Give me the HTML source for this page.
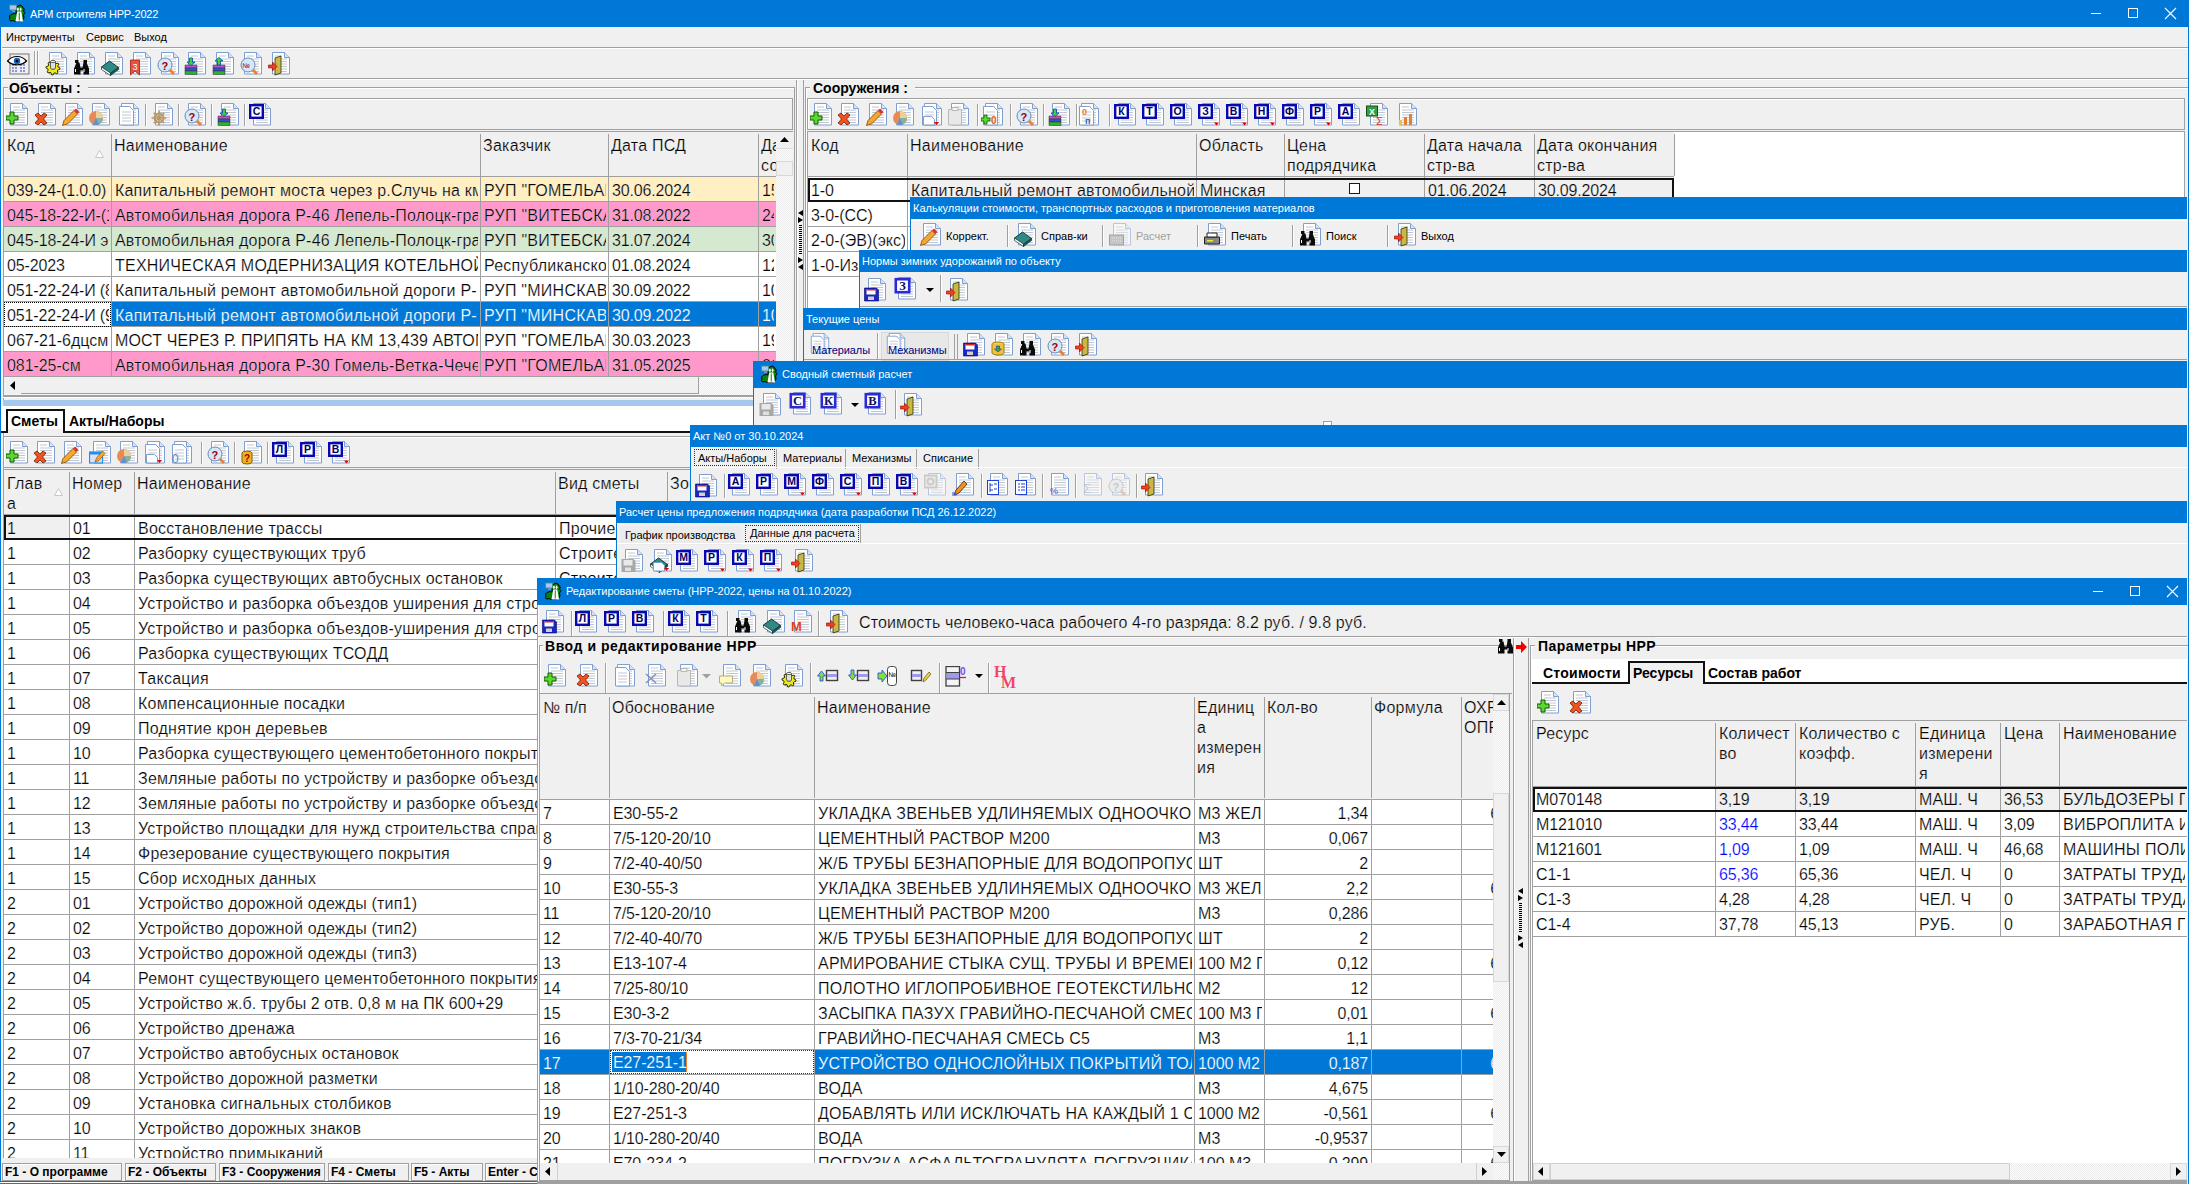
<!DOCTYPE html><html><head><meta charset="utf-8"><title>АРМ строителя НРР-2022</title><style>*{margin:0;padding:0}html,body{width:2189px;height:1184px;overflow:hidden;background:#f0f0f0}body{position:relative;font-family:"Liberation Sans",sans-serif}body div,body svg{position:absolute}.t{white-space:nowrap;font-family:"Liberation Sans",sans-serif}</style></head><body><div style="left:0px;top:0px;width:2189px;height:1184px;background:#f0f0f0"></div>
<div style="left:0px;top:0px;width:2189px;height:27px;background:#0078d7"></div>
<svg style="left:9px;top:4px" width="17" height="18" viewBox="0 0 17 18"><path d="M0.5 12L2 10.5L5 9.5L7 10L7.5 4L9 2L11 1L13 2L14 4L15.5 5L14.5 7L16 8.5L14.5 11L15 14L13.5 16L12 17.5H6L4 16.5L1.5 17L0.3 15.5L1 14z" fill="#078407" stroke="#000" stroke-width="1"/><rect x="0.5" y="1" width="7" height="5" fill="#a8c8f0" stroke="#4a8a8a" stroke-width=".9"/><path d="M3 6.5h3v1h-3z" fill="#c0a0d0"/><path d="M6.5 17.5L8.2 7.5H12.3L14 17.5z" fill="#fff"/><path d="M10.25 8.5V16.5" stroke="#078407" stroke-width="1"/><ellipse cx="8.9" cy="5.2" rx=".9" ry="1.7" fill="#fff"/><ellipse cx="11.6" cy="5.2" rx=".9" ry="1.7" fill="#fff"/></svg>
<div class="t" style="left:30px;top:6px;font-size:11px;color:#fff;line-height:16px;letter-spacing:-0.2px">АРМ строителя НРР-2022</div>
<svg style="left:2090px;top:7px" width="12" height="12" viewBox="0 0 12 12"><path d="M1 6.5h10" stroke="#fff" stroke-width="1"/></svg>
<svg style="left:2127px;top:7px" width="12" height="12" viewBox="0 0 12 12"><rect x="1.5" y="1.5" width="9" height="9" fill="none" stroke="#fff" stroke-width="1"/></svg>
<svg style="left:2164px;top:7px" width="13" height="13" viewBox="0 0 13 13"><path d="M1 1l11 11M12 1l-11 11" stroke="#fff" stroke-width="1.1"/></svg>
<div class="t" style="left:6px;top:29px;font-size:11px;color:#000;line-height:16px;">Инструменты</div>
<div class="t" style="left:86px;top:29px;font-size:11px;color:#000;line-height:16px;">Сервис</div>
<div class="t" style="left:134px;top:29px;font-size:11px;color:#000;line-height:16px;">Выход</div>
<div style="left:1px;top:47px;width:2187px;height:1px;background:#a0a0a0"></div>
<div style="left:1px;top:48px;width:2187px;height:1px;background:#fff"></div>
<div style="left:1px;top:78px;width:2187px;height:1px;background:#a0a0a0"></div>
<div style="left:1px;top:79px;width:2187px;height:1px;background:#fff"></div>
<div style="left:1px;top:47px;width:1px;height:32px;background:#fff"></div>
<svg style="left:7px;top:53px" width="23" height="22" viewBox="0 0 23 22"><rect x="3" y="1" width="19" height="20" fill="#eee" stroke="#777"/><path d="M5 12h6M13 12h6M5 15h6M13 15h6M5 18h6M13 18h6" stroke="#2040c0" stroke-dasharray="2 1"/><path d="M0.5 8c5-6 14-6 19 0c-5 5-14 5-19 0z" fill="#fff" stroke="#000" stroke-width="1.2"/><circle cx="10" cy="8" r="3.2" fill="#1560c0"/><circle cx="10" cy="8" r="1.3" fill="#000"/></svg>
<div style="left:34px;top:51px;width:1px;height:24px;background:#a0a0a0"></div>
<div style="left:35px;top:51px;width:1px;height:24px;background:#fff"></div>
<div style="left:37px;top:51px;width:1px;height:24px;background:#a0a0a0"></div>
<div style="left:38px;top:51px;width:1px;height:24px;background:#fff"></div>
<svg style="left:45px;top:52px;" width="24" height="24" viewBox="0 0 24 24"><path d="M4.5 0.5h12l5 5v16.5h-17z" fill="#fff" stroke="#7f9fd0"/><path d="M16.5 0.5v5h5" fill="#d8e4f6" stroke="#7f9fd0"/><path d="M7 4h7M7 7h12M7 9.5h12M7 12h12M7 14.5h12M7 17h12M7 19.5h12" stroke="#c0c6d0" stroke-width="1"/><path d="M8.00 9.00L9.37 9.13L9.99 11.20L10.89 11.68L12.95 11.05L13.82 12.11L12.80 14.01L13.10 14.99L15.00 16.00L14.87 17.37L12.80 17.99L12.32 18.89L12.95 20.95L11.89 21.82L9.99 20.80L9.01 21.10L8.00 23.00L6.63 22.87L6.01 20.80L5.11 20.32L3.05 20.95L2.18 19.89L3.20 17.99L2.90 17.01L1.00 16.00L1.13 14.63L3.20 14.01L3.68 13.11L3.05 11.05L4.11 10.18L6.01 11.20L6.99 10.90z" fill="#f0e818" stroke="#303000" stroke-width="1"/><circle cx="8" cy="16" r="2.2" fill="#b0b060"/><path d="M5.5 9.5h5v6.5a2.5 1.2 0 0 1-5 0z" fill="#e0e0e0" stroke="#404040" stroke-width=".8"/><ellipse cx="8" cy="9.5" rx="2.5" ry="1.1" fill="#fff" stroke="#404040" stroke-width=".8"/></svg>
<svg style="left:73px;top:52px;" width="24" height="24" viewBox="0 0 24 24"><path d="M4.5 0.5h12l5 5v16.5h-17z" fill="#fff" stroke="#7f9fd0"/><path d="M16.5 0.5v5h5" fill="#d8e4f6" stroke="#7f9fd0"/><path d="M7 4h7M7 7h12M7 9.5h12M7 12h12M7 14.5h12M7 17h12M7 19.5h12" stroke="#c0c6d0" stroke-width="1"/><path d="M1 22.5v-6l2.5-6h3l1 5h2l1-5h3l2.5 6v6h-5.5v-4h-3v4z" fill="#0a0a0a"/><rect x="2" y="8" width="3.5" height="3" fill="#0a0a0a"/><rect x="10.5" y="8" width="3.5" height="3" fill="#0a0a0a"/><path d="M2.5 17v3M11 17v3" stroke="#fff" stroke-width="1"/></svg>
<svg style="left:101px;top:52px;" width="24" height="24" viewBox="0 0 24 24"><path d="M4.5 0.5h12l5 5v16.5h-17z" fill="#fff" stroke="#7f9fd0"/><path d="M16.5 0.5v5h5" fill="#d8e4f6" stroke="#7f9fd0"/><path d="M7 4h7M7 7h12M7 9.5h12M7 12h12M7 14.5h12M7 17h12M7 19.5h12" stroke="#c0c6d0" stroke-width="1"/><path d="M0.5 15l8-6 9 6.5-8 6z" fill="#2f8a86" stroke="#0c3030" stroke-width=".9"/><path d="M0.5 15v2.5l9 6v-2.5z" fill="#fff" stroke="#0c3030" stroke-width=".7"/><path d="M9.5 21v2.5l8-6v-2z" fill="#1f5a58" stroke="#0c3030" stroke-width=".7"/></svg>
<svg style="left:129px;top:52px;" width="24" height="24" viewBox="0 0 24 24"><path d="M4.5 0.5h12l5 5v16.5h-17z" fill="#fff" stroke="#7f9fd0"/><path d="M16.5 0.5v5h5" fill="#d8e4f6" stroke="#7f9fd0"/><path d="M7 4h7M7 7h12M7 9.5h12M7 12h12M7 14.5h12M7 17h12M7 19.5h12" stroke="#c0c6d0" stroke-width="1"/><path d="M1.5 8h9v15l-4.5-4-4.5 4z" fill="#e85040" stroke="#a02010" stroke-width=".8"/><text x="3.5" y="18" font-size="9" fill="#fff" font-family="Liberation Sans">3</text></svg>
<svg style="left:157px;top:52px;" width="24" height="24" viewBox="0 0 24 24"><path d="M4.5 0.5h12l5 5v16.5h-17z" fill="#fff" stroke="#7f9fd0"/><path d="M16.5 0.5v5h5" fill="#d8e4f6" stroke="#7f9fd0"/><path d="M7 4h7M7 7h12M7 9.5h12M7 12h12M7 14.5h12M7 17h12M7 19.5h12" stroke="#c0c6d0" stroke-width="1"/><circle cx="8" cy="13" r="7" fill="#d4e8fa" stroke="#6a8cb8"/><text x="4.5" y="18" font-size="11" font-weight="bold" fill="#a00000" font-family="Liberation Sans">?</text><path d="M13 18l4 4" stroke="#f08030" stroke-width="3"/></svg>
<svg style="left:184px;top:52px;" width="24" height="24" viewBox="0 0 24 24"><path d="M4.5 0.5h12l5 5v16.5h-17z" fill="#fff" stroke="#7f9fd0"/><path d="M16.5 0.5v5h5" fill="#d8e4f6" stroke="#7f9fd0"/><path d="M7 4h7M7 7h12M7 9.5h12M7 12h12M7 14.5h12M7 17h12M7 19.5h12" stroke="#c0c6d0" stroke-width="1"/><path d="M1 13h12v3h-12z" fill="#c050c0" stroke="#333" stroke-width=".5"/><path d="M1 16h12v3h-12z" fill="#3050d0" stroke="#333" stroke-width=".5"/><path d="M1 19h12v3.5h-12z" fill="#30b030" stroke="#333" stroke-width=".5"/><path d="M5.5 6h3v4h2.5l-4 3.5-4-3.5h2.5z" fill="#40d040" stroke="#0040c0" stroke-width=".8"/></svg>
<svg style="left:212px;top:52px;" width="24" height="24" viewBox="0 0 24 24"><path d="M4.5 0.5h12l5 5v16.5h-17z" fill="#fff" stroke="#7f9fd0"/><path d="M16.5 0.5v5h5" fill="#d8e4f6" stroke="#7f9fd0"/><path d="M7 4h7M7 7h12M7 9.5h12M7 12h12M7 14.5h12M7 17h12M7 19.5h12" stroke="#c0c6d0" stroke-width="1"/><path d="M1 13h12v3h-12z" fill="#c050c0" stroke="#333" stroke-width=".5"/><path d="M1 16h12v3h-12z" fill="#3050d0" stroke="#333" stroke-width=".5"/><path d="M1 19h12v3.5h-12z" fill="#30b030" stroke="#333" stroke-width=".5"/><path d="M5.5 13h3v-4h2.5l-4-3.5-4 3.5h2.5z" fill="#40d040" stroke="#0040c0" stroke-width=".8"/></svg>
<svg style="left:240px;top:52px;" width="24" height="24" viewBox="0 0 24 24"><path d="M4.5 0.5h12l5 5v16.5h-17z" fill="#fff" stroke="#7f9fd0"/><path d="M16.5 0.5v5h5" fill="#d8e4f6" stroke="#7f9fd0"/><path d="M7 4h7M7 7h12M7 9.5h12M7 12h12M7 14.5h12M7 17h12M7 19.5h12" stroke="#c0c6d0" stroke-width="1"/><circle cx="8" cy="13" r="7" fill="#d4e8fa" stroke="#6a8cb8"/><text x="2.5" y="16" font-size="7" fill="#a00000" font-family="Liberation Sans">№</text><path d="M13 18l4 4" stroke="#f08030" stroke-width="3"/></svg>
<svg style="left:268px;top:52px;" width="24" height="24" viewBox="0 0 24 24"><path d="M4.5 0.5h12l5 5v16.5h-17z" fill="#fff" stroke="#7f9fd0"/><path d="M16.5 0.5v5h5" fill="#d8e4f6" stroke="#7f9fd0"/><path d="M7 4h7M7 7h12M7 9.5h12M7 12h12M7 14.5h12M7 17h12M7 19.5h12" stroke="#c0c6d0" stroke-width="1"/><path d="M7 6l6-2v17l-6 2z" fill="#c8b848" stroke="#303000" stroke-width=".8"/><path d="M0.5 13h4v-3l4.5 4.5-4.5 4.5v-3h-4z" fill="#f04020" stroke="#900" stroke-width=".6"/></svg>
<div style="left:3px;top:87px;width:792px;height:1100px;border:1px solid #a0a0a0;border-bottom:none;box-sizing:border-box;box-shadow:inset 1px 1px 0 #fff"></div>
<div style="left:8px;top:80px;width:80px;height:16px;background:#f0f0f0"></div>
<div class="t" style="left:9px;top:79px;font-size:14px;color:#000;line-height:18px;font-weight:bold;">Объекты :</div>
<div style="left:3px;top:98px;width:790px;height:32px;border:1px solid #a0a0a0;box-sizing:border-box;box-shadow:inset 1px 1px 0 #fff;background:#f0f0f0"></div>
<svg style="left:6px;top:103px;" width="24" height="24" viewBox="0 0 24 24"><path d="M4.5 0.5h12l5 5v16.5h-17z" fill="#fff" stroke="#7f9fd0"/><path d="M16.5 0.5v5h5" fill="#d8e4f6" stroke="#7f9fd0"/><path d="M7 4h7M7 7h12M7 9.5h12M7 12h12M7 14.5h12M7 17h12M7 19.5h12" stroke="#c0c6d0" stroke-width="1"/><path d="M4 9h4v4h4v4h-4v4h-4v-4h-4v-4h4z" fill="#58d830" stroke="#185800" stroke-width="1"/></svg>
<svg style="left:34px;top:103px;" width="24" height="24" viewBox="0 0 24 24"><path d="M4.5 0.5h12l5 5v16.5h-17z" fill="#fff" stroke="#7f9fd0"/><path d="M16.5 0.5v5h5" fill="#d8e4f6" stroke="#7f9fd0"/><path d="M7 4h7M7 7h12M7 9.5h12M7 12h12M7 14.5h12M7 17h12M7 19.5h12" stroke="#c0c6d0" stroke-width="1"/><path d="M1 12l3-2 3 3 3-3 3 2-3.5 4 3.5 4-3 2-3-3-3 3-3-2 3.5-4z" fill="#f0541c" stroke="#701800" stroke-width=".8"/></svg>
<svg style="left:61px;top:103px;" width="24" height="24" viewBox="0 0 24 24"><path d="M4.5 0.5h12l5 5v16.5h-17z" fill="#fff" stroke="#7f9fd0"/><path d="M16.5 0.5v5h5" fill="#d8e4f6" stroke="#7f9fd0"/><path d="M7 4h7M7 7h12M7 9.5h12M7 12h12M7 14.5h12M7 17h12M7 19.5h12" stroke="#c0c6d0" stroke-width="1"/><path d="M1.5 22.5l1.5-5 10-10 3.5 3.5-10 10z" fill="#f4a830" stroke="#804000" stroke-width=".8"/><path d="M13 7.5l2-2 3.5 3.5-2 2z" fill="#e03030"/></svg>
<svg style="left:88px;top:103px;" width="24" height="24" viewBox="0 0 24 24"><path d="M4.5 0.5h12l5 5v16.5h-17z" fill="#fff" stroke="#7f9fd0"/><path d="M16.5 0.5v5h5" fill="#d8e4f6" stroke="#7f9fd0"/><path d="M7 4h7M7 7h12M7 9.5h12M7 12h12M7 14.5h12M7 17h12M7 19.5h12" stroke="#c0c6d0" stroke-width="1"/><circle cx="8" cy="15" r="7" fill="#e88a58"/><path d="M8 15v-7a7 7 0 0 1 7 7z" fill="#ecd098"/><path d="M8 15h7a7 7 0 0 1-4 6.4z" fill="#84b4a0"/><path d="M8 15l3 6.4a7 7 0 0 1-6 0z" fill="#5894d4"/></svg>
<svg style="left:117px;top:103px;" width="24" height="24" viewBox="0 0 24 24"><path d="M4.5 0.5h12l5 5v16.5h-17z" fill="#fff" stroke="#7f9fd0"/><path d="M16.5 0.5v5h5" fill="#d8e4f6" stroke="#7f9fd0"/><path d="M7 4h7M7 7h12M7 9.5h12M7 12h12M7 14.5h12M7 17h12M7 19.5h12" stroke="#c0c6d0" stroke-width="1"/><path d="M2.5 3.5h10l4 4v14.5h-14z" fill="#fff" stroke="#7f9fd0"/><path d="M5 9h9M5 12h9M5 15h9M5 18h9" stroke="#c0c6d0"/></svg>
<div style="left:145px;top:104px;width:1px;height:22px;background:#a0a0a0"></div>
<div style="left:146px;top:104px;width:1px;height:22px;background:#ffffff"></div>
<svg style="left:151px;top:103px;" width="24" height="24" viewBox="0 0 24 24"><path d="M4.5 0.5h12l5 5v16.5h-17z" fill="#fff" stroke="#7f9fd0"/><path d="M16.5 0.5v5h5" fill="#d8e4f6" stroke="#7f9fd0"/><path d="M7 4h7M7 7h12M7 9.5h12M7 12h12M7 14.5h12M7 17h12M7 19.5h12" stroke="#c0c6d0" stroke-width="1"/><circle cx="8" cy="15" r="4.5" fill="none" stroke="#b89868" stroke-width="2"/><circle cx="8" cy="15" r="1.6" fill="#b89868"/><path d="M8 7.5v15M0.5 15h15M2.7 9.7l10.6 10.6M13.3 9.7l-10.6 10.6" stroke="#b89868" stroke-width="1.6"/></svg>
<div style="left:178px;top:104px;width:1px;height:22px;background:#a0a0a0"></div>
<div style="left:179px;top:104px;width:1px;height:22px;background:#ffffff"></div>
<svg style="left:184px;top:103px;" width="24" height="24" viewBox="0 0 24 24"><path d="M4.5 0.5h12l5 5v16.5h-17z" fill="#fff" stroke="#7f9fd0"/><path d="M16.5 0.5v5h5" fill="#d8e4f6" stroke="#7f9fd0"/><path d="M7 4h7M7 7h12M7 9.5h12M7 12h12M7 14.5h12M7 17h12M7 19.5h12" stroke="#c0c6d0" stroke-width="1"/><circle cx="8" cy="13" r="7" fill="#d4e8fa" stroke="#6a8cb8"/><text x="4.5" y="18" font-size="11" font-weight="bold" fill="#a00000" font-family="Liberation Sans">?</text><path d="M13 18l4 4" stroke="#f08030" stroke-width="3"/></svg>
<div style="left:211px;top:104px;width:1px;height:22px;background:#a0a0a0"></div>
<div style="left:212px;top:104px;width:1px;height:22px;background:#ffffff"></div>
<svg style="left:217px;top:103px;" width="24" height="24" viewBox="0 0 24 24"><path d="M4.5 0.5h12l5 5v16.5h-17z" fill="#fff" stroke="#7f9fd0"/><path d="M16.5 0.5v5h5" fill="#d8e4f6" stroke="#7f9fd0"/><path d="M7 4h7M7 7h12M7 9.5h12M7 12h12M7 14.5h12M7 17h12M7 19.5h12" stroke="#c0c6d0" stroke-width="1"/><path d="M1 13h12v3h-12z" fill="#c050c0" stroke="#333" stroke-width=".5"/><path d="M1 16h12v3h-12z" fill="#3050d0" stroke="#333" stroke-width=".5"/><path d="M1 19h12v3.5h-12z" fill="#30b030" stroke="#333" stroke-width=".5"/><path d="M5.5 6h3v4h2.5l-4 3.5-4-3.5h2.5z" fill="#40d040" stroke="#0040c0" stroke-width=".8"/></svg>
<div style="left:244px;top:104px;width:1px;height:22px;background:#a0a0a0"></div>
<div style="left:245px;top:104px;width:1px;height:22px;background:#ffffff"></div>
<svg style="left:249px;top:103px;" width="24" height="24" viewBox="0 0 24 24"><path d="M4.5 0.5h12l5 5v16.5h-17z" fill="#fff" stroke="#7f9fd0"/><path d="M16.5 0.5v5h5" fill="#d8e4f6" stroke="#7f9fd0"/><path d="M7 4h7M7 7h12M7 9.5h12M7 12h12M7 14.5h12M7 17h12M7 19.5h12" stroke="#c0c6d0" stroke-width="1"/><rect x="1.2" y="2.2" width="12.6" height="12.6" fill="#fff" stroke="#0808b0" stroke-width="2.4"/><text x="7.5" y="12.3" font-size="10.5" font-weight="bold" fill="#000060" text-anchor="middle" font-family="Liberation Sans">C</text></svg>
<div style="left:3px;top:131px;width:790px;height:265px;background:#fff;border:1px solid #a0a0a0;box-sizing:border-box"></div>
<div style="left:4px;top:132px;width:772px;height:45px;background:#f0f0f0"></div>
<div style="left:4px;top:176px;width:772px;height:1px;background:#a0a0a0"></div>
<div style="left:111px;top:134px;width:1px;height:42px;background:#a0a0a0"></div>
<div style="left:480px;top:134px;width:1px;height:42px;background:#a0a0a0"></div>
<div style="left:608px;top:134px;width:1px;height:42px;background:#a0a0a0"></div>
<div style="left:758px;top:134px;width:1px;height:42px;background:#a0a0a0"></div>
<div class="t" style="left:7px;top:136px;font-size:16px;color:#000;width:751px;overflow:hidden;line-height:20px;-webkit-text-stroke:0.2px #fff;letter-spacing:0.25px;">Код</div>
<div class="t" style="left:114px;top:136px;font-size:16px;color:#000;width:644px;overflow:hidden;line-height:20px;-webkit-text-stroke:0.2px #fff;letter-spacing:0.25px;">Наименование</div>
<div class="t" style="left:483px;top:136px;font-size:16px;color:#000;width:275px;overflow:hidden;line-height:20px;-webkit-text-stroke:0.2px #fff;letter-spacing:0.25px;">Заказчик</div>
<div class="t" style="left:611px;top:136px;font-size:16px;color:#000;width:147px;overflow:hidden;line-height:20px;-webkit-text-stroke:0.2px #fff;letter-spacing:0.219px;">Дата ПСД</div>
<div class="t" style="left:761px;top:136px;font-size:16px;color:#000;width:15px;overflow:hidden;line-height:20px;-webkit-text-stroke:0.2px #fff;letter-spacing:0.25px;">Дата<br>создания</div>
<svg style="left:95px;top:150px" width="9" height="8" viewBox="0 0 9 8"><path d="M4.5 0.5L8.5 7.5H0.5z" fill="#fff" stroke="#c8c8c8"/></svg>
<div style="left:4px;top:177px;width:107px;height:25px;background:#ffefc3"></div>
<div class="t" style="left:7px;top:181px;font-size:16px;color:#000;width:102px;overflow:hidden;line-height:20px;-webkit-text-stroke:0.2px #fff;letter-spacing:-0.15px;">039-24-(1.0.0)</div>
<div style="left:112px;top:177px;width:368px;height:25px;background:#ffefc3"></div>
<div class="t" style="left:115px;top:181px;font-size:16px;color:#000;width:363px;overflow:hidden;line-height:20px;-webkit-text-stroke:0.2px #fff;letter-spacing:0.187px;">Капитальный ремонт моста через р.Случь на км 12</div>
<div style="left:481px;top:177px;width:127px;height:25px;background:#ffefc3"></div>
<div class="t" style="left:484px;top:181px;font-size:16px;color:#000;width:122px;overflow:hidden;line-height:20px;-webkit-text-stroke:0.2px #fff;letter-spacing:0.237px;">РУП &quot;ГОМЕЛЬАВТОДОР&quot;</div>
<div style="left:609px;top:177px;width:149px;height:25px;background:#ffefc3"></div>
<div class="t" style="left:612px;top:181px;font-size:16px;color:#000;width:144px;overflow:hidden;line-height:20px;-webkit-text-stroke:0.2px #fff;letter-spacing:-0.15px;">30.06.2024</div>
<div style="left:759px;top:177px;width:17px;height:25px;background:#ffefc3"></div>
<div class="t" style="left:762px;top:181px;font-size:16px;color:#000;width:12px;overflow:hidden;line-height:20px;-webkit-text-stroke:0.2px #fff;letter-spacing:-0.15px;">15.05.2024</div>
<div style="left:4px;top:201px;width:772px;height:1px;background:#a0a0a0"></div>
<div style="left:4px;top:202px;width:107px;height:25px;background:#ff99cc"></div>
<div class="t" style="left:7px;top:206px;font-size:16px;color:#000;width:102px;overflow:hidden;line-height:20px;-webkit-text-stroke:0.2px #fff;letter-spacing:-0.123px;">045-18-22-И-(1)</div>
<div style="left:112px;top:202px;width:368px;height:25px;background:#ff99cc"></div>
<div class="t" style="left:115px;top:206px;font-size:16px;color:#000;width:363px;overflow:hidden;line-height:20px;-webkit-text-stroke:0.2px #fff;letter-spacing:0.191px;">Автомобильная дорога Р-46 Лепель-Полоцк-граница</div>
<div style="left:481px;top:202px;width:127px;height:25px;background:#ff99cc"></div>
<div class="t" style="left:484px;top:206px;font-size:16px;color:#000;width:122px;overflow:hidden;line-height:20px;-webkit-text-stroke:0.2px #fff;letter-spacing:0.237px;">РУП &quot;ВИТЕБСКАВТОДОР&quot;</div>
<div style="left:609px;top:202px;width:149px;height:25px;background:#ff99cc"></div>
<div class="t" style="left:612px;top:206px;font-size:16px;color:#000;width:144px;overflow:hidden;line-height:20px;-webkit-text-stroke:0.2px #fff;letter-spacing:-0.15px;">31.08.2022</div>
<div style="left:759px;top:202px;width:17px;height:25px;background:#ff99cc"></div>
<div class="t" style="left:762px;top:206px;font-size:16px;color:#000;width:12px;overflow:hidden;line-height:20px;-webkit-text-stroke:0.2px #fff;letter-spacing:-0.15px;">24.05.2022</div>
<div style="left:4px;top:226px;width:772px;height:1px;background:#a0a0a0"></div>
<div style="left:4px;top:227px;width:107px;height:25px;background:#d5e8d0"></div>
<div class="t" style="left:7px;top:231px;font-size:16px;color:#000;width:102px;overflow:hidden;line-height:20px;-webkit-text-stroke:0.2px #fff;letter-spacing:-0.077px;">045-18-24-И э</div>
<div style="left:112px;top:227px;width:368px;height:25px;background:#d5e8d0"></div>
<div class="t" style="left:115px;top:231px;font-size:16px;color:#000;width:363px;overflow:hidden;line-height:20px;-webkit-text-stroke:0.2px #fff;letter-spacing:0.191px;">Автомобильная дорога Р-46 Лепель-Полоцк-граница</div>
<div style="left:481px;top:227px;width:127px;height:25px;background:#d5e8d0"></div>
<div class="t" style="left:484px;top:231px;font-size:16px;color:#000;width:122px;overflow:hidden;line-height:20px;-webkit-text-stroke:0.2px #fff;letter-spacing:0.237px;">РУП &quot;ВИТЕБСКАВТОДОР&quot;</div>
<div style="left:609px;top:227px;width:149px;height:25px;background:#d5e8d0"></div>
<div class="t" style="left:612px;top:231px;font-size:16px;color:#000;width:144px;overflow:hidden;line-height:20px;-webkit-text-stroke:0.2px #fff;letter-spacing:-0.15px;">31.07.2024</div>
<div style="left:759px;top:227px;width:17px;height:25px;background:#d5e8d0"></div>
<div class="t" style="left:762px;top:231px;font-size:16px;color:#000;width:12px;overflow:hidden;line-height:20px;-webkit-text-stroke:0.2px #fff;letter-spacing:-0.15px;">30.05.2024</div>
<div style="left:4px;top:251px;width:772px;height:1px;background:#a0a0a0"></div>
<div style="left:4px;top:252px;width:107px;height:25px;background:#fff"></div>
<div class="t" style="left:7px;top:256px;font-size:16px;color:#000;width:102px;overflow:hidden;line-height:20px;-webkit-text-stroke:0.2px #fff;letter-spacing:-0.15px;">05-2023</div>
<div style="left:112px;top:252px;width:368px;height:25px;background:#fff"></div>
<div class="t" style="left:115px;top:256px;font-size:16px;color:#000;width:363px;overflow:hidden;line-height:20px;-webkit-text-stroke:0.2px #fff;letter-spacing:0.235px;">ТЕХНИЧЕСКАЯ МОДЕРНИЗАЦИЯ КОТЕЛЬНОЙ</div>
<div style="left:481px;top:252px;width:127px;height:25px;background:#fff"></div>
<div class="t" style="left:484px;top:256px;font-size:16px;color:#000;width:122px;overflow:hidden;line-height:20px;-webkit-text-stroke:0.2px #fff;letter-spacing:0.25px;">Республиканское</div>
<div style="left:609px;top:252px;width:149px;height:25px;background:#fff"></div>
<div class="t" style="left:612px;top:256px;font-size:16px;color:#000;width:144px;overflow:hidden;line-height:20px;-webkit-text-stroke:0.2px #fff;letter-spacing:-0.15px;">01.08.2024</div>
<div style="left:759px;top:252px;width:17px;height:25px;background:#fff"></div>
<div class="t" style="left:762px;top:256px;font-size:16px;color:#000;width:12px;overflow:hidden;line-height:20px;-webkit-text-stroke:0.2px #fff;letter-spacing:-0.15px;">12.06.2024</div>
<div style="left:4px;top:276px;width:772px;height:1px;background:#a0a0a0"></div>
<div style="left:4px;top:277px;width:107px;height:25px;background:#fff"></div>
<div class="t" style="left:7px;top:281px;font-size:16px;color:#000;width:102px;overflow:hidden;line-height:20px;-webkit-text-stroke:0.2px #fff;letter-spacing:-0.113px;">051-22-24-И (8)</div>
<div style="left:112px;top:277px;width:368px;height:25px;background:#fff"></div>
<div class="t" style="left:115px;top:281px;font-size:16px;color:#000;width:363px;overflow:hidden;line-height:20px;-webkit-text-stroke:0.2px #fff;letter-spacing:0.217px;">Капитальный ремонт автомобильной дороги Р-</div>
<div style="left:481px;top:277px;width:127px;height:25px;background:#fff"></div>
<div class="t" style="left:484px;top:281px;font-size:16px;color:#000;width:122px;overflow:hidden;line-height:20px;-webkit-text-stroke:0.2px #fff;letter-spacing:0.236px;">РУП &quot;МИНСКАВТОДОР&quot;</div>
<div style="left:609px;top:277px;width:149px;height:25px;background:#fff"></div>
<div class="t" style="left:612px;top:281px;font-size:16px;color:#000;width:144px;overflow:hidden;line-height:20px;-webkit-text-stroke:0.2px #fff;letter-spacing:-0.15px;">30.09.2022</div>
<div style="left:759px;top:277px;width:17px;height:25px;background:#fff"></div>
<div class="t" style="left:762px;top:281px;font-size:16px;color:#000;width:12px;overflow:hidden;line-height:20px;-webkit-text-stroke:0.2px #fff;letter-spacing:-0.15px;">10.06.2022</div>
<div style="left:4px;top:301px;width:772px;height:1px;background:#a0a0a0"></div>
<div style="left:4px;top:302px;width:107px;height:25px;background:#fff"></div>
<div class="t" style="left:7px;top:306px;font-size:16px;color:#000;width:102px;overflow:hidden;line-height:20px;-webkit-text-stroke:0.2px #fff;letter-spacing:-0.113px;">051-22-24-И (9)</div>
<div style="left:112px;top:302px;width:368px;height:25px;background:#0078d7"></div>
<div class="t" style="left:115px;top:306px;font-size:16px;color:#fff;width:363px;overflow:hidden;line-height:20px;-webkit-text-stroke:0.2px #0078d7;letter-spacing:0.217px;">Капитальный ремонт автомобильной дороги Р-</div>
<div style="left:481px;top:302px;width:127px;height:25px;background:#0078d7"></div>
<div class="t" style="left:484px;top:306px;font-size:16px;color:#fff;width:122px;overflow:hidden;line-height:20px;-webkit-text-stroke:0.2px #0078d7;letter-spacing:0.236px;">РУП &quot;МИНСКАВТОДОР&quot;</div>
<div style="left:609px;top:302px;width:149px;height:25px;background:#0078d7"></div>
<div class="t" style="left:612px;top:306px;font-size:16px;color:#fff;width:144px;overflow:hidden;line-height:20px;-webkit-text-stroke:0.2px #0078d7;letter-spacing:-0.15px;">30.09.2022</div>
<div style="left:759px;top:302px;width:17px;height:25px;background:#0078d7"></div>
<div class="t" style="left:762px;top:306px;font-size:16px;color:#fff;width:12px;overflow:hidden;line-height:20px;-webkit-text-stroke:0.2px #0078d7;letter-spacing:-0.15px;">10.06.2022</div>
<div style="left:4px;top:326px;width:772px;height:1px;background:#a0a0a0"></div>
<div style="left:4px;top:327px;width:107px;height:25px;background:#fff"></div>
<div class="t" style="left:7px;top:331px;font-size:16px;color:#000;width:102px;overflow:hidden;line-height:20px;-webkit-text-stroke:0.2px #fff;letter-spacing:-0.017px;">067-21-6дцсм</div>
<div style="left:112px;top:327px;width:368px;height:25px;background:#fff"></div>
<div class="t" style="left:115px;top:331px;font-size:16px;color:#000;width:363px;overflow:hidden;line-height:20px;-webkit-text-stroke:0.2px #fff;letter-spacing:0.142px;">МОСТ ЧЕРЕЗ Р. ПРИПЯТЬ НА КМ 13,439 АВТОМОБ</div>
<div style="left:481px;top:327px;width:127px;height:25px;background:#fff"></div>
<div class="t" style="left:484px;top:331px;font-size:16px;color:#000;width:122px;overflow:hidden;line-height:20px;-webkit-text-stroke:0.2px #fff;letter-spacing:0.237px;">РУП &quot;ГОМЕЛЬАВТОДОР&quot;</div>
<div style="left:609px;top:327px;width:149px;height:25px;background:#fff"></div>
<div class="t" style="left:612px;top:331px;font-size:16px;color:#000;width:144px;overflow:hidden;line-height:20px;-webkit-text-stroke:0.2px #fff;letter-spacing:-0.15px;">30.03.2023</div>
<div style="left:759px;top:327px;width:17px;height:25px;background:#fff"></div>
<div class="t" style="left:762px;top:331px;font-size:16px;color:#000;width:12px;overflow:hidden;line-height:20px;-webkit-text-stroke:0.2px #fff;letter-spacing:-0.15px;">19.01.2023</div>
<div style="left:4px;top:351px;width:772px;height:1px;background:#a0a0a0"></div>
<div style="left:4px;top:352px;width:107px;height:25px;background:#ff99cc"></div>
<div class="t" style="left:7px;top:356px;font-size:16px;color:#000;width:102px;overflow:hidden;line-height:20px;-webkit-text-stroke:0.2px #fff;letter-spacing:-0.061px;">081-25-см</div>
<div style="left:112px;top:352px;width:368px;height:25px;background:#ff99cc"></div>
<div class="t" style="left:115px;top:356px;font-size:16px;color:#000;width:363px;overflow:hidden;line-height:20px;-webkit-text-stroke:0.2px #fff;letter-spacing:0.19px;">Автомобильная дорога Р-30 Гомель-Ветка-Чечерск</div>
<div style="left:481px;top:352px;width:127px;height:25px;background:#ff99cc"></div>
<div class="t" style="left:484px;top:356px;font-size:16px;color:#000;width:122px;overflow:hidden;line-height:20px;-webkit-text-stroke:0.2px #fff;letter-spacing:0.237px;">РУП &quot;ГОМЕЛЬАВТОДОР&quot;</div>
<div style="left:609px;top:352px;width:149px;height:25px;background:#ff99cc"></div>
<div class="t" style="left:612px;top:356px;font-size:16px;color:#000;width:144px;overflow:hidden;line-height:20px;-webkit-text-stroke:0.2px #fff;letter-spacing:-0.15px;">31.05.2025</div>
<div style="left:759px;top:352px;width:17px;height:25px;background:#ff99cc"></div>
<div class="t" style="left:762px;top:356px;font-size:16px;color:#000;width:12px;overflow:hidden;line-height:20px;-webkit-text-stroke:0.2px #fff;letter-spacing:-0.15px;">01.02.2025</div>
<div style="left:4px;top:376px;width:772px;height:1px;background:#a0a0a0"></div>
<div style="left:111px;top:177px;width:1px;height:200px;background:#a0a0a0"></div>
<div style="left:480px;top:177px;width:1px;height:200px;background:#a0a0a0"></div>
<div style="left:608px;top:177px;width:1px;height:200px;background:#a0a0a0"></div>
<div style="left:758px;top:177px;width:1px;height:200px;background:#a0a0a0"></div>
<div style="left:4px;top:302px;width:107px;height:25px;border:1px dotted #000;box-sizing:border-box"></div>
<div style="left:776px;top:132px;width:17px;height:245px;background:repeating-conic-gradient(#fdfdfd 0 25%,#ebebeb 0 50%) 0 0/2px 2px"></div>
<div style="left:776px;top:132px;width:17px;height:16px;background:#f0f0f0;border-bottom:1px solid #ddd"></div>
<svg style="left:780px;top:137px" width="9" height="5" viewBox="0 0 9 5"><path d="M0 5h9l-4.5-5z" fill="#000"/></svg>
<div style="left:776px;top:161px;width:17px;height:15px;background:#f0f0f0;border:1px solid #d8d8d8;box-sizing:border-box"></div>
<div style="left:4px;top:377px;width:789px;height:18px;background:repeating-conic-gradient(#fdfdfd 0 25%,#ebebeb 0 50%) 0 0/2px 2px"></div>
<div style="left:4px;top:377px;width:17px;height:17px;background:#f0f0f0;border-right:1px solid #d0d0d0"></div>
<div style="left:21px;top:377px;width:678px;height:17px;background:#f0f0f0;border-right:1px solid #a0a0a0;border-bottom:1px solid #a0a0a0;box-sizing:border-box"></div>
<svg style="left:10px;top:381px" width="5" height="9" viewBox="0 0 5 9"><path d="M5 0v9l-5-4.5z" fill="#000"/></svg>
<div style="left:3px;top:396px;width:790px;height:1px;background:#a0a0a0"></div>
<div style="left:3px;top:397px;width:790px;height:1px;background:#fff"></div>
<div style="left:3px;top:400px;width:790px;height:6px;background:#a6c8ee"></div>
<div style="left:1px;top:406px;width:790px;height:26px;background:#fff"></div>
<div style="left:1px;top:431px;width:790px;height:2px;background:#111"></div>
<div style="left:6px;top:409px;width:59px;height:24px;background:#fff;border:2px solid #111;border-bottom:none;box-sizing:border-box"></div>
<div style="left:8px;top:429px;width:55px;height:4px;background:#f0f0f0"></div>
<div class="t" style="left:11px;top:412px;font-size:14px;color:#000;line-height:18px;font-weight:bold;">Сметы</div>
<div class="t" style="left:69px;top:412px;font-size:14px;color:#000;line-height:18px;font-weight:bold;">Акты/Наборы</div>
<div style="left:3px;top:436px;width:790px;height:32px;border:1px solid #a0a0a0;box-sizing:border-box;box-shadow:inset 1px 1px 0 #fff;background:#f0f0f0"></div>
<svg style="left:6px;top:441px;" width="24" height="24" viewBox="0 0 24 24"><path d="M4.5 0.5h12l5 5v16.5h-17z" fill="#fff" stroke="#7f9fd0"/><path d="M16.5 0.5v5h5" fill="#d8e4f6" stroke="#7f9fd0"/><path d="M7 4h7M7 7h12M7 9.5h12M7 12h12M7 14.5h12M7 17h12M7 19.5h12" stroke="#c0c6d0" stroke-width="1"/><path d="M4 9h4v4h4v4h-4v4h-4v-4h-4v-4h4z" fill="#58d830" stroke="#185800" stroke-width="1"/></svg>
<svg style="left:33px;top:441px;" width="24" height="24" viewBox="0 0 24 24"><path d="M4.5 0.5h12l5 5v16.5h-17z" fill="#fff" stroke="#7f9fd0"/><path d="M16.5 0.5v5h5" fill="#d8e4f6" stroke="#7f9fd0"/><path d="M7 4h7M7 7h12M7 9.5h12M7 12h12M7 14.5h12M7 17h12M7 19.5h12" stroke="#c0c6d0" stroke-width="1"/><path d="M1 12l3-2 3 3 3-3 3 2-3.5 4 3.5 4-3 2-3-3-3 3-3-2 3.5-4z" fill="#f0541c" stroke="#701800" stroke-width=".8"/></svg>
<svg style="left:60px;top:441px;" width="24" height="24" viewBox="0 0 24 24"><path d="M4.5 0.5h12l5 5v16.5h-17z" fill="#fff" stroke="#7f9fd0"/><path d="M16.5 0.5v5h5" fill="#d8e4f6" stroke="#7f9fd0"/><path d="M7 4h7M7 7h12M7 9.5h12M7 12h12M7 14.5h12M7 17h12M7 19.5h12" stroke="#c0c6d0" stroke-width="1"/><path d="M1.5 22.5l1.5-5 10-10 3.5 3.5-10 10z" fill="#f4a830" stroke="#804000" stroke-width=".8"/><path d="M13 7.5l2-2 3.5 3.5-2 2z" fill="#e03030"/></svg>
<svg style="left:89px;top:441px;" width="24" height="24" viewBox="0 0 24 24"><path d="M4.5 0.5h12l5 5v16.5h-17z" fill="#fff" stroke="#7f9fd0"/><path d="M16.5 0.5v5h5" fill="#d8e4f6" stroke="#7f9fd0"/><path d="M7 4h7M7 7h12M7 9.5h12M7 12h12M7 14.5h12M7 17h12M7 19.5h12" stroke="#c0c6d0" stroke-width="1"/><rect x="0.5" y="11" width="13" height="11" fill="#e0e0f0" stroke="#2090f0" stroke-width="1.2"/><rect x="0.5" y="11" width="13" height="2.5" fill="#2090f0"/><path d="M6 21l1.5-4 6-7 2.5 2.5-6 7z" fill="#f4a830" stroke="#804000" stroke-width=".6"/></svg>
<svg style="left:116px;top:441px;" width="24" height="24" viewBox="0 0 24 24"><path d="M4.5 0.5h12l5 5v16.5h-17z" fill="#fff" stroke="#7f9fd0"/><path d="M16.5 0.5v5h5" fill="#d8e4f6" stroke="#7f9fd0"/><path d="M7 4h7M7 7h12M7 9.5h12M7 12h12M7 14.5h12M7 17h12M7 19.5h12" stroke="#c0c6d0" stroke-width="1"/><circle cx="8" cy="15" r="7" fill="#e88a58"/><path d="M8 15v-7a7 7 0 0 1 7 7z" fill="#ecd098"/><path d="M8 15h7a7 7 0 0 1-4 6.4z" fill="#84b4a0"/><path d="M8 15l3 6.4a7 7 0 0 1-6 0z" fill="#5894d4"/></svg>
<svg style="left:143px;top:441px;" width="24" height="24" viewBox="0 0 24 24"><path d="M4.5 0.5h12l5 5v16.5h-17z" fill="#fff" stroke="#7f9fd0"/><path d="M16.5 0.5v5h5" fill="#d8e4f6" stroke="#7f9fd0"/><path d="M7 4h7M7 7h12M7 9.5h12M7 12h12M7 14.5h12M7 17h12M7 19.5h12" stroke="#c0c6d0" stroke-width="1"/><path d="M2.5 3.5h10l4 4v14.5h-14z" fill="#fff" stroke="#7f9fd0"/><path d="M5 9h9M5 12h9M5 15h9M5 18h9" stroke="#c0c6d0"/><path d="M3.5 13.5h8l3 3v5.5h-11z" fill="#fff" stroke="#7f9fd0"/><path d="M14 19h5l-2.5 3z" fill="#e00000"/></svg>
<svg style="left:170px;top:441px;" width="24" height="24" viewBox="0 0 24 24"><path d="M4.5 0.5h12l5 5v16.5h-17z" fill="#fff" stroke="#7f9fd0"/><path d="M16.5 0.5v5h5" fill="#d8e4f6" stroke="#7f9fd0"/><path d="M7 4h7M7 7h12M7 9.5h12M7 12h12M7 14.5h12M7 17h12M7 19.5h12" stroke="#c0c6d0" stroke-width="1"/><path d="M2.5 3.5h10l4 4v14.5h-14z" fill="#fff" stroke="#7f9fd0"/><path d="M5 9h9M5 12h9M5 15h9M5 18h9" stroke="#c0c6d0"/><text x="2" y="22" font-size="12" fill="#6080c0" font-family="Liberation Sans">0</text></svg>
<div style="left:201px;top:442px;width:1px;height:22px;background:#a0a0a0"></div>
<div style="left:202px;top:442px;width:1px;height:22px;background:#ffffff"></div>
<svg style="left:207px;top:441px;" width="24" height="24" viewBox="0 0 24 24"><path d="M4.5 0.5h12l5 5v16.5h-17z" fill="#fff" stroke="#7f9fd0"/><path d="M16.5 0.5v5h5" fill="#d8e4f6" stroke="#7f9fd0"/><path d="M7 4h7M7 7h12M7 9.5h12M7 12h12M7 14.5h12M7 17h12M7 19.5h12" stroke="#c0c6d0" stroke-width="1"/><circle cx="8" cy="13" r="7" fill="#d4e8fa" stroke="#6a8cb8"/><text x="4.5" y="18" font-size="11" font-weight="bold" fill="#a00000" font-family="Liberation Sans">?</text><path d="M13 18l4 4" stroke="#f08030" stroke-width="3"/></svg>
<div style="left:234px;top:442px;width:1px;height:22px;background:#a0a0a0"></div>
<div style="left:235px;top:442px;width:1px;height:22px;background:#ffffff"></div>
<svg style="left:240px;top:441px;" width="24" height="24" viewBox="0 0 24 24"><path d="M4.5 0.5h12l5 5v16.5h-17z" fill="#fff" stroke="#7f9fd0"/><path d="M16.5 0.5v5h5" fill="#d8e4f6" stroke="#7f9fd0"/><path d="M7 4h7M7 7h12M7 9.5h12M7 12h12M7 14.5h12M7 17h12M7 19.5h12" stroke="#c0c6d0" stroke-width="1"/><path d="M2 12a5 2 0 0 1 10 0v9a5 2 0 0 1-10 0z" fill="#f0b020" stroke="#806000"/><text x="4" y="21" font-size="10" fill="#a00000" font-weight="bold" font-family="Liberation Sans">?</text></svg>
<div style="left:267px;top:442px;width:1px;height:22px;background:#a0a0a0"></div>
<div style="left:268px;top:442px;width:1px;height:22px;background:#ffffff"></div>
<svg style="left:272px;top:441px;" width="24" height="24" viewBox="0 0 24 24"><path d="M4.5 0.5h12l5 5v16.5h-17z" fill="#fff" stroke="#7f9fd0"/><path d="M16.5 0.5v5h5" fill="#d8e4f6" stroke="#7f9fd0"/><path d="M7 4h7M7 7h12M7 9.5h12M7 12h12M7 14.5h12M7 17h12M7 19.5h12" stroke="#c0c6d0" stroke-width="1"/><rect x="1.2" y="2.2" width="12.6" height="12.6" fill="#fff" stroke="#0808b0" stroke-width="2.4"/><text x="7.5" y="12.3" font-size="10.5" font-weight="bold" fill="#000060" text-anchor="middle" font-family="Liberation Sans">Л</text></svg>
<svg style="left:300px;top:441px;" width="24" height="24" viewBox="0 0 24 24"><path d="M4.5 0.5h12l5 5v16.5h-17z" fill="#fff" stroke="#7f9fd0"/><path d="M16.5 0.5v5h5" fill="#d8e4f6" stroke="#7f9fd0"/><path d="M7 4h7M7 7h12M7 9.5h12M7 12h12M7 14.5h12M7 17h12M7 19.5h12" stroke="#c0c6d0" stroke-width="1"/><rect x="1.2" y="2.2" width="12.6" height="12.6" fill="#fff" stroke="#0808b0" stroke-width="2.4"/><text x="7.5" y="12.3" font-size="10.5" font-weight="bold" fill="#000060" text-anchor="middle" font-family="Liberation Sans">Р</text></svg>
<svg style="left:328px;top:441px;" width="24" height="24" viewBox="0 0 24 24"><path d="M4.5 0.5h12l5 5v16.5h-17z" fill="#fff" stroke="#7f9fd0"/><path d="M16.5 0.5v5h5" fill="#d8e4f6" stroke="#7f9fd0"/><path d="M7 4h7M7 7h12M7 9.5h12M7 12h12M7 14.5h12M7 17h12M7 19.5h12" stroke="#c0c6d0" stroke-width="1"/><rect x="1.2" y="2.2" width="12.6" height="12.6" fill="#fff" stroke="#0808b0" stroke-width="2.4"/><text x="7.5" y="12.3" font-size="10.5" font-weight="bold" fill="#000060" text-anchor="middle" font-family="Liberation Sans">В</text><path d="M16 19.5h5l-2.5 3z" fill="#e00000"/></svg>
<div style="left:3px;top:469px;width:790px;height:700px;background:#fff;border:1px solid #a0a0a0;box-sizing:border-box"></div>
<div style="left:4px;top:470px;width:789px;height:45px;background:#f0f0f0"></div>
<div style="left:4px;top:514px;width:789px;height:1px;background:#a0a0a0"></div>
<div style="left:69px;top:472px;width:1px;height:42px;background:#a0a0a0"></div>
<div style="left:134px;top:472px;width:1px;height:42px;background:#a0a0a0"></div>
<div style="left:555px;top:472px;width:1px;height:42px;background:#a0a0a0"></div>
<div style="left:667px;top:472px;width:1px;height:42px;background:#a0a0a0"></div>
<div class="t" style="left:7px;top:474px;font-size:16px;color:#000;line-height:20px;-webkit-text-stroke:0.2px #fff;letter-spacing:0.25px;">Глав<br>а</div>
<div class="t" style="left:72px;top:474px;font-size:16px;color:#000;line-height:20px;-webkit-text-stroke:0.2px #fff;letter-spacing:0.25px;">Номер</div>
<div class="t" style="left:137px;top:474px;font-size:16px;color:#000;line-height:20px;-webkit-text-stroke:0.2px #fff;letter-spacing:0.25px;">Наименование</div>
<div class="t" style="left:558px;top:474px;font-size:16px;color:#000;line-height:20px;-webkit-text-stroke:0.2px #fff;letter-spacing:0.222px;">Вид сметы</div>
<div class="t" style="left:670px;top:474px;font-size:16px;color:#000;line-height:20px;-webkit-text-stroke:0.2px #fff;letter-spacing:0.25px;">Зона</div>
<svg style="left:54px;top:488px" width="9" height="8" viewBox="0 0 9 8"><path d="M4.5 0.5L8.5 7.5H0.5z" fill="#fff" stroke="#c8c8c8"/></svg>
<div style="left:4px;top:515px;width:65px;height:25px;background:#f0f0f0"></div>
<div class="t" style="left:7px;top:519px;font-size:16px;color:#000;width:60px;overflow:hidden;line-height:20px;-webkit-text-stroke:0.2px #fff;letter-spacing:-0.15px;">1</div>
<div style="left:70px;top:515px;width:64px;height:25px;background:#fff"></div>
<div class="t" style="left:73px;top:519px;font-size:16px;color:#000;width:59px;overflow:hidden;line-height:20px;-webkit-text-stroke:0.2px #fff;letter-spacing:-0.15px;">01</div>
<div style="left:135px;top:515px;width:420px;height:25px;background:#fff"></div>
<div class="t" style="left:138px;top:519px;font-size:16px;color:#000;width:415px;overflow:hidden;line-height:20px;-webkit-text-stroke:0.2px #fff;letter-spacing:0.238px;">Восстановление трассы</div>
<div style="left:556px;top:515px;width:111px;height:25px;background:#fff"></div>
<div class="t" style="left:559px;top:519px;font-size:16px;color:#000;width:106px;overflow:hidden;line-height:20px;-webkit-text-stroke:0.2px #fff;letter-spacing:0.25px;">Прочие</div>
<div style="left:668px;top:515px;width:125px;height:25px;background:#fff"></div>
<div style="left:4px;top:539px;width:789px;height:1px;background:#a0a0a0"></div>
<div style="left:4px;top:540px;width:65px;height:25px;background:#fff"></div>
<div class="t" style="left:7px;top:544px;font-size:16px;color:#000;width:60px;overflow:hidden;line-height:20px;-webkit-text-stroke:0.2px #fff;letter-spacing:-0.15px;">1</div>
<div style="left:70px;top:540px;width:64px;height:25px;background:#fff"></div>
<div class="t" style="left:73px;top:544px;font-size:16px;color:#000;width:59px;overflow:hidden;line-height:20px;-webkit-text-stroke:0.2px #fff;letter-spacing:-0.15px;">02</div>
<div style="left:135px;top:540px;width:420px;height:25px;background:#fff"></div>
<div class="t" style="left:138px;top:544px;font-size:16px;color:#000;width:415px;overflow:hidden;line-height:20px;-webkit-text-stroke:0.2px #fff;letter-spacing:0.231px;">Разборку существующих труб</div>
<div style="left:556px;top:540px;width:111px;height:25px;background:#fff"></div>
<div class="t" style="left:559px;top:544px;font-size:16px;color:#000;width:106px;overflow:hidden;line-height:20px;-webkit-text-stroke:0.2px #fff;letter-spacing:0.25px;">Строительные</div>
<div style="left:668px;top:540px;width:125px;height:25px;background:#fff"></div>
<div style="left:4px;top:564px;width:789px;height:1px;background:#a0a0a0"></div>
<div style="left:4px;top:565px;width:65px;height:25px;background:#fff"></div>
<div class="t" style="left:7px;top:569px;font-size:16px;color:#000;width:60px;overflow:hidden;line-height:20px;-webkit-text-stroke:0.2px #fff;letter-spacing:-0.15px;">1</div>
<div style="left:70px;top:565px;width:64px;height:25px;background:#fff"></div>
<div class="t" style="left:73px;top:569px;font-size:16px;color:#000;width:59px;overflow:hidden;line-height:20px;-webkit-text-stroke:0.2px #fff;letter-spacing:-0.15px;">03</div>
<div style="left:135px;top:565px;width:420px;height:25px;background:#fff"></div>
<div class="t" style="left:138px;top:569px;font-size:16px;color:#000;width:415px;overflow:hidden;line-height:20px;-webkit-text-stroke:0.2px #fff;letter-spacing:0.232px;">Разборка существующих автобусных остановок</div>
<div style="left:556px;top:565px;width:111px;height:25px;background:#fff"></div>
<div class="t" style="left:559px;top:569px;font-size:16px;color:#000;width:106px;overflow:hidden;line-height:20px;-webkit-text-stroke:0.2px #fff;letter-spacing:0.25px;">Строительные</div>
<div style="left:668px;top:565px;width:125px;height:25px;background:#fff"></div>
<div style="left:4px;top:589px;width:789px;height:1px;background:#a0a0a0"></div>
<div style="left:4px;top:590px;width:65px;height:25px;background:#fff"></div>
<div class="t" style="left:7px;top:594px;font-size:16px;color:#000;width:60px;overflow:hidden;line-height:20px;-webkit-text-stroke:0.2px #fff;letter-spacing:-0.15px;">1</div>
<div style="left:70px;top:590px;width:64px;height:25px;background:#fff"></div>
<div class="t" style="left:73px;top:594px;font-size:16px;color:#000;width:59px;overflow:hidden;line-height:20px;-webkit-text-stroke:0.2px #fff;letter-spacing:-0.15px;">04</div>
<div style="left:135px;top:590px;width:420px;height:25px;background:#fff"></div>
<div class="t" style="left:138px;top:594px;font-size:16px;color:#000;width:415px;overflow:hidden;line-height:20px;-webkit-text-stroke:0.2px #fff;letter-spacing:0.224px;">Устройство и разборка объездов уширения для строительства</div>
<div style="left:556px;top:590px;width:111px;height:25px;background:#fff"></div>
<div style="left:668px;top:590px;width:125px;height:25px;background:#fff"></div>
<div style="left:4px;top:614px;width:789px;height:1px;background:#a0a0a0"></div>
<div style="left:4px;top:615px;width:65px;height:25px;background:#fff"></div>
<div class="t" style="left:7px;top:619px;font-size:16px;color:#000;width:60px;overflow:hidden;line-height:20px;-webkit-text-stroke:0.2px #fff;letter-spacing:-0.15px;">1</div>
<div style="left:70px;top:615px;width:64px;height:25px;background:#fff"></div>
<div class="t" style="left:73px;top:619px;font-size:16px;color:#000;width:59px;overflow:hidden;line-height:20px;-webkit-text-stroke:0.2px #fff;letter-spacing:-0.15px;">05</div>
<div style="left:135px;top:615px;width:420px;height:25px;background:#fff"></div>
<div class="t" style="left:138px;top:619px;font-size:16px;color:#000;width:415px;overflow:hidden;line-height:20px;-webkit-text-stroke:0.2px #fff;letter-spacing:0.221px;">Устройство и разборка объездов-уширения для строительства</div>
<div style="left:556px;top:615px;width:111px;height:25px;background:#fff"></div>
<div style="left:668px;top:615px;width:125px;height:25px;background:#fff"></div>
<div style="left:4px;top:639px;width:789px;height:1px;background:#a0a0a0"></div>
<div style="left:4px;top:640px;width:65px;height:25px;background:#fff"></div>
<div class="t" style="left:7px;top:644px;font-size:16px;color:#000;width:60px;overflow:hidden;line-height:20px;-webkit-text-stroke:0.2px #fff;letter-spacing:-0.15px;">1</div>
<div style="left:70px;top:640px;width:64px;height:25px;background:#fff"></div>
<div class="t" style="left:73px;top:644px;font-size:16px;color:#000;width:59px;overflow:hidden;line-height:20px;-webkit-text-stroke:0.2px #fff;letter-spacing:-0.15px;">06</div>
<div style="left:135px;top:640px;width:420px;height:25px;background:#fff"></div>
<div class="t" style="left:138px;top:644px;font-size:16px;color:#000;width:415px;overflow:hidden;line-height:20px;-webkit-text-stroke:0.2px #fff;letter-spacing:0.231px;">Разборка существующих ТСОДД</div>
<div style="left:556px;top:640px;width:111px;height:25px;background:#fff"></div>
<div style="left:668px;top:640px;width:125px;height:25px;background:#fff"></div>
<div style="left:4px;top:664px;width:789px;height:1px;background:#a0a0a0"></div>
<div style="left:4px;top:665px;width:65px;height:25px;background:#fff"></div>
<div class="t" style="left:7px;top:669px;font-size:16px;color:#000;width:60px;overflow:hidden;line-height:20px;-webkit-text-stroke:0.2px #fff;letter-spacing:-0.15px;">1</div>
<div style="left:70px;top:665px;width:64px;height:25px;background:#fff"></div>
<div class="t" style="left:73px;top:669px;font-size:16px;color:#000;width:59px;overflow:hidden;line-height:20px;-webkit-text-stroke:0.2px #fff;letter-spacing:-0.15px;">07</div>
<div style="left:135px;top:665px;width:420px;height:25px;background:#fff"></div>
<div class="t" style="left:138px;top:669px;font-size:16px;color:#000;width:415px;overflow:hidden;line-height:20px;-webkit-text-stroke:0.2px #fff;letter-spacing:0.25px;">Таксация</div>
<div style="left:556px;top:665px;width:111px;height:25px;background:#fff"></div>
<div style="left:668px;top:665px;width:125px;height:25px;background:#fff"></div>
<div style="left:4px;top:689px;width:789px;height:1px;background:#a0a0a0"></div>
<div style="left:4px;top:690px;width:65px;height:25px;background:#fff"></div>
<div class="t" style="left:7px;top:694px;font-size:16px;color:#000;width:60px;overflow:hidden;line-height:20px;-webkit-text-stroke:0.2px #fff;letter-spacing:-0.15px;">1</div>
<div style="left:70px;top:690px;width:64px;height:25px;background:#fff"></div>
<div class="t" style="left:73px;top:694px;font-size:16px;color:#000;width:59px;overflow:hidden;line-height:20px;-webkit-text-stroke:0.2px #fff;letter-spacing:-0.15px;">08</div>
<div style="left:135px;top:690px;width:420px;height:25px;background:#fff"></div>
<div class="t" style="left:138px;top:694px;font-size:16px;color:#000;width:415px;overflow:hidden;line-height:20px;-webkit-text-stroke:0.2px #fff;letter-spacing:0.239px;">Компенсационные посадки</div>
<div style="left:556px;top:690px;width:111px;height:25px;background:#fff"></div>
<div style="left:668px;top:690px;width:125px;height:25px;background:#fff"></div>
<div style="left:4px;top:714px;width:789px;height:1px;background:#a0a0a0"></div>
<div style="left:4px;top:715px;width:65px;height:25px;background:#fff"></div>
<div class="t" style="left:7px;top:719px;font-size:16px;color:#000;width:60px;overflow:hidden;line-height:20px;-webkit-text-stroke:0.2px #fff;letter-spacing:-0.15px;">1</div>
<div style="left:70px;top:715px;width:64px;height:25px;background:#fff"></div>
<div class="t" style="left:73px;top:719px;font-size:16px;color:#000;width:59px;overflow:hidden;line-height:20px;-webkit-text-stroke:0.2px #fff;letter-spacing:-0.15px;">09</div>
<div style="left:135px;top:715px;width:420px;height:25px;background:#fff"></div>
<div class="t" style="left:138px;top:719px;font-size:16px;color:#000;width:415px;overflow:hidden;line-height:20px;-webkit-text-stroke:0.2px #fff;letter-spacing:0.227px;">Поднятие крон деревьев</div>
<div style="left:556px;top:715px;width:111px;height:25px;background:#fff"></div>
<div style="left:668px;top:715px;width:125px;height:25px;background:#fff"></div>
<div style="left:4px;top:739px;width:789px;height:1px;background:#a0a0a0"></div>
<div style="left:4px;top:740px;width:65px;height:25px;background:#fff"></div>
<div class="t" style="left:7px;top:744px;font-size:16px;color:#000;width:60px;overflow:hidden;line-height:20px;-webkit-text-stroke:0.2px #fff;letter-spacing:-0.15px;">1</div>
<div style="left:70px;top:740px;width:64px;height:25px;background:#fff"></div>
<div class="t" style="left:73px;top:744px;font-size:16px;color:#000;width:59px;overflow:hidden;line-height:20px;-webkit-text-stroke:0.2px #fff;letter-spacing:-0.15px;">10</div>
<div style="left:135px;top:740px;width:420px;height:25px;background:#fff"></div>
<div class="t" style="left:138px;top:744px;font-size:16px;color:#000;width:415px;overflow:hidden;line-height:20px;-webkit-text-stroke:0.2px #fff;letter-spacing:0.234px;">Разборка существующего цементобетонного покрытия</div>
<div style="left:556px;top:740px;width:111px;height:25px;background:#fff"></div>
<div style="left:668px;top:740px;width:125px;height:25px;background:#fff"></div>
<div style="left:4px;top:764px;width:789px;height:1px;background:#a0a0a0"></div>
<div style="left:4px;top:765px;width:65px;height:25px;background:#fff"></div>
<div class="t" style="left:7px;top:769px;font-size:16px;color:#000;width:60px;overflow:hidden;line-height:20px;-webkit-text-stroke:0.2px #fff;letter-spacing:-0.15px;">1</div>
<div style="left:70px;top:765px;width:64px;height:25px;background:#fff"></div>
<div class="t" style="left:73px;top:769px;font-size:16px;color:#000;width:59px;overflow:hidden;line-height:20px;-webkit-text-stroke:0.2px #fff;letter-spacing:-0.15px;">11</div>
<div style="left:135px;top:765px;width:420px;height:25px;background:#fff"></div>
<div class="t" style="left:138px;top:769px;font-size:16px;color:#000;width:415px;overflow:hidden;line-height:20px;-webkit-text-stroke:0.2px #fff;letter-spacing:0.219px;">Земляные работы по устройству и разборке объездов</div>
<div style="left:556px;top:765px;width:111px;height:25px;background:#fff"></div>
<div style="left:668px;top:765px;width:125px;height:25px;background:#fff"></div>
<div style="left:4px;top:789px;width:789px;height:1px;background:#a0a0a0"></div>
<div style="left:4px;top:790px;width:65px;height:25px;background:#fff"></div>
<div class="t" style="left:7px;top:794px;font-size:16px;color:#000;width:60px;overflow:hidden;line-height:20px;-webkit-text-stroke:0.2px #fff;letter-spacing:-0.15px;">1</div>
<div style="left:70px;top:790px;width:64px;height:25px;background:#fff"></div>
<div class="t" style="left:73px;top:794px;font-size:16px;color:#000;width:59px;overflow:hidden;line-height:20px;-webkit-text-stroke:0.2px #fff;letter-spacing:-0.15px;">12</div>
<div style="left:135px;top:790px;width:420px;height:25px;background:#fff"></div>
<div class="t" style="left:138px;top:794px;font-size:16px;color:#000;width:415px;overflow:hidden;line-height:20px;-webkit-text-stroke:0.2px #fff;letter-spacing:0.219px;">Земляные работы по устройству и разборке объездов</div>
<div style="left:556px;top:790px;width:111px;height:25px;background:#fff"></div>
<div style="left:668px;top:790px;width:125px;height:25px;background:#fff"></div>
<div style="left:4px;top:814px;width:789px;height:1px;background:#a0a0a0"></div>
<div style="left:4px;top:815px;width:65px;height:25px;background:#fff"></div>
<div class="t" style="left:7px;top:819px;font-size:16px;color:#000;width:60px;overflow:hidden;line-height:20px;-webkit-text-stroke:0.2px #fff;letter-spacing:-0.15px;">1</div>
<div style="left:70px;top:815px;width:64px;height:25px;background:#fff"></div>
<div class="t" style="left:73px;top:819px;font-size:16px;color:#000;width:59px;overflow:hidden;line-height:20px;-webkit-text-stroke:0.2px #fff;letter-spacing:-0.15px;">13</div>
<div style="left:135px;top:815px;width:420px;height:25px;background:#fff"></div>
<div class="t" style="left:138px;top:819px;font-size:16px;color:#000;width:415px;overflow:hidden;line-height:20px;-webkit-text-stroke:0.2px #fff;letter-spacing:0.224px;">Устройство площадки для нужд строительства справа</div>
<div style="left:556px;top:815px;width:111px;height:25px;background:#fff"></div>
<div style="left:668px;top:815px;width:125px;height:25px;background:#fff"></div>
<div style="left:4px;top:839px;width:789px;height:1px;background:#a0a0a0"></div>
<div style="left:4px;top:840px;width:65px;height:25px;background:#fff"></div>
<div class="t" style="left:7px;top:844px;font-size:16px;color:#000;width:60px;overflow:hidden;line-height:20px;-webkit-text-stroke:0.2px #fff;letter-spacing:-0.15px;">1</div>
<div style="left:70px;top:840px;width:64px;height:25px;background:#fff"></div>
<div class="t" style="left:73px;top:844px;font-size:16px;color:#000;width:59px;overflow:hidden;line-height:20px;-webkit-text-stroke:0.2px #fff;letter-spacing:-0.15px;">14</div>
<div style="left:135px;top:840px;width:420px;height:25px;background:#fff"></div>
<div class="t" style="left:138px;top:844px;font-size:16px;color:#000;width:415px;overflow:hidden;line-height:20px;-webkit-text-stroke:0.2px #fff;letter-spacing:0.236px;">Фрезерование существующего покрытия</div>
<div style="left:556px;top:840px;width:111px;height:25px;background:#fff"></div>
<div style="left:668px;top:840px;width:125px;height:25px;background:#fff"></div>
<div style="left:4px;top:864px;width:789px;height:1px;background:#a0a0a0"></div>
<div style="left:4px;top:865px;width:65px;height:25px;background:#fff"></div>
<div class="t" style="left:7px;top:869px;font-size:16px;color:#000;width:60px;overflow:hidden;line-height:20px;-webkit-text-stroke:0.2px #fff;letter-spacing:-0.15px;">1</div>
<div style="left:70px;top:865px;width:64px;height:25px;background:#fff"></div>
<div class="t" style="left:73px;top:869px;font-size:16px;color:#000;width:59px;overflow:hidden;line-height:20px;-webkit-text-stroke:0.2px #fff;letter-spacing:-0.15px;">15</div>
<div style="left:135px;top:865px;width:420px;height:25px;background:#fff"></div>
<div class="t" style="left:138px;top:869px;font-size:16px;color:#000;width:415px;overflow:hidden;line-height:20px;-webkit-text-stroke:0.2px #fff;letter-spacing:0.225px;">Сбор исходных данных</div>
<div style="left:556px;top:865px;width:111px;height:25px;background:#fff"></div>
<div style="left:668px;top:865px;width:125px;height:25px;background:#fff"></div>
<div style="left:4px;top:889px;width:789px;height:1px;background:#a0a0a0"></div>
<div style="left:4px;top:890px;width:65px;height:25px;background:#fff"></div>
<div class="t" style="left:7px;top:894px;font-size:16px;color:#000;width:60px;overflow:hidden;line-height:20px;-webkit-text-stroke:0.2px #fff;letter-spacing:-0.15px;">2</div>
<div style="left:70px;top:890px;width:64px;height:25px;background:#fff"></div>
<div class="t" style="left:73px;top:894px;font-size:16px;color:#000;width:59px;overflow:hidden;line-height:20px;-webkit-text-stroke:0.2px #fff;letter-spacing:-0.15px;">01</div>
<div style="left:135px;top:890px;width:420px;height:25px;background:#fff"></div>
<div class="t" style="left:138px;top:894px;font-size:16px;color:#000;width:415px;overflow:hidden;line-height:20px;-webkit-text-stroke:0.2px #fff;letter-spacing:0.191px;">Устройство дорожной одежды (тип1)</div>
<div style="left:556px;top:890px;width:111px;height:25px;background:#fff"></div>
<div style="left:668px;top:890px;width:125px;height:25px;background:#fff"></div>
<div style="left:4px;top:914px;width:789px;height:1px;background:#a0a0a0"></div>
<div style="left:4px;top:915px;width:65px;height:25px;background:#fff"></div>
<div class="t" style="left:7px;top:919px;font-size:16px;color:#000;width:60px;overflow:hidden;line-height:20px;-webkit-text-stroke:0.2px #fff;letter-spacing:-0.15px;">2</div>
<div style="left:70px;top:915px;width:64px;height:25px;background:#fff"></div>
<div class="t" style="left:73px;top:919px;font-size:16px;color:#000;width:59px;overflow:hidden;line-height:20px;-webkit-text-stroke:0.2px #fff;letter-spacing:-0.15px;">02</div>
<div style="left:135px;top:915px;width:420px;height:25px;background:#fff"></div>
<div class="t" style="left:138px;top:919px;font-size:16px;color:#000;width:415px;overflow:hidden;line-height:20px;-webkit-text-stroke:0.2px #fff;letter-spacing:0.191px;">Устройство дорожной одежды (тип2)</div>
<div style="left:556px;top:915px;width:111px;height:25px;background:#fff"></div>
<div style="left:668px;top:915px;width:125px;height:25px;background:#fff"></div>
<div style="left:4px;top:939px;width:789px;height:1px;background:#a0a0a0"></div>
<div style="left:4px;top:940px;width:65px;height:25px;background:#fff"></div>
<div class="t" style="left:7px;top:944px;font-size:16px;color:#000;width:60px;overflow:hidden;line-height:20px;-webkit-text-stroke:0.2px #fff;letter-spacing:-0.15px;">2</div>
<div style="left:70px;top:940px;width:64px;height:25px;background:#fff"></div>
<div class="t" style="left:73px;top:944px;font-size:16px;color:#000;width:59px;overflow:hidden;line-height:20px;-webkit-text-stroke:0.2px #fff;letter-spacing:-0.15px;">03</div>
<div style="left:135px;top:940px;width:420px;height:25px;background:#fff"></div>
<div class="t" style="left:138px;top:944px;font-size:16px;color:#000;width:415px;overflow:hidden;line-height:20px;-webkit-text-stroke:0.2px #fff;letter-spacing:0.191px;">Устройство дорожной одежды (тип3)</div>
<div style="left:556px;top:940px;width:111px;height:25px;background:#fff"></div>
<div style="left:668px;top:940px;width:125px;height:25px;background:#fff"></div>
<div style="left:4px;top:964px;width:789px;height:1px;background:#a0a0a0"></div>
<div style="left:4px;top:965px;width:65px;height:25px;background:#fff"></div>
<div class="t" style="left:7px;top:969px;font-size:16px;color:#000;width:60px;overflow:hidden;line-height:20px;-webkit-text-stroke:0.2px #fff;letter-spacing:-0.15px;">2</div>
<div style="left:70px;top:965px;width:64px;height:25px;background:#fff"></div>
<div class="t" style="left:73px;top:969px;font-size:16px;color:#000;width:59px;overflow:hidden;line-height:20px;-webkit-text-stroke:0.2px #fff;letter-spacing:-0.15px;">04</div>
<div style="left:135px;top:965px;width:420px;height:25px;background:#fff"></div>
<div class="t" style="left:138px;top:969px;font-size:16px;color:#000;width:415px;overflow:hidden;line-height:20px;-webkit-text-stroke:0.2px #fff;letter-spacing:0.234px;">Ремонт существующего цементобетонного покрытия</div>
<div style="left:556px;top:965px;width:111px;height:25px;background:#fff"></div>
<div style="left:668px;top:965px;width:125px;height:25px;background:#fff"></div>
<div style="left:4px;top:989px;width:789px;height:1px;background:#a0a0a0"></div>
<div style="left:4px;top:990px;width:65px;height:25px;background:#fff"></div>
<div class="t" style="left:7px;top:994px;font-size:16px;color:#000;width:60px;overflow:hidden;line-height:20px;-webkit-text-stroke:0.2px #fff;letter-spacing:-0.15px;">2</div>
<div style="left:70px;top:990px;width:64px;height:25px;background:#fff"></div>
<div class="t" style="left:73px;top:994px;font-size:16px;color:#000;width:59px;overflow:hidden;line-height:20px;-webkit-text-stroke:0.2px #fff;letter-spacing:-0.15px;">05</div>
<div style="left:135px;top:990px;width:420px;height:25px;background:#fff"></div>
<div class="t" style="left:138px;top:994px;font-size:16px;color:#000;width:415px;overflow:hidden;line-height:20px;-webkit-text-stroke:0.2px #fff;letter-spacing:0.095px;">Устройство ж.б. трубы 2 отв. 0,8 м на ПК 600+29</div>
<div style="left:556px;top:990px;width:111px;height:25px;background:#fff"></div>
<div style="left:668px;top:990px;width:125px;height:25px;background:#fff"></div>
<div style="left:4px;top:1014px;width:789px;height:1px;background:#a0a0a0"></div>
<div style="left:4px;top:1015px;width:65px;height:25px;background:#fff"></div>
<div class="t" style="left:7px;top:1019px;font-size:16px;color:#000;width:60px;overflow:hidden;line-height:20px;-webkit-text-stroke:0.2px #fff;letter-spacing:-0.15px;">2</div>
<div style="left:70px;top:1015px;width:64px;height:25px;background:#fff"></div>
<div class="t" style="left:73px;top:1019px;font-size:16px;color:#000;width:59px;overflow:hidden;line-height:20px;-webkit-text-stroke:0.2px #fff;letter-spacing:-0.15px;">06</div>
<div style="left:135px;top:1015px;width:420px;height:25px;background:#fff"></div>
<div class="t" style="left:138px;top:1019px;font-size:16px;color:#000;width:415px;overflow:hidden;line-height:20px;-webkit-text-stroke:0.2px #fff;letter-spacing:0.236px;">Устройство дренажа</div>
<div style="left:556px;top:1015px;width:111px;height:25px;background:#fff"></div>
<div style="left:668px;top:1015px;width:125px;height:25px;background:#fff"></div>
<div style="left:4px;top:1039px;width:789px;height:1px;background:#a0a0a0"></div>
<div style="left:4px;top:1040px;width:65px;height:25px;background:#fff"></div>
<div class="t" style="left:7px;top:1044px;font-size:16px;color:#000;width:60px;overflow:hidden;line-height:20px;-webkit-text-stroke:0.2px #fff;letter-spacing:-0.15px;">2</div>
<div style="left:70px;top:1040px;width:64px;height:25px;background:#fff"></div>
<div class="t" style="left:73px;top:1044px;font-size:16px;color:#000;width:59px;overflow:hidden;line-height:20px;-webkit-text-stroke:0.2px #fff;letter-spacing:-0.15px;">07</div>
<div style="left:135px;top:1040px;width:420px;height:25px;background:#fff"></div>
<div class="t" style="left:138px;top:1044px;font-size:16px;color:#000;width:415px;overflow:hidden;line-height:20px;-webkit-text-stroke:0.2px #fff;letter-spacing:0.234px;">Устройство автобусных остановок</div>
<div style="left:556px;top:1040px;width:111px;height:25px;background:#fff"></div>
<div style="left:668px;top:1040px;width:125px;height:25px;background:#fff"></div>
<div style="left:4px;top:1064px;width:789px;height:1px;background:#a0a0a0"></div>
<div style="left:4px;top:1065px;width:65px;height:25px;background:#fff"></div>
<div class="t" style="left:7px;top:1069px;font-size:16px;color:#000;width:60px;overflow:hidden;line-height:20px;-webkit-text-stroke:0.2px #fff;letter-spacing:-0.15px;">2</div>
<div style="left:70px;top:1065px;width:64px;height:25px;background:#fff"></div>
<div class="t" style="left:73px;top:1069px;font-size:16px;color:#000;width:59px;overflow:hidden;line-height:20px;-webkit-text-stroke:0.2px #fff;letter-spacing:-0.15px;">08</div>
<div style="left:135px;top:1065px;width:420px;height:25px;background:#fff"></div>
<div class="t" style="left:138px;top:1069px;font-size:16px;color:#000;width:415px;overflow:hidden;line-height:20px;-webkit-text-stroke:0.2px #fff;letter-spacing:0.232px;">Устройство дорожной разметки</div>
<div style="left:556px;top:1065px;width:111px;height:25px;background:#fff"></div>
<div style="left:668px;top:1065px;width:125px;height:25px;background:#fff"></div>
<div style="left:4px;top:1089px;width:789px;height:1px;background:#a0a0a0"></div>
<div style="left:4px;top:1090px;width:65px;height:25px;background:#fff"></div>
<div class="t" style="left:7px;top:1094px;font-size:16px;color:#000;width:60px;overflow:hidden;line-height:20px;-webkit-text-stroke:0.2px #fff;letter-spacing:-0.15px;">2</div>
<div style="left:70px;top:1090px;width:64px;height:25px;background:#fff"></div>
<div class="t" style="left:73px;top:1094px;font-size:16px;color:#000;width:59px;overflow:hidden;line-height:20px;-webkit-text-stroke:0.2px #fff;letter-spacing:-0.15px;">09</div>
<div style="left:135px;top:1090px;width:420px;height:25px;background:#fff"></div>
<div class="t" style="left:138px;top:1094px;font-size:16px;color:#000;width:415px;overflow:hidden;line-height:20px;-webkit-text-stroke:0.2px #fff;letter-spacing:0.233px;">Установка сигнальных столбиков</div>
<div style="left:556px;top:1090px;width:111px;height:25px;background:#fff"></div>
<div style="left:668px;top:1090px;width:125px;height:25px;background:#fff"></div>
<div style="left:4px;top:1114px;width:789px;height:1px;background:#a0a0a0"></div>
<div style="left:4px;top:1115px;width:65px;height:25px;background:#fff"></div>
<div class="t" style="left:7px;top:1119px;font-size:16px;color:#000;width:60px;overflow:hidden;line-height:20px;-webkit-text-stroke:0.2px #fff;letter-spacing:-0.15px;">2</div>
<div style="left:70px;top:1115px;width:64px;height:25px;background:#fff"></div>
<div class="t" style="left:73px;top:1119px;font-size:16px;color:#000;width:59px;overflow:hidden;line-height:20px;-webkit-text-stroke:0.2px #fff;letter-spacing:-0.15px;">10</div>
<div style="left:135px;top:1115px;width:420px;height:25px;background:#fff"></div>
<div class="t" style="left:138px;top:1119px;font-size:16px;color:#000;width:415px;overflow:hidden;line-height:20px;-webkit-text-stroke:0.2px #fff;letter-spacing:0.231px;">Устройство дорожных знаков</div>
<div style="left:556px;top:1115px;width:111px;height:25px;background:#fff"></div>
<div style="left:668px;top:1115px;width:125px;height:25px;background:#fff"></div>
<div style="left:4px;top:1139px;width:789px;height:1px;background:#a0a0a0"></div>
<div style="left:4px;top:1140px;width:65px;height:25px;background:#fff"></div>
<div class="t" style="left:7px;top:1144px;font-size:16px;color:#000;width:60px;overflow:hidden;line-height:20px;-webkit-text-stroke:0.2px #fff;letter-spacing:-0.15px;">2</div>
<div style="left:70px;top:1140px;width:64px;height:25px;background:#fff"></div>
<div class="t" style="left:73px;top:1144px;font-size:16px;color:#000;width:59px;overflow:hidden;line-height:20px;-webkit-text-stroke:0.2px #fff;letter-spacing:-0.15px;">11</div>
<div style="left:135px;top:1140px;width:420px;height:25px;background:#fff"></div>
<div class="t" style="left:138px;top:1144px;font-size:16px;color:#000;width:415px;overflow:hidden;line-height:20px;-webkit-text-stroke:0.2px #fff;letter-spacing:0.238px;">Устройство примыканий</div>
<div style="left:556px;top:1140px;width:111px;height:25px;background:#fff"></div>
<div style="left:668px;top:1140px;width:125px;height:25px;background:#fff"></div>
<div style="left:4px;top:1164px;width:789px;height:1px;background:#a0a0a0"></div>
<div style="left:69px;top:515px;width:1px;height:650px;background:#a0a0a0"></div>
<div style="left:134px;top:515px;width:1px;height:650px;background:#a0a0a0"></div>
<div style="left:555px;top:515px;width:1px;height:650px;background:#a0a0a0"></div>
<div style="left:667px;top:515px;width:1px;height:650px;background:#a0a0a0"></div>
<div style="left:4px;top:515px;width:789px;height:25px;border:2px solid #111;box-sizing:border-box"></div>
<div style="left:1px;top:1158px;width:540px;height:26px;background:#f0f0f0"></div>
<div style="left:2px;top:1163px;width:120px;height:18px;border:1px solid #a0a0a0;box-sizing:border-box;box-shadow:inset 1px 1px 0 #fff;overflow:hidden"></div>
<div class="t" style="left:5px;top:1164px;font-size:12px;color:#000;width:116px;overflow:hidden;line-height:16px;font-weight:bold;">F1 - О программе</div>
<div style="left:125px;top:1163px;width:91px;height:18px;border:1px solid #a0a0a0;box-sizing:border-box;box-shadow:inset 1px 1px 0 #fff;overflow:hidden"></div>
<div class="t" style="left:128px;top:1164px;font-size:12px;color:#000;width:87px;overflow:hidden;line-height:16px;font-weight:bold;">F2 - Объекты</div>
<div style="left:219px;top:1163px;width:106px;height:18px;border:1px solid #a0a0a0;box-sizing:border-box;box-shadow:inset 1px 1px 0 #fff;overflow:hidden"></div>
<div class="t" style="left:222px;top:1164px;font-size:12px;color:#000;width:102px;overflow:hidden;line-height:16px;font-weight:bold;">F3 - Сооружения</div>
<div style="left:328px;top:1163px;width:81px;height:18px;border:1px solid #a0a0a0;box-sizing:border-box;box-shadow:inset 1px 1px 0 #fff;overflow:hidden"></div>
<div class="t" style="left:331px;top:1164px;font-size:12px;color:#000;width:77px;overflow:hidden;line-height:16px;font-weight:bold;">F4 - Сметы</div>
<div style="left:411px;top:1163px;width:72px;height:18px;border:1px solid #a0a0a0;box-sizing:border-box;box-shadow:inset 1px 1px 0 #fff;overflow:hidden"></div>
<div class="t" style="left:414px;top:1164px;font-size:12px;color:#000;width:68px;overflow:hidden;line-height:16px;font-weight:bold;">F5 - Акты</div>
<div style="left:485px;top:1163px;width:75px;height:18px;border:1px solid #a0a0a0;box-sizing:border-box;box-shadow:inset 1px 1px 0 #fff;overflow:hidden"></div>
<div class="t" style="left:488px;top:1164px;font-size:12px;color:#000;width:71px;overflow:hidden;line-height:16px;font-weight:bold;">Enter - Смета</div>
<div style="left:796px;top:80px;width:8px;height:1100px;background:#f0f0f0;border-left:1px solid #a0a0a0;border-right:1px solid #a0a0a0;box-sizing:border-box;box-shadow:inset 1px 0 0 #fff"></div>
<div style="left:805px;top:87px;width:1383px;height:1100px;border:1px solid #a0a0a0;border-right:none;border-bottom:none;box-sizing:border-box;box-shadow:inset 1px 1px 0 #fff"></div>
<div style="left:810px;top:80px;width:105px;height:16px;background:#f0f0f0"></div>
<div class="t" style="left:813px;top:79px;font-size:14px;color:#000;line-height:18px;font-weight:bold;">Сооружения :</div>
<div style="left:807px;top:98px;width:1378px;height:32px;border:1px solid #a0a0a0;box-sizing:border-box;box-shadow:inset 1px 1px 0 #fff;background:#f0f0f0"></div>
<svg style="left:810px;top:103px;" width="24" height="24" viewBox="0 0 24 24"><path d="M4.5 0.5h12l5 5v16.5h-17z" fill="#fff" stroke="#7f9fd0"/><path d="M16.5 0.5v5h5" fill="#d8e4f6" stroke="#7f9fd0"/><path d="M7 4h7M7 7h12M7 9.5h12M7 12h12M7 14.5h12M7 17h12M7 19.5h12" stroke="#c0c6d0" stroke-width="1"/><path d="M4 9h4v4h4v4h-4v4h-4v-4h-4v-4h4z" fill="#58d830" stroke="#185800" stroke-width="1"/></svg>
<svg style="left:837px;top:103px;" width="24" height="24" viewBox="0 0 24 24"><path d="M4.5 0.5h12l5 5v16.5h-17z" fill="#fff" stroke="#7f9fd0"/><path d="M16.5 0.5v5h5" fill="#d8e4f6" stroke="#7f9fd0"/><path d="M7 4h7M7 7h12M7 9.5h12M7 12h12M7 14.5h12M7 17h12M7 19.5h12" stroke="#c0c6d0" stroke-width="1"/><path d="M1 12l3-2 3 3 3-3 3 2-3.5 4 3.5 4-3 2-3-3-3 3-3-2 3.5-4z" fill="#f0541c" stroke="#701800" stroke-width=".8"/></svg>
<svg style="left:865px;top:103px;" width="24" height="24" viewBox="0 0 24 24"><path d="M4.5 0.5h12l5 5v16.5h-17z" fill="#fff" stroke="#7f9fd0"/><path d="M16.5 0.5v5h5" fill="#d8e4f6" stroke="#7f9fd0"/><path d="M7 4h7M7 7h12M7 9.5h12M7 12h12M7 14.5h12M7 17h12M7 19.5h12" stroke="#c0c6d0" stroke-width="1"/><path d="M1.5 22.5l1.5-5 10-10 3.5 3.5-10 10z" fill="#f4a830" stroke="#804000" stroke-width=".8"/><path d="M13 7.5l2-2 3.5 3.5-2 2z" fill="#e03030"/></svg>
<svg style="left:892px;top:103px;" width="24" height="24" viewBox="0 0 24 24"><path d="M4.5 0.5h12l5 5v16.5h-17z" fill="#fff" stroke="#7f9fd0"/><path d="M16.5 0.5v5h5" fill="#d8e4f6" stroke="#7f9fd0"/><path d="M7 4h7M7 7h12M7 9.5h12M7 12h12M7 14.5h12M7 17h12M7 19.5h12" stroke="#c0c6d0" stroke-width="1"/><circle cx="8" cy="15" r="7" fill="#e88a58"/><path d="M8 15v-7a7 7 0 0 1 7 7z" fill="#ecd098"/><path d="M8 15h7a7 7 0 0 1-4 6.4z" fill="#84b4a0"/><path d="M8 15l3 6.4a7 7 0 0 1-6 0z" fill="#5894d4"/></svg>
<svg style="left:920px;top:103px;" width="24" height="24" viewBox="0 0 24 24"><path d="M4.5 0.5h12l5 5v16.5h-17z" fill="#fff" stroke="#7f9fd0"/><path d="M16.5 0.5v5h5" fill="#d8e4f6" stroke="#7f9fd0"/><path d="M7 4h7M7 7h12M7 9.5h12M7 12h12M7 14.5h12M7 17h12M7 19.5h12" stroke="#c0c6d0" stroke-width="1"/><path d="M2.5 3.5h10l4 4v14.5h-14z" fill="#fff" stroke="#7f9fd0"/><path d="M5 9h9M5 12h9M5 15h9M5 18h9" stroke="#c0c6d0"/><path d="M3.5 13.5h8l3 3v5.5h-11z" fill="#fff" stroke="#7f9fd0"/><path d="M14 19h5l-2.5 3z" fill="#e00000"/></svg>
<svg style="left:947px;top:103px;" width="24" height="24" viewBox="0 0 24 24"><path d="M4.5 0.5h12l5 5v16.5h-17z" fill="#fff" stroke="#7f9fd0"/><path d="M16.5 0.5v5h5" fill="#d8e4f6" stroke="#7f9fd0"/><path d="M7 4h7M7 7h12M7 9.5h12M7 12h12M7 14.5h12M7 17h12M7 19.5h12" stroke="#c0c6d0" stroke-width="1"/><path d="M1.5 6.5h13v15.5h-13z" fill="#e8e8e8" stroke="#b8b8b8"/><path d="M5 4.5h6v3h-6z" fill="#f4f4f4" stroke="#b8b8b8"/></svg>
<div style="left:977px;top:104px;width:1px;height:22px;background:#a0a0a0"></div>
<div style="left:978px;top:104px;width:1px;height:22px;background:#ffffff"></div>
<svg style="left:981px;top:103px;" width="24" height="24" viewBox="0 0 24 24"><path d="M4.5 0.5h12l5 5v16.5h-17z" fill="#fff" stroke="#7f9fd0"/><path d="M16.5 0.5v5h5" fill="#d8e4f6" stroke="#7f9fd0"/><path d="M7 4h7M7 7h12M7 9.5h12M7 12h12M7 14.5h12M7 17h12M7 19.5h12" stroke="#c0c6d0" stroke-width="1"/><path d="M2.5 3.5h10l4 4v14.5h-14z" fill="#fff" stroke="#7f9fd0"/><path d="M5 9h9M5 12h9M5 15h9M5 18h9" stroke="#c0c6d0"/><path d="M3 12h3v3h3v3h-3v3h-3v-3h-3v-3h3z" fill="#58d830" stroke="#185800" stroke-width=".8"/><text x="10" y="21" font-size="10" font-weight="bold" fill="#e06010" font-family="Liberation Sans">0</text></svg>
<div style="left:1010px;top:104px;width:1px;height:22px;background:#a0a0a0"></div>
<div style="left:1011px;top:104px;width:1px;height:22px;background:#ffffff"></div>
<svg style="left:1016px;top:103px;" width="24" height="24" viewBox="0 0 24 24"><path d="M4.5 0.5h12l5 5v16.5h-17z" fill="#fff" stroke="#7f9fd0"/><path d="M16.5 0.5v5h5" fill="#d8e4f6" stroke="#7f9fd0"/><path d="M7 4h7M7 7h12M7 9.5h12M7 12h12M7 14.5h12M7 17h12M7 19.5h12" stroke="#c0c6d0" stroke-width="1"/><circle cx="8" cy="13" r="7" fill="#d4e8fa" stroke="#6a8cb8"/><text x="4.5" y="18" font-size="11" font-weight="bold" fill="#a00000" font-family="Liberation Sans">?</text><path d="M13 18l4 4" stroke="#f08030" stroke-width="3"/></svg>
<div style="left:1043px;top:104px;width:1px;height:22px;background:#a0a0a0"></div>
<div style="left:1044px;top:104px;width:1px;height:22px;background:#ffffff"></div>
<svg style="left:1048px;top:103px;" width="24" height="24" viewBox="0 0 24 24"><path d="M4.5 0.5h12l5 5v16.5h-17z" fill="#fff" stroke="#7f9fd0"/><path d="M16.5 0.5v5h5" fill="#d8e4f6" stroke="#7f9fd0"/><path d="M7 4h7M7 7h12M7 9.5h12M7 12h12M7 14.5h12M7 17h12M7 19.5h12" stroke="#c0c6d0" stroke-width="1"/><path d="M1 13h12v3h-12z" fill="#c050c0" stroke="#333" stroke-width=".5"/><path d="M1 16h12v3h-12z" fill="#3050d0" stroke="#333" stroke-width=".5"/><path d="M1 19h12v3.5h-12z" fill="#30b030" stroke="#333" stroke-width=".5"/><path d="M5.5 6h3v4h2.5l-4 3.5-4-3.5h2.5z" fill="#40d040" stroke="#0040c0" stroke-width=".8"/></svg>
<div style="left:1076px;top:104px;width:1px;height:22px;background:#a0a0a0"></div>
<div style="left:1077px;top:104px;width:1px;height:22px;background:#ffffff"></div>
<svg style="left:1077px;top:103px;" width="24" height="24" viewBox="0 0 24 24"><path d="M4.5 0.5h12l5 5v16.5h-17z" fill="#fff" stroke="#7f9fd0"/><path d="M16.5 0.5v5h5" fill="#d8e4f6" stroke="#7f9fd0"/><path d="M7 4h7M7 7h12M7 9.5h12M7 12h12M7 14.5h12M7 17h12M7 19.5h12" stroke="#c0c6d0" stroke-width="1"/><path d="M2.5 3.5h10l4 4v14.5h-14z" fill="#fff" stroke="#7f9fd0"/><path d="M5 9h9M5 12h9M5 15h9M5 18h9" stroke="#c0c6d0"/><text x="5" y="12" font-size="9" font-weight="bold" fill="#f08020" font-family="Liberation Sans">0</text><text x="8" y="21" font-size="9" font-weight="bold" fill="#3060c0" font-family="Liberation Sans">п</text></svg>
<div style="left:1109px;top:104px;width:1px;height:22px;background:#a0a0a0"></div>
<div style="left:1110px;top:104px;width:1px;height:22px;background:#ffffff"></div>
<svg style="left:1114px;top:103px;" width="24" height="24" viewBox="0 0 24 24"><path d="M4.5 0.5h12l5 5v16.5h-17z" fill="#fff" stroke="#7f9fd0"/><path d="M16.5 0.5v5h5" fill="#d8e4f6" stroke="#7f9fd0"/><path d="M7 4h7M7 7h12M7 9.5h12M7 12h12M7 14.5h12M7 17h12M7 19.5h12" stroke="#c0c6d0" stroke-width="1"/><rect x="1.2" y="2.2" width="12.6" height="12.6" fill="#fff" stroke="#0808b0" stroke-width="2.4"/><text x="7.5" y="12.3" font-size="10.5" font-weight="bold" fill="#000060" text-anchor="middle" font-family="Liberation Sans">К</text></svg>
<svg style="left:1142px;top:103px;" width="24" height="24" viewBox="0 0 24 24"><path d="M4.5 0.5h12l5 5v16.5h-17z" fill="#fff" stroke="#7f9fd0"/><path d="M16.5 0.5v5h5" fill="#d8e4f6" stroke="#7f9fd0"/><path d="M7 4h7M7 7h12M7 9.5h12M7 12h12M7 14.5h12M7 17h12M7 19.5h12" stroke="#c0c6d0" stroke-width="1"/><rect x="1.2" y="2.2" width="12.6" height="12.6" fill="#fff" stroke="#0808b0" stroke-width="2.4"/><text x="7.5" y="12.3" font-size="10.5" font-weight="bold" fill="#000060" text-anchor="middle" font-family="Liberation Sans">Т</text></svg>
<svg style="left:1170px;top:103px;" width="24" height="24" viewBox="0 0 24 24"><path d="M4.5 0.5h12l5 5v16.5h-17z" fill="#fff" stroke="#7f9fd0"/><path d="M16.5 0.5v5h5" fill="#d8e4f6" stroke="#7f9fd0"/><path d="M7 4h7M7 7h12M7 9.5h12M7 12h12M7 14.5h12M7 17h12M7 19.5h12" stroke="#c0c6d0" stroke-width="1"/><rect x="1.2" y="2.2" width="12.6" height="12.6" fill="#fff" stroke="#0808b0" stroke-width="2.4"/><text x="7.5" y="12.3" font-size="10.5" font-weight="bold" fill="#000060" text-anchor="middle" font-family="Liberation Sans">О</text></svg>
<svg style="left:1198px;top:103px;" width="24" height="24" viewBox="0 0 24 24"><path d="M4.5 0.5h12l5 5v16.5h-17z" fill="#fff" stroke="#7f9fd0"/><path d="M16.5 0.5v5h5" fill="#d8e4f6" stroke="#7f9fd0"/><path d="M7 4h7M7 7h12M7 9.5h12M7 12h12M7 14.5h12M7 17h12M7 19.5h12" stroke="#c0c6d0" stroke-width="1"/><rect x="1.2" y="2.2" width="12.6" height="12.6" fill="#fff" stroke="#0808b0" stroke-width="2.4"/><text x="7.5" y="12.3" font-size="10.5" font-weight="bold" fill="#000060" text-anchor="middle" font-family="Liberation Sans">З</text><path d="M16 19.5h5l-2.5 3z" fill="#e00000"/></svg>
<svg style="left:1226px;top:103px;" width="24" height="24" viewBox="0 0 24 24"><path d="M4.5 0.5h12l5 5v16.5h-17z" fill="#fff" stroke="#7f9fd0"/><path d="M16.5 0.5v5h5" fill="#d8e4f6" stroke="#7f9fd0"/><path d="M7 4h7M7 7h12M7 9.5h12M7 12h12M7 14.5h12M7 17h12M7 19.5h12" stroke="#c0c6d0" stroke-width="1"/><rect x="1.2" y="2.2" width="12.6" height="12.6" fill="#fff" stroke="#0808b0" stroke-width="2.4"/><text x="7.5" y="12.3" font-size="10.5" font-weight="bold" fill="#000060" text-anchor="middle" font-family="Liberation Sans">В</text><path d="M16 19.5h5l-2.5 3z" fill="#e00000"/></svg>
<svg style="left:1254px;top:103px;" width="24" height="24" viewBox="0 0 24 24"><path d="M4.5 0.5h12l5 5v16.5h-17z" fill="#fff" stroke="#7f9fd0"/><path d="M16.5 0.5v5h5" fill="#d8e4f6" stroke="#7f9fd0"/><path d="M7 4h7M7 7h12M7 9.5h12M7 12h12M7 14.5h12M7 17h12M7 19.5h12" stroke="#c0c6d0" stroke-width="1"/><rect x="1.2" y="2.2" width="12.6" height="12.6" fill="#fff" stroke="#0808b0" stroke-width="2.4"/><text x="7.5" y="12.3" font-size="10.5" font-weight="bold" fill="#000060" text-anchor="middle" font-family="Liberation Sans">Н</text><path d="M16 19.5h5l-2.5 3z" fill="#e00000"/></svg>
<svg style="left:1282px;top:103px;" width="24" height="24" viewBox="0 0 24 24"><path d="M4.5 0.5h12l5 5v16.5h-17z" fill="#fff" stroke="#7f9fd0"/><path d="M16.5 0.5v5h5" fill="#d8e4f6" stroke="#7f9fd0"/><path d="M7 4h7M7 7h12M7 9.5h12M7 12h12M7 14.5h12M7 17h12M7 19.5h12" stroke="#c0c6d0" stroke-width="1"/><rect x="1.2" y="2.2" width="12.6" height="12.6" fill="#fff" stroke="#0808b0" stroke-width="2.4"/><text x="7.5" y="12.3" font-size="10.5" font-weight="bold" fill="#000060" text-anchor="middle" font-family="Liberation Sans">Ф</text></svg>
<svg style="left:1310px;top:103px;" width="24" height="24" viewBox="0 0 24 24"><path d="M4.5 0.5h12l5 5v16.5h-17z" fill="#fff" stroke="#7f9fd0"/><path d="M16.5 0.5v5h5" fill="#d8e4f6" stroke="#7f9fd0"/><path d="M7 4h7M7 7h12M7 9.5h12M7 12h12M7 14.5h12M7 17h12M7 19.5h12" stroke="#c0c6d0" stroke-width="1"/><rect x="1.2" y="2.2" width="12.6" height="12.6" fill="#fff" stroke="#0808b0" stroke-width="2.4"/><text x="7.5" y="12.3" font-size="10.5" font-weight="bold" fill="#000060" text-anchor="middle" font-family="Liberation Sans">Р</text><path d="M16 19.5h5l-2.5 3z" fill="#e00000"/></svg>
<svg style="left:1338px;top:103px;" width="24" height="24" viewBox="0 0 24 24"><path d="M4.5 0.5h12l5 5v16.5h-17z" fill="#fff" stroke="#7f9fd0"/><path d="M16.5 0.5v5h5" fill="#d8e4f6" stroke="#7f9fd0"/><path d="M7 4h7M7 7h12M7 9.5h12M7 12h12M7 14.5h12M7 17h12M7 19.5h12" stroke="#c0c6d0" stroke-width="1"/><rect x="1.2" y="2.2" width="12.6" height="12.6" fill="#fff" stroke="#0808b0" stroke-width="2.4"/><text x="7.5" y="12.3" font-size="10.5" font-weight="bold" fill="#000060" text-anchor="middle" font-family="Liberation Sans">А</text></svg>
<svg style="left:1366px;top:103px;" width="24" height="24" viewBox="0 0 24 24"><path d="M4.5 0.5h12l5 5v16.5h-17z" fill="#fff" stroke="#7f9fd0"/><path d="M16.5 0.5v5h5" fill="#d8e4f6" stroke="#7f9fd0"/><path d="M7 4h7M7 7h12M7 9.5h12M7 12h12M7 14.5h12M7 17h12M7 19.5h12" stroke="#c0c6d0" stroke-width="1"/><rect x="0.5" y="3" width="11" height="10" fill="#30a040" stroke="#105010"/><text x="3" y="11.5" font-size="9" fill="#fff" font-family="Liberation Sans" font-weight="bold">X</text><text x="10" y="22" font-size="11" fill="#e03020" font-family="Liberation Sans">Σ</text></svg>
<svg style="left:1395px;top:103px;" width="24" height="24" viewBox="0 0 24 24"><path d="M4.5 0.5h12l5 5v16.5h-17z" fill="#fff" stroke="#7f9fd0"/><path d="M16.5 0.5v5h5" fill="#d8e4f6" stroke="#7f9fd0"/><path d="M7 4h7M7 7h12M7 9.5h12M7 12h12M7 14.5h12M7 17h12M7 19.5h12" stroke="#c0c6d0" stroke-width="1"/><path d="M4 22v-5h3v5zM9 22v-8h3v8zM14 22v-11h3v11z" fill="#e08030"/><path d="M4 22v-5h3v5z" fill="#f0c040"/></svg>
<div style="left:807px;top:131px;width:1378px;height:1000px;background:#fff;border:1px solid #a0a0a0;box-sizing:border-box"></div>
<div style="left:808px;top:132px;width:866px;height:45px;background:#f0f0f0"></div>
<div style="left:808px;top:176px;width:866px;height:1px;background:#a0a0a0"></div>
<div style="left:907px;top:134px;width:1px;height:42px;background:#a0a0a0"></div>
<div style="left:1196px;top:134px;width:1px;height:42px;background:#a0a0a0"></div>
<div style="left:1284px;top:134px;width:1px;height:42px;background:#a0a0a0"></div>
<div style="left:1424px;top:134px;width:1px;height:42px;background:#a0a0a0"></div>
<div style="left:1534px;top:134px;width:1px;height:42px;background:#a0a0a0"></div>
<div style="left:1674px;top:134px;width:1px;height:42px;background:#a0a0a0"></div>
<div class="t" style="left:811px;top:136px;font-size:16px;color:#000;line-height:20px;-webkit-text-stroke:0.2px #fff;letter-spacing:0.25px;">Код</div>
<div class="t" style="left:910px;top:136px;font-size:16px;color:#000;line-height:20px;-webkit-text-stroke:0.2px #fff;letter-spacing:0.25px;">Наименование</div>
<div class="t" style="left:1199px;top:136px;font-size:16px;color:#000;line-height:20px;-webkit-text-stroke:0.2px #fff;letter-spacing:0.25px;">Область</div>
<div class="t" style="left:1287px;top:136px;font-size:16px;color:#000;line-height:20px;-webkit-text-stroke:0.2px #fff;letter-spacing:0.25px;">Цена<br>подрядчика</div>
<div class="t" style="left:1427px;top:136px;font-size:16px;color:#000;line-height:20px;-webkit-text-stroke:0.2px #fff;letter-spacing:0.214px;">Дата начала<br>стр-ва</div>
<div class="t" style="left:1537px;top:136px;font-size:16px;color:#000;line-height:20px;-webkit-text-stroke:0.2px #fff;letter-spacing:0.219px;">Дата окончания<br>стр-ва</div>
<div style="left:808px;top:177px;width:99px;height:25px;background:#fff"></div>
<div class="t" style="left:811px;top:181px;font-size:16px;color:#000;width:94px;overflow:hidden;line-height:20px;-webkit-text-stroke:0.2px #fff;letter-spacing:-0.15px;">1-0</div>
<div style="left:908px;top:177px;width:288px;height:25px;background:#f0f0f0"></div>
<div class="t" style="left:911px;top:181px;font-size:16px;color:#000;width:283px;overflow:hidden;line-height:20px;-webkit-text-stroke:0.2px #fff;letter-spacing:0.231px;">Капитальный ремонт автомобильной дороги</div>
<div style="left:1197px;top:177px;width:87px;height:25px;background:#f0f0f0"></div>
<div class="t" style="left:1200px;top:181px;font-size:16px;color:#000;width:82px;overflow:hidden;line-height:20px;-webkit-text-stroke:0.2px #fff;letter-spacing:0.25px;">Минская</div>
<div style="left:1285px;top:177px;width:139px;height:25px;background:#f0f0f0"></div>
<div style="left:1425px;top:177px;width:109px;height:25px;background:#f0f0f0"></div>
<div class="t" style="left:1428px;top:181px;font-size:16px;color:#000;width:104px;overflow:hidden;line-height:20px;-webkit-text-stroke:0.2px #fff;letter-spacing:-0.15px;">01.06.2024</div>
<div style="left:1535px;top:177px;width:139px;height:25px;background:#f0f0f0"></div>
<div class="t" style="left:1538px;top:181px;font-size:16px;color:#000;width:134px;overflow:hidden;line-height:20px;-webkit-text-stroke:0.2px #fff;letter-spacing:-0.15px;">30.09.2024</div>
<div style="left:808px;top:201px;width:866px;height:1px;background:#a0a0a0"></div>
<div style="left:808px;top:202px;width:99px;height:25px;background:#fff"></div>
<div class="t" style="left:811px;top:206px;font-size:16px;color:#000;width:94px;overflow:hidden;line-height:20px;-webkit-text-stroke:0.2px #fff;letter-spacing:-0.05px;">3-0-(СС)</div>
<div style="left:908px;top:202px;width:288px;height:25px;background:#fff"></div>
<div style="left:1197px;top:202px;width:87px;height:25px;background:#fff"></div>
<div style="left:1285px;top:202px;width:139px;height:25px;background:#fff"></div>
<div style="left:1425px;top:202px;width:109px;height:25px;background:#fff"></div>
<div style="left:1535px;top:202px;width:139px;height:25px;background:#fff"></div>
<div style="left:808px;top:226px;width:866px;height:1px;background:#a0a0a0"></div>
<div style="left:808px;top:227px;width:99px;height:25px;background:#fff"></div>
<div class="t" style="left:811px;top:231px;font-size:16px;color:#000;width:94px;overflow:hidden;line-height:20px;-webkit-text-stroke:0.2px #fff;letter-spacing:0.004px;">2-0-(ЭВ)(экс)</div>
<div style="left:908px;top:227px;width:288px;height:25px;background:#fff"></div>
<div style="left:1197px;top:227px;width:87px;height:25px;background:#fff"></div>
<div style="left:1285px;top:227px;width:139px;height:25px;background:#fff"></div>
<div style="left:1425px;top:227px;width:109px;height:25px;background:#fff"></div>
<div style="left:1535px;top:227px;width:139px;height:25px;background:#fff"></div>
<div style="left:808px;top:251px;width:866px;height:1px;background:#a0a0a0"></div>
<div style="left:808px;top:252px;width:99px;height:25px;background:#fff"></div>
<div class="t" style="left:811px;top:256px;font-size:16px;color:#000;width:94px;overflow:hidden;line-height:20px;-webkit-text-stroke:0.2px #fff;letter-spacing:0.021px;">1-0-Изм</div>
<div style="left:908px;top:252px;width:288px;height:25px;background:#fff"></div>
<div style="left:1197px;top:252px;width:87px;height:25px;background:#fff"></div>
<div style="left:1285px;top:252px;width:139px;height:25px;background:#fff"></div>
<div style="left:1425px;top:252px;width:109px;height:25px;background:#fff"></div>
<div style="left:1535px;top:252px;width:139px;height:25px;background:#fff"></div>
<div style="left:808px;top:276px;width:866px;height:1px;background:#a0a0a0"></div>
<div style="left:907px;top:177px;width:1px;height:100px;background:#a0a0a0"></div>
<div style="left:1196px;top:177px;width:1px;height:100px;background:#a0a0a0"></div>
<div style="left:1284px;top:177px;width:1px;height:100px;background:#a0a0a0"></div>
<div style="left:1424px;top:177px;width:1px;height:100px;background:#a0a0a0"></div>
<div style="left:1534px;top:177px;width:1px;height:100px;background:#a0a0a0"></div>
<div style="left:808px;top:178px;width:866px;height:24px;border:2px solid #111;box-sizing:border-box"></div>
<div style="left:1349px;top:183px;width:11px;height:11px;border:1px solid #0000e0;box-sizing:border-box;background:#fff"></div>
<svg style="left:797px;top:210px" width="7" height="60" viewBox="0 0 7 60"><path d="M6 0l-5 3 5 3zM1 7l5 3-5 3z" fill="#000"/><path d="M3.5 15v30" stroke="#000" stroke-dasharray="1 1" stroke-width="3"/><path d="M1 47l5 3-5 3zM6 54l-5 3 5 3z" fill="#000"/></svg>
<div style="left:910px;top:197px;width:1277px;height:56px;background:#f0f0f0;border-left:1px solid #0078d7;box-sizing:border-box"></div>
<div style="left:910px;top:197px;width:1277px;height:22px;background:#0078d7"></div>
<div class="t" style="left:913px;top:200px;font-size:11px;color:#fff;line-height:16px;">Калькуляции стоимости, транспортных расходов и приготовления материалов</div>
<div style="left:911px;top:220px;width:1276px;height:1px;background:#fff"></div>
<svg style="left:919px;top:223px;" width="24" height="24" viewBox="0 0 24 24"><path d="M4.5 0.5h12l5 5v16.5h-17z" fill="#fff" stroke="#7f9fd0"/><path d="M16.5 0.5v5h5" fill="#d8e4f6" stroke="#7f9fd0"/><path d="M7 4h7M7 7h12M7 9.5h12M7 12h12M7 14.5h12M7 17h12M7 19.5h12" stroke="#c0c6d0" stroke-width="1"/><path d="M1.5 22.5l1.5-5 10-10 3.5 3.5-10 10z" fill="#f4a830" stroke="#804000" stroke-width=".8"/><path d="M13 7.5l2-2 3.5 3.5-2 2z" fill="#e03030"/></svg>
<div class="t" style="left:946px;top:228px;font-size:11px;color:#000;line-height:16px;">Коррект.</div>
<svg style="left:1014px;top:223px;" width="24" height="24" viewBox="0 0 24 24"><path d="M4.5 0.5h12l5 5v16.5h-17z" fill="#fff" stroke="#7f9fd0"/><path d="M16.5 0.5v5h5" fill="#d8e4f6" stroke="#7f9fd0"/><path d="M7 4h7M7 7h12M7 9.5h12M7 12h12M7 14.5h12M7 17h12M7 19.5h12" stroke="#c0c6d0" stroke-width="1"/><path d="M0.5 15l8-6 9 6.5-8 6z" fill="#2f8a86" stroke="#0c3030" stroke-width=".9"/><path d="M0.5 15v2.5l9 6v-2.5z" fill="#fff" stroke="#0c3030" stroke-width=".7"/><path d="M9.5 21v2.5l8-6v-2z" fill="#1f5a58" stroke="#0c3030" stroke-width=".7"/></svg>
<div class="t" style="left:1041px;top:228px;font-size:11px;color:#000;line-height:16px;">Справ-ки</div>
<div style="left:1007px;top:225px;width:1px;height:22px;background:#a0a0a0"></div>
<div style="left:1008px;top:225px;width:1px;height:22px;background:#ffffff"></div>
<svg style="left:1109px;top:223px;opacity:.5;" width="24" height="24" viewBox="0 0 24 24"><path d="M4.5 0.5h12l5 5v16.5h-17z" fill="#fff" stroke="#7f9fd0"/><path d="M16.5 0.5v5h5" fill="#d8e4f6" stroke="#7f9fd0"/><path d="M7 4h7M7 7h12M7 9.5h12M7 12h12M7 14.5h12M7 17h12M7 19.5h12" stroke="#c0c6d0" stroke-width="1"/><rect x="0.5" y="12" width="14" height="10" fill="#999" stroke="#555"/><path d="M3 15h9M3 18h9" stroke="#ddd" stroke-dasharray="1 1"/></svg>
<div class="t" style="left:1136px;top:228px;font-size:11px;color:#a0a0a0;line-height:16px;">Расчет</div>
<div style="left:1102px;top:225px;width:1px;height:22px;background:#a0a0a0"></div>
<div style="left:1103px;top:225px;width:1px;height:22px;background:#ffffff"></div>
<svg style="left:1204px;top:223px;" width="24" height="24" viewBox="0 0 24 24"><path d="M4.5 0.5h12l5 5v16.5h-17z" fill="#fff" stroke="#7f9fd0"/><path d="M16.5 0.5v5h5" fill="#d8e4f6" stroke="#7f9fd0"/><path d="M7 4h7M7 7h12M7 9.5h12M7 12h12M7 14.5h12M7 17h12M7 19.5h12" stroke="#c0c6d0" stroke-width="1"/><path d="M0.5 14h15v7h-15z" fill="#888" stroke="#222"/><path d="M3 10h10v4h-10z" fill="#fff" stroke="#222"/><rect x="3" y="17" width="6" height="1.5" fill="#ee2"/></svg>
<div class="t" style="left:1231px;top:228px;font-size:11px;color:#000;line-height:16px;">Печать</div>
<div style="left:1197px;top:225px;width:1px;height:22px;background:#a0a0a0"></div>
<div style="left:1198px;top:225px;width:1px;height:22px;background:#ffffff"></div>
<svg style="left:1299px;top:223px;" width="24" height="24" viewBox="0 0 24 24"><path d="M4.5 0.5h12l5 5v16.5h-17z" fill="#fff" stroke="#7f9fd0"/><path d="M16.5 0.5v5h5" fill="#d8e4f6" stroke="#7f9fd0"/><path d="M7 4h7M7 7h12M7 9.5h12M7 12h12M7 14.5h12M7 17h12M7 19.5h12" stroke="#c0c6d0" stroke-width="1"/><path d="M1 22.5v-6l2.5-6h3l1 5h2l1-5h3l2.5 6v6h-5.5v-4h-3v4z" fill="#0a0a0a"/><rect x="2" y="8" width="3.5" height="3" fill="#0a0a0a"/><rect x="10.5" y="8" width="3.5" height="3" fill="#0a0a0a"/><path d="M2.5 17v3M11 17v3" stroke="#fff" stroke-width="1"/></svg>
<div class="t" style="left:1326px;top:228px;font-size:11px;color:#000;line-height:16px;">Поиск</div>
<div style="left:1292px;top:225px;width:1px;height:22px;background:#a0a0a0"></div>
<div style="left:1293px;top:225px;width:1px;height:22px;background:#ffffff"></div>
<svg style="left:1394px;top:223px;" width="24" height="24" viewBox="0 0 24 24"><path d="M4.5 0.5h12l5 5v16.5h-17z" fill="#fff" stroke="#7f9fd0"/><path d="M16.5 0.5v5h5" fill="#d8e4f6" stroke="#7f9fd0"/><path d="M7 4h7M7 7h12M7 9.5h12M7 12h12M7 14.5h12M7 17h12M7 19.5h12" stroke="#c0c6d0" stroke-width="1"/><path d="M7 6l6-2v17l-6 2z" fill="#c8b848" stroke="#303000" stroke-width=".8"/><path d="M0.5 13h4v-3l4.5 4.5-4.5 4.5v-3h-4z" fill="#f04020" stroke="#900" stroke-width=".6"/></svg>
<div class="t" style="left:1421px;top:228px;font-size:11px;color:#000;line-height:16px;">Выход</div>
<div style="left:1387px;top:225px;width:1px;height:22px;background:#a0a0a0"></div>
<div style="left:1388px;top:225px;width:1px;height:22px;background:#ffffff"></div>
<div style="left:859px;top:250px;width:1328px;height:58px;background:#f0f0f0;border-left:1px solid #0078d7;box-sizing:border-box"></div>
<div style="left:859px;top:250px;width:1328px;height:22px;background:#0078d7"></div>
<div class="t" style="left:862px;top:253px;font-size:11px;color:#fff;line-height:16px;">Нормы зимних удорожаний по объекту</div>
<svg style="left:864px;top:278px;" width="24" height="24" viewBox="0 0 24 24"><path d="M4.5 0.5h12l5 5v16.5h-17z" fill="#fff" stroke="#7f9fd0"/><path d="M16.5 0.5v5h5" fill="#d8e4f6" stroke="#7f9fd0"/><path d="M7 4h7M7 7h12M7 9.5h12M7 12h12M7 14.5h12M7 17h12M7 19.5h12" stroke="#c0c6d0" stroke-width="1"/><path d="M0.5 10h12l2 2v11h-14z" fill="#1828c0" stroke="#000070" stroke-width=".6"/><rect x="2.5" y="11" width="9" height="5.5" fill="#fff"/><rect x="2.5" y="11" width="9" height="1.5" fill="#e02020"/><rect x="4" y="18.5" width="6" height="3.5" fill="#d0d0d0"/></svg>
<svg style="left:894px;top:277px;" width="24" height="24" viewBox="0 0 24 24"><path d="M4.5 0.5h12l5 5v16.5h-17z" fill="#fff" stroke="#7f9fd0"/><path d="M16.5 0.5v5h5" fill="#d8e4f6" stroke="#7f9fd0"/><path d="M7 4h7M7 7h12M7 9.5h12M7 12h12M7 14.5h12M7 17h12M7 19.5h12" stroke="#c0c6d0" stroke-width="1"/><rect x="1.8" y="2.2" width="13.4" height="13" fill="#fff" stroke="#2a2ad8" stroke-width="2.6"/><text x="8.5" y="13.2" font-size="12.5" font-weight="bold" fill="#101060" text-anchor="middle" font-family="Liberation Serif">З</text></svg>
<svg style="left:926px;top:288px" width="8" height="5" viewBox="0 0 8 5"><path d="M0 0h8l-4 4z" fill="#000"/></svg>
<div style="left:940px;top:275px;width:1px;height:27px;background:#a0a0a0"></div>
<div style="left:941px;top:275px;width:1px;height:27px;background:#ffffff"></div>
<svg style="left:946px;top:278px;" width="24" height="24" viewBox="0 0 24 24"><path d="M4.5 0.5h12l5 5v16.5h-17z" fill="#fff" stroke="#7f9fd0"/><path d="M16.5 0.5v5h5" fill="#d8e4f6" stroke="#7f9fd0"/><path d="M7 4h7M7 7h12M7 9.5h12M7 12h12M7 14.5h12M7 17h12M7 19.5h12" stroke="#c0c6d0" stroke-width="1"/><path d="M7 6l6-2v17l-6 2z" fill="#c8b848" stroke="#303000" stroke-width=".8"/><path d="M0.5 13h4v-3l4.5 4.5-4.5 4.5v-3h-4z" fill="#f04020" stroke="#900" stroke-width=".6"/></svg>
<div style="left:860px;top:306px;width:1327px;height:1px;background:#a0a0a0"></div>
<div style="left:803px;top:308px;width:1384px;height:54px;background:#f0f0f0;border-left:1px solid #0078d7;box-sizing:border-box"></div>
<div style="left:803px;top:308px;width:1384px;height:22px;background:#0078d7"></div>
<div class="t" style="left:806px;top:311px;font-size:11px;color:#fff;line-height:16px;">Текущие цены</div>
<div style="left:808px;top:332px;width:64px;height:27px;background:#f0f0f0"></div>
<svg style="left:809px;top:333px" width="22" height="22" viewBox="0 0 24 24"><path d="M4.5 0.5h12l5 5v16.5h-17z" fill="#fff" stroke="#7f9fd0"/><path d="M16.5 0.5v5h5" fill="#d8e4f6" stroke="#7f9fd0"/><path d="M7 4h7M7 7h12M7 9.5h12M7 12h12M7 14.5h12M7 17h12M7 19.5h12" stroke="#c0c6d0" stroke-width="1"/><path d="M2.5 3.5h10l4 4v14.5h-14z" fill="#fff" stroke="#7f9fd0"/><path d="M5 9h9M5 12h9M5 15h9M5 18h9" stroke="#c0c6d0"/></svg>
<div class="t" style="left:812px;top:342px;font-size:11px;color:#000080;line-height:16px;letter-spacing:-0.1px">Материалы</div>
<div style="left:877px;top:333px;width:1px;height:26px;background:#a0a0a0"></div>
<div style="left:878px;top:333px;width:1px;height:26px;background:#ffffff"></div>
<div style="left:881px;top:332px;width:68px;height:29px;background:#e8e8e8;border:1px solid #d8d8d8;box-sizing:border-box"></div>
<svg style="left:885px;top:333px" width="22" height="22" viewBox="0 0 24 24"><path d="M4.5 0.5h12l5 5v16.5h-17z" fill="#fff" stroke="#7f9fd0"/><path d="M16.5 0.5v5h5" fill="#d8e4f6" stroke="#7f9fd0"/><path d="M7 4h7M7 7h12M7 9.5h12M7 12h12M7 14.5h12M7 17h12M7 19.5h12" stroke="#c0c6d0" stroke-width="1"/><path d="M2.5 3.5h10l4 4v14.5h-14z" fill="#fff" stroke="#7f9fd0"/><path d="M5 9h9M5 12h9M5 15h9M5 18h9" stroke="#c0c6d0"/></svg>
<div class="t" style="left:888px;top:342px;font-size:11px;color:#000080;line-height:16px;letter-spacing:-0.1px">Механизмы</div>
<div style="left:954px;top:334px;width:1px;height:26px;background:#a0a0a0"></div>
<div style="left:957px;top:334px;width:1px;height:26px;background:#a0a0a0"></div>
<svg style="left:963px;top:333px;" width="24" height="24" viewBox="0 0 24 24"><path d="M4.5 0.5h12l5 5v16.5h-17z" fill="#fff" stroke="#7f9fd0"/><path d="M16.5 0.5v5h5" fill="#d8e4f6" stroke="#7f9fd0"/><path d="M7 4h7M7 7h12M7 9.5h12M7 12h12M7 14.5h12M7 17h12M7 19.5h12" stroke="#c0c6d0" stroke-width="1"/><path d="M0.5 10h12l2 2v11h-14z" fill="#1828c0" stroke="#000070" stroke-width=".6"/><rect x="2.5" y="11" width="9" height="5.5" fill="#fff"/><rect x="2.5" y="11" width="9" height="1.5" fill="#e02020"/><rect x="4" y="18.5" width="6" height="3.5" fill="#d0d0d0"/></svg>
<svg style="left:991px;top:333px;" width="24" height="24" viewBox="0 0 24 24"><path d="M4.5 0.5h12l5 5v16.5h-17z" fill="#fff" stroke="#7f9fd0"/><path d="M16.5 0.5v5h5" fill="#d8e4f6" stroke="#7f9fd0"/><path d="M7 4h7M7 7h12M7 9.5h12M7 12h12M7 14.5h12M7 17h12M7 19.5h12" stroke="#c0c6d0" stroke-width="1"/><ellipse cx="7" cy="11" rx="6" ry="2" fill="#f0d050" stroke="#a08000"/><path d="M1 11v9a6 2 0 0 0 12 0v-9" fill="#f0c040" stroke="#a08000"/><path d="M5.5 13h3v3h2l-3.5 3-3.5-3h2z" fill="#40a040" stroke="#0040c0" stroke-width=".6"/></svg>
<svg style="left:1019px;top:333px;" width="24" height="24" viewBox="0 0 24 24"><path d="M4.5 0.5h12l5 5v16.5h-17z" fill="#fff" stroke="#7f9fd0"/><path d="M16.5 0.5v5h5" fill="#d8e4f6" stroke="#7f9fd0"/><path d="M7 4h7M7 7h12M7 9.5h12M7 12h12M7 14.5h12M7 17h12M7 19.5h12" stroke="#c0c6d0" stroke-width="1"/><path d="M1 22.5v-6l2.5-6h3l1 5h2l1-5h3l2.5 6v6h-5.5v-4h-3v4z" fill="#0a0a0a"/><rect x="2" y="8" width="3.5" height="3" fill="#0a0a0a"/><rect x="10.5" y="8" width="3.5" height="3" fill="#0a0a0a"/><path d="M2.5 17v3M11 17v3" stroke="#fff" stroke-width="1"/></svg>
<svg style="left:1047px;top:333px;" width="24" height="24" viewBox="0 0 24 24"><path d="M4.5 0.5h12l5 5v16.5h-17z" fill="#fff" stroke="#7f9fd0"/><path d="M16.5 0.5v5h5" fill="#d8e4f6" stroke="#7f9fd0"/><path d="M7 4h7M7 7h12M7 9.5h12M7 12h12M7 14.5h12M7 17h12M7 19.5h12" stroke="#c0c6d0" stroke-width="1"/><circle cx="8" cy="13" r="7" fill="#d4e8fa" stroke="#6a8cb8"/><text x="4.5" y="18" font-size="11" font-weight="bold" fill="#a00000" font-family="Liberation Sans">?</text><path d="M13 18l4 4" stroke="#f08030" stroke-width="3"/></svg>
<svg style="left:1075px;top:333px;" width="24" height="24" viewBox="0 0 24 24"><path d="M4.5 0.5h12l5 5v16.5h-17z" fill="#fff" stroke="#7f9fd0"/><path d="M16.5 0.5v5h5" fill="#d8e4f6" stroke="#7f9fd0"/><path d="M7 4h7M7 7h12M7 9.5h12M7 12h12M7 14.5h12M7 17h12M7 19.5h12" stroke="#c0c6d0" stroke-width="1"/><path d="M7 6l6-2v17l-6 2z" fill="#c8b848" stroke="#303000" stroke-width=".8"/><path d="M0.5 13h4v-3l4.5 4.5-4.5 4.5v-3h-4z" fill="#f04020" stroke="#900" stroke-width=".6"/></svg>
<div style="left:753px;top:361px;width:1434px;height:64px;background:#f0f0f0;border-left:1px solid #0078d7;box-sizing:border-box"></div>
<div style="left:804px;top:359px;width:1383px;height:1px;background:#a0a0a0"></div>
<div style="left:753px;top:361px;width:1434px;height:27px;background:#0078d7"></div>
<svg style="left:761px;top:365px" width="17" height="18" viewBox="0 0 17 18"><path d="M0.5 12L2 10.5L5 9.5L7 10L7.5 4L9 2L11 1L13 2L14 4L15.5 5L14.5 7L16 8.5L14.5 11L15 14L13.5 16L12 17.5H6L4 16.5L1.5 17L0.3 15.5L1 14z" fill="#078407" stroke="#000" stroke-width="1"/><rect x="0.5" y="1" width="7" height="5" fill="#a8c8f0" stroke="#4a8a8a" stroke-width=".9"/><path d="M3 6.5h3v1h-3z" fill="#c0a0d0"/><path d="M6.5 17.5L8.2 7.5H12.3L14 17.5z" fill="#fff"/><path d="M10.25 8.5V16.5" stroke="#078407" stroke-width="1"/><ellipse cx="8.9" cy="5.2" rx=".9" ry="1.7" fill="#fff"/><ellipse cx="11.6" cy="5.2" rx=".9" ry="1.7" fill="#fff"/></svg>
<div class="t" style="left:782px;top:366px;font-size:11px;color:#fff;line-height:16px;">Сводный сметный расчет</div>
<div style="left:1323px;top:421px;width:9px;height:4px;border:1px solid #a0a0a0;border-bottom:none;box-sizing:border-box;background:#fff"></div>
<svg style="left:759px;top:393px;" width="24" height="24" viewBox="0 0 24 24"><path d="M4.5 0.5h12l5 5v16.5h-17z" fill="#fff" stroke="#7f9fd0"/><path d="M16.5 0.5v5h5" fill="#d8e4f6" stroke="#7f9fd0"/><path d="M7 4h7M7 7h12M7 9.5h12M7 12h12M7 14.5h12M7 17h12M7 19.5h12" stroke="#c0c6d0" stroke-width="1"/><path d="M0.5 10h12l2 2v11h-14z" fill="#a8a8a8"/><rect x="2.5" y="11" width="9" height="5.5" fill="#e8e8e8"/><rect x="4" y="18.5" width="6" height="3.5" fill="#e0e0e0"/></svg>
<svg style="left:789px;top:392px;" width="24" height="24" viewBox="0 0 24 24"><path d="M4.5 0.5h12l5 5v16.5h-17z" fill="#fff" stroke="#7f9fd0"/><path d="M16.5 0.5v5h5" fill="#d8e4f6" stroke="#7f9fd0"/><path d="M7 4h7M7 7h12M7 9.5h12M7 12h12M7 14.5h12M7 17h12M7 19.5h12" stroke="#c0c6d0" stroke-width="1"/><rect x="1.8" y="2.2" width="13.4" height="13" fill="#fff" stroke="#2a2ad8" stroke-width="2.6"/><text x="8.5" y="13.2" font-size="12.5" font-weight="bold" fill="#101060" text-anchor="middle" font-family="Liberation Serif">С</text></svg>
<svg style="left:820px;top:392px;" width="24" height="24" viewBox="0 0 24 24"><path d="M4.5 0.5h12l5 5v16.5h-17z" fill="#fff" stroke="#7f9fd0"/><path d="M16.5 0.5v5h5" fill="#d8e4f6" stroke="#7f9fd0"/><path d="M7 4h7M7 7h12M7 9.5h12M7 12h12M7 14.5h12M7 17h12M7 19.5h12" stroke="#c0c6d0" stroke-width="1"/><rect x="1.8" y="2.2" width="13.4" height="13" fill="#fff" stroke="#2a2ad8" stroke-width="2.6"/><text x="8.5" y="13.2" font-size="12.5" font-weight="bold" fill="#101060" text-anchor="middle" font-family="Liberation Serif">К</text></svg>
<svg style="left:851px;top:403px" width="8" height="5" viewBox="0 0 8 5"><path d="M0 0h8l-4 4z" fill="#000"/></svg>
<svg style="left:864px;top:392px;" width="24" height="24" viewBox="0 0 24 24"><path d="M4.5 0.5h12l5 5v16.5h-17z" fill="#fff" stroke="#7f9fd0"/><path d="M16.5 0.5v5h5" fill="#d8e4f6" stroke="#7f9fd0"/><path d="M7 4h7M7 7h12M7 9.5h12M7 12h12M7 14.5h12M7 17h12M7 19.5h12" stroke="#c0c6d0" stroke-width="1"/><rect x="1.8" y="2.2" width="13.4" height="13" fill="#fff" stroke="#2a2ad8" stroke-width="2.6"/><text x="8.5" y="13.2" font-size="12.5" font-weight="bold" fill="#101060" text-anchor="middle" font-family="Liberation Serif">В</text></svg>
<div style="left:895px;top:390px;width:1px;height:29px;background:#a0a0a0"></div>
<div style="left:896px;top:390px;width:1px;height:29px;background:#ffffff"></div>
<svg style="left:900px;top:393px;" width="24" height="24" viewBox="0 0 24 24"><path d="M4.5 0.5h12l5 5v16.5h-17z" fill="#fff" stroke="#7f9fd0"/><path d="M16.5 0.5v5h5" fill="#d8e4f6" stroke="#7f9fd0"/><path d="M7 4h7M7 7h12M7 9.5h12M7 12h12M7 14.5h12M7 17h12M7 19.5h12" stroke="#c0c6d0" stroke-width="1"/><path d="M7 6l6-2v17l-6 2z" fill="#c8b848" stroke="#303000" stroke-width=".8"/><path d="M0.5 13h4v-3l4.5 4.5-4.5 4.5v-3h-4z" fill="#f04020" stroke="#900" stroke-width=".6"/></svg>
<div style="left:690px;top:425px;width:1497px;height:77px;background:#f0f0f0;border-left:1px solid #0078d7;box-sizing:border-box"></div>
<div style="left:690px;top:425px;width:1497px;height:22px;background:#0078d7"></div>
<div class="t" style="left:693px;top:428px;font-size:11px;color:#fff;line-height:16px;">Акт №0 от 30.10.2024</div>
<div style="left:693px;top:449px;width:84px;height:20px;border-right:1px solid #a0a0a0;box-sizing:border-box"></div>
<div class="t" style="left:698px;top:451px;font-size:11px;color:#000;line-height:14px;">Акты/Наборы</div>
<div style="left:778px;top:449px;width:68px;height:20px;border-right:1px solid #a0a0a0;box-sizing:border-box"></div>
<div class="t" style="left:783px;top:451px;font-size:11px;color:#000;line-height:14px;">Материалы</div>
<div style="left:847px;top:449px;width:70px;height:20px;border-right:1px solid #a0a0a0;box-sizing:border-box"></div>
<div class="t" style="left:852px;top:451px;font-size:11px;color:#000;line-height:14px;">Механизмы</div>
<div style="left:918px;top:449px;width:61px;height:20px;border-right:1px solid #a0a0a0;box-sizing:border-box"></div>
<div class="t" style="left:923px;top:451px;font-size:11px;color:#000;line-height:14px;">Списание</div>
<div style="left:694px;top:449px;width:81px;height:17px;border:1px dotted #333;box-sizing:border-box"></div>
<div style="left:691px;top:467px;width:1496px;height:1px;background:#fff"></div>
<svg style="left:695px;top:474px;" width="24" height="24" viewBox="0 0 24 24"><path d="M4.5 0.5h12l5 5v16.5h-17z" fill="#fff" stroke="#7f9fd0"/><path d="M16.5 0.5v5h5" fill="#d8e4f6" stroke="#7f9fd0"/><path d="M7 4h7M7 7h12M7 9.5h12M7 12h12M7 14.5h12M7 17h12M7 19.5h12" stroke="#c0c6d0" stroke-width="1"/><path d="M0.5 10h12l2 2v11h-14z" fill="#1828c0" stroke="#000070" stroke-width=".6"/><rect x="2.5" y="11" width="9" height="5.5" fill="#fff"/><rect x="2.5" y="11" width="9" height="1.5" fill="#e02020"/><rect x="4" y="18.5" width="6" height="3.5" fill="#d0d0d0"/></svg>
<div style="left:724px;top:474px;width:1px;height:24px;background:#a0a0a0"></div>
<div style="left:725px;top:474px;width:1px;height:24px;background:#ffffff"></div>
<svg style="left:728px;top:473px;" width="24" height="24" viewBox="0 0 24 24"><path d="M4.5 0.5h12l5 5v16.5h-17z" fill="#fff" stroke="#7f9fd0"/><path d="M16.5 0.5v5h5" fill="#d8e4f6" stroke="#7f9fd0"/><path d="M7 4h7M7 7h12M7 9.5h12M7 12h12M7 14.5h12M7 17h12M7 19.5h12" stroke="#c0c6d0" stroke-width="1"/><rect x="1.2" y="2.2" width="12.6" height="12.6" fill="#fff" stroke="#0808b0" stroke-width="2.4"/><text x="7.5" y="12.3" font-size="10.5" font-weight="bold" fill="#000060" text-anchor="middle" font-family="Liberation Sans">А</text></svg>
<svg style="left:756px;top:473px;" width="24" height="24" viewBox="0 0 24 24"><path d="M4.5 0.5h12l5 5v16.5h-17z" fill="#fff" stroke="#7f9fd0"/><path d="M16.5 0.5v5h5" fill="#d8e4f6" stroke="#7f9fd0"/><path d="M7 4h7M7 7h12M7 9.5h12M7 12h12M7 14.5h12M7 17h12M7 19.5h12" stroke="#c0c6d0" stroke-width="1"/><rect x="1.2" y="2.2" width="12.6" height="12.6" fill="#fff" stroke="#0808b0" stroke-width="2.4"/><text x="7.5" y="12.3" font-size="10.5" font-weight="bold" fill="#000060" text-anchor="middle" font-family="Liberation Sans">Р</text></svg>
<svg style="left:784px;top:473px;" width="24" height="24" viewBox="0 0 24 24"><path d="M4.5 0.5h12l5 5v16.5h-17z" fill="#fff" stroke="#7f9fd0"/><path d="M16.5 0.5v5h5" fill="#d8e4f6" stroke="#7f9fd0"/><path d="M7 4h7M7 7h12M7 9.5h12M7 12h12M7 14.5h12M7 17h12M7 19.5h12" stroke="#c0c6d0" stroke-width="1"/><rect x="1.2" y="2.2" width="12.6" height="12.6" fill="#fff" stroke="#0808b0" stroke-width="2.4"/><text x="7.5" y="12.3" font-size="10.5" font-weight="bold" fill="#000060" text-anchor="middle" font-family="Liberation Sans">М</text><path d="M16 19.5h5l-2.5 3z" fill="#e00000"/></svg>
<svg style="left:812px;top:473px;" width="24" height="24" viewBox="0 0 24 24"><path d="M4.5 0.5h12l5 5v16.5h-17z" fill="#fff" stroke="#7f9fd0"/><path d="M16.5 0.5v5h5" fill="#d8e4f6" stroke="#7f9fd0"/><path d="M7 4h7M7 7h12M7 9.5h12M7 12h12M7 14.5h12M7 17h12M7 19.5h12" stroke="#c0c6d0" stroke-width="1"/><rect x="1.2" y="2.2" width="12.6" height="12.6" fill="#fff" stroke="#0808b0" stroke-width="2.4"/><text x="7.5" y="12.3" font-size="10.5" font-weight="bold" fill="#000060" text-anchor="middle" font-family="Liberation Sans">Ф</text></svg>
<svg style="left:840px;top:473px;" width="24" height="24" viewBox="0 0 24 24"><path d="M4.5 0.5h12l5 5v16.5h-17z" fill="#fff" stroke="#7f9fd0"/><path d="M16.5 0.5v5h5" fill="#d8e4f6" stroke="#7f9fd0"/><path d="M7 4h7M7 7h12M7 9.5h12M7 12h12M7 14.5h12M7 17h12M7 19.5h12" stroke="#c0c6d0" stroke-width="1"/><rect x="1.2" y="2.2" width="12.6" height="12.6" fill="#fff" stroke="#0808b0" stroke-width="2.4"/><text x="7.5" y="12.3" font-size="10.5" font-weight="bold" fill="#000060" text-anchor="middle" font-family="Liberation Sans">С</text><path d="M16 19.5h5l-2.5 3z" fill="#e00000"/></svg>
<svg style="left:868px;top:473px;" width="24" height="24" viewBox="0 0 24 24"><path d="M4.5 0.5h12l5 5v16.5h-17z" fill="#fff" stroke="#7f9fd0"/><path d="M16.5 0.5v5h5" fill="#d8e4f6" stroke="#7f9fd0"/><path d="M7 4h7M7 7h12M7 9.5h12M7 12h12M7 14.5h12M7 17h12M7 19.5h12" stroke="#c0c6d0" stroke-width="1"/><rect x="1.2" y="2.2" width="12.6" height="12.6" fill="#fff" stroke="#0808b0" stroke-width="2.4"/><text x="7.5" y="12.3" font-size="10.5" font-weight="bold" fill="#000060" text-anchor="middle" font-family="Liberation Sans">П</text></svg>
<svg style="left:896px;top:473px;" width="24" height="24" viewBox="0 0 24 24"><path d="M4.5 0.5h12l5 5v16.5h-17z" fill="#fff" stroke="#7f9fd0"/><path d="M16.5 0.5v5h5" fill="#d8e4f6" stroke="#7f9fd0"/><path d="M7 4h7M7 7h12M7 9.5h12M7 12h12M7 14.5h12M7 17h12M7 19.5h12" stroke="#c0c6d0" stroke-width="1"/><rect x="1.2" y="2.2" width="12.6" height="12.6" fill="#fff" stroke="#0808b0" stroke-width="2.4"/><text x="7.5" y="12.3" font-size="10.5" font-weight="bold" fill="#000060" text-anchor="middle" font-family="Liberation Sans">В</text><path d="M16 19.5h5l-2.5 3z" fill="#e00000"/></svg>
<svg style="left:924px;top:473px;opacity:.5;" width="24" height="24" viewBox="0 0 24 24"><path d="M4.5 0.5h12l5 5v16.5h-17z" fill="#fff" stroke="#7f9fd0"/><path d="M16.5 0.5v5h5" fill="#d8e4f6" stroke="#7f9fd0"/><path d="M7 4h7M7 7h12M7 9.5h12M7 12h12M7 14.5h12M7 17h12M7 19.5h12" stroke="#c0c6d0" stroke-width="1"/><rect x="0.5" y="2.5" width="12" height="12" fill="#e8e8e8" stroke="#a8a8a8" stroke-width="2"/><circle cx="6.5" cy="8.5" r="3" fill="none" stroke="#a8a8a8" stroke-width="2"/></svg>
<svg style="left:952px;top:473px;" width="24" height="24" viewBox="0 0 24 24"><path d="M4.5 0.5h12l5 5v16.5h-17z" fill="#fff" stroke="#7f9fd0"/><path d="M16.5 0.5v5h5" fill="#d8e4f6" stroke="#7f9fd0"/><path d="M7 4h7M7 7h12M7 9.5h12M7 12h12M7 14.5h12M7 17h12M7 19.5h12" stroke="#c0c6d0" stroke-width="1"/><path d="M2 22l2-5 8-9 3 3-8 9z" fill="#f09020" stroke="#402000" stroke-width=".8"/><path d="M0 20h4M0 22h5" stroke="#3050f0"/></svg>
<div style="left:981px;top:474px;width:1px;height:24px;background:#a0a0a0"></div>
<div style="left:982px;top:474px;width:1px;height:24px;background:#ffffff"></div>
<svg style="left:986px;top:473px;" width="24" height="24" viewBox="0 0 24 24"><path d="M4.5 0.5h12l5 5v16.5h-17z" fill="#fff" stroke="#7f9fd0"/><path d="M16.5 0.5v5h5" fill="#d8e4f6" stroke="#7f9fd0"/><path d="M7 4h7M7 7h12M7 9.5h12M7 12h12M7 14.5h12M7 17h12M7 19.5h12" stroke="#c0c6d0" stroke-width="1"/><rect x="1.5" y="7.5" width="11" height="14" fill="#fff" stroke="#2040d0"/><path d="M4 10v9M4 12h3M4 17h3M8 11h3M8 16h3" stroke="#2040d0"/></svg>
<svg style="left:1014px;top:473px;" width="24" height="24" viewBox="0 0 24 24"><path d="M4.5 0.5h12l5 5v16.5h-17z" fill="#fff" stroke="#7f9fd0"/><path d="M16.5 0.5v5h5" fill="#d8e4f6" stroke="#7f9fd0"/><path d="M7 4h7M7 7h12M7 9.5h12M7 12h12M7 14.5h12M7 17h12M7 19.5h12" stroke="#c0c6d0" stroke-width="1"/><rect x="1.5" y="7.5" width="11" height="14" fill="#fff" stroke="#2040d0"/><path d="M4 11h2M4 14h2M4 17h2M7 11h4M7 14h4M7 17h4" stroke="#2040d0"/></svg>
<div style="left:1042px;top:474px;width:1px;height:24px;background:#a0a0a0"></div>
<div style="left:1043px;top:474px;width:1px;height:24px;background:#ffffff"></div>
<svg style="left:1047px;top:473px;" width="24" height="24" viewBox="0 0 24 24"><path d="M4.5 0.5h12l5 5v16.5h-17z" fill="#fff" stroke="#7f9fd0"/><path d="M16.5 0.5v5h5" fill="#d8e4f6" stroke="#7f9fd0"/><path d="M7 4h7M7 7h12M7 9.5h12M7 12h12M7 14.5h12M7 17h12M7 19.5h12" stroke="#c0c6d0" stroke-width="1"/><text x="3" y="21" font-size="9" fill="#3060c0" font-family="Liberation Sans">%</text></svg>
<div style="left:1075px;top:474px;width:1px;height:24px;background:#a0a0a0"></div>
<div style="left:1076px;top:474px;width:1px;height:24px;background:#ffffff"></div>
<svg style="left:1080px;top:473px;opacity:.5;" width="24" height="24" viewBox="0 0 24 24"><path d="M4.5 0.5h12l5 5v16.5h-17z" fill="#fff" stroke="#7f9fd0"/><path d="M16.5 0.5v5h5" fill="#d8e4f6" stroke="#7f9fd0"/><path d="M7 4h7M7 7h12M7 9.5h12M7 12h12M7 14.5h12M7 17h12M7 19.5h12" stroke="#c0c6d0" stroke-width="1"/><text x="3" y="20" font-size="13" fill="#a0a0a0" font-family="Liberation Sans">Σ</text></svg>
<svg style="left:1108px;top:473px;opacity:.5;" width="24" height="24" viewBox="0 0 24 24"><path d="M4.5 0.5h12l5 5v16.5h-17z" fill="#fff" stroke="#7f9fd0"/><path d="M16.5 0.5v5h5" fill="#d8e4f6" stroke="#7f9fd0"/><path d="M7 4h7M7 7h12M7 9.5h12M7 12h12M7 14.5h12M7 17h12M7 19.5h12" stroke="#c0c6d0" stroke-width="1"/><circle cx="8" cy="13" r="7" fill="#e8e8e8" stroke="#a0a0a0"/><text x="4.5" y="18" font-size="11" font-weight="bold" fill="#a0a0a0" font-family="Liberation Sans">?</text><path d="M13 18l4 4" stroke="#d0a080" stroke-width="3"/></svg>
<div style="left:1136px;top:474px;width:1px;height:24px;background:#a0a0a0"></div>
<div style="left:1137px;top:474px;width:1px;height:24px;background:#ffffff"></div>
<svg style="left:1141px;top:473px;" width="24" height="24" viewBox="0 0 24 24"><path d="M4.5 0.5h12l5 5v16.5h-17z" fill="#fff" stroke="#7f9fd0"/><path d="M16.5 0.5v5h5" fill="#d8e4f6" stroke="#7f9fd0"/><path d="M7 4h7M7 7h12M7 9.5h12M7 12h12M7 14.5h12M7 17h12M7 19.5h12" stroke="#c0c6d0" stroke-width="1"/><path d="M7 6l6-2v17l-6 2z" fill="#c8b848" stroke="#303000" stroke-width=".8"/><path d="M0.5 13h4v-3l4.5 4.5-4.5 4.5v-3h-4z" fill="#f04020" stroke="#900" stroke-width=".6"/></svg>
<div style="left:616px;top:501px;width:1571px;height:77px;background:#f0f0f0;border-left:1px solid #0078d7;box-sizing:border-box"></div>
<div style="left:616px;top:501px;width:1571px;height:22px;background:#0078d7"></div>
<div class="t" style="left:619px;top:504px;font-size:11px;color:#fff;line-height:16px;">Расчет цены предложения подрядчика (дата разработки ПСД 26.12.2022)</div>
<div style="left:620px;top:526px;width:121px;height:19px;background:#ebebeb"></div>
<div class="t" style="left:625px;top:528px;font-size:11px;color:#000;line-height:15px;">График производства</div>
<div style="left:744px;top:524px;width:117px;height:20px;border-right:1px solid #a0a0a0;box-sizing:border-box"></div>
<div style="left:745px;top:525px;width:114px;height:17px;border:1px dotted #333;box-sizing:border-box"></div>
<div class="t" style="left:750px;top:526px;font-size:11px;color:#000;line-height:14px;">Данные для расчета</div>
<div style="left:617px;top:543px;width:1570px;height:1px;background:#fff"></div>
<svg style="left:621px;top:549px;" width="24" height="24" viewBox="0 0 24 24"><path d="M4.5 0.5h12l5 5v16.5h-17z" fill="#fff" stroke="#7f9fd0"/><path d="M16.5 0.5v5h5" fill="#d8e4f6" stroke="#7f9fd0"/><path d="M7 4h7M7 7h12M7 9.5h12M7 12h12M7 14.5h12M7 17h12M7 19.5h12" stroke="#c0c6d0" stroke-width="1"/><path d="M0.5 10h12l2 2v11h-14z" fill="#a8a8a8"/><rect x="2.5" y="11" width="9" height="5.5" fill="#e8e8e8"/><rect x="4" y="18.5" width="6" height="3.5" fill="#e0e0e0"/></svg>
<svg style="left:650px;top:549px;" width="24" height="24" viewBox="0 0 24 24"><path d="M4.5 0.5h12l5 5v16.5h-17z" fill="#fff" stroke="#7f9fd0"/><path d="M16.5 0.5v5h5" fill="#d8e4f6" stroke="#7f9fd0"/><path d="M7 4h7M7 7h12M7 9.5h12M7 12h12M7 14.5h12M7 17h12M7 19.5h12" stroke="#c0c6d0" stroke-width="1"/><path d="M0.5 15l8-6 9 6.5-8 6z" fill="#2f8a86" stroke="#0c3030" stroke-width=".9"/><path d="M0.5 15v2.5l9 6v-2.5z" fill="#fff" stroke="#0c3030" stroke-width=".7"/><path d="M9.5 21v2.5l8-6v-2z" fill="#1f5a58" stroke="#0c3030" stroke-width=".7"/><path d="M3.5 13.5h8l3 3v5.5h-11z" fill="#fff" stroke="#7f9fd0"/><path d="M14 19h5l-2.5 3z" fill="#e00000"/></svg>
<svg style="left:676px;top:549px;" width="24" height="24" viewBox="0 0 24 24"><path d="M4.5 0.5h12l5 5v16.5h-17z" fill="#fff" stroke="#7f9fd0"/><path d="M16.5 0.5v5h5" fill="#d8e4f6" stroke="#7f9fd0"/><path d="M7 4h7M7 7h12M7 9.5h12M7 12h12M7 14.5h12M7 17h12M7 19.5h12" stroke="#c0c6d0" stroke-width="1"/><rect x="1.2" y="2.2" width="12.6" height="12.6" fill="#fff" stroke="#0808b0" stroke-width="2.4"/><text x="7.5" y="12.3" font-size="10.5" font-weight="bold" fill="#000060" text-anchor="middle" font-family="Liberation Sans">М</text></svg>
<svg style="left:704px;top:549px;" width="24" height="24" viewBox="0 0 24 24"><path d="M4.5 0.5h12l5 5v16.5h-17z" fill="#fff" stroke="#7f9fd0"/><path d="M16.5 0.5v5h5" fill="#d8e4f6" stroke="#7f9fd0"/><path d="M7 4h7M7 7h12M7 9.5h12M7 12h12M7 14.5h12M7 17h12M7 19.5h12" stroke="#c0c6d0" stroke-width="1"/><rect x="1.2" y="2.2" width="12.6" height="12.6" fill="#fff" stroke="#0808b0" stroke-width="2.4"/><text x="7.5" y="12.3" font-size="10.5" font-weight="bold" fill="#000060" text-anchor="middle" font-family="Liberation Sans">Р</text><path d="M16 19.5h5l-2.5 3z" fill="#e00000"/></svg>
<svg style="left:732px;top:549px;" width="24" height="24" viewBox="0 0 24 24"><path d="M4.5 0.5h12l5 5v16.5h-17z" fill="#fff" stroke="#7f9fd0"/><path d="M16.5 0.5v5h5" fill="#d8e4f6" stroke="#7f9fd0"/><path d="M7 4h7M7 7h12M7 9.5h12M7 12h12M7 14.5h12M7 17h12M7 19.5h12" stroke="#c0c6d0" stroke-width="1"/><rect x="1.2" y="2.2" width="12.6" height="12.6" fill="#fff" stroke="#0808b0" stroke-width="2.4"/><text x="7.5" y="12.3" font-size="10.5" font-weight="bold" fill="#000060" text-anchor="middle" font-family="Liberation Sans">К</text><path d="M16 19.5h5l-2.5 3z" fill="#e00000"/></svg>
<svg style="left:760px;top:549px;" width="24" height="24" viewBox="0 0 24 24"><path d="M4.5 0.5h12l5 5v16.5h-17z" fill="#fff" stroke="#7f9fd0"/><path d="M16.5 0.5v5h5" fill="#d8e4f6" stroke="#7f9fd0"/><path d="M7 4h7M7 7h12M7 9.5h12M7 12h12M7 14.5h12M7 17h12M7 19.5h12" stroke="#c0c6d0" stroke-width="1"/><rect x="1.2" y="2.2" width="12.6" height="12.6" fill="#fff" stroke="#0808b0" stroke-width="2.4"/><text x="7.5" y="12.3" font-size="10.5" font-weight="bold" fill="#000060" text-anchor="middle" font-family="Liberation Sans">П</text><path d="M16 19.5h5l-2.5 3z" fill="#e00000"/></svg>
<svg style="left:791px;top:549px;" width="24" height="24" viewBox="0 0 24 24"><path d="M4.5 0.5h12l5 5v16.5h-17z" fill="#fff" stroke="#7f9fd0"/><path d="M16.5 0.5v5h5" fill="#d8e4f6" stroke="#7f9fd0"/><path d="M7 4h7M7 7h12M7 9.5h12M7 12h12M7 14.5h12M7 17h12M7 19.5h12" stroke="#c0c6d0" stroke-width="1"/><path d="M7 6l6-2v17l-6 2z" fill="#c8b848" stroke="#303000" stroke-width=".8"/><path d="M0.5 13h4v-3l4.5 4.5-4.5 4.5v-3h-4z" fill="#f04020" stroke="#900" stroke-width=".6"/></svg>
<div style="left:537px;top:578px;width:1650px;height:606px;background:#f0f0f0;border-left:1px solid #a0a0a0;box-sizing:border-box;box-shadow:inset 1px 0 0 #fff"></div>
<div style="left:537px;top:578px;width:1650px;height:27px;background:#0078d7"></div>
<svg style="left:545px;top:582px" width="17" height="18" viewBox="0 0 17 18"><path d="M0.5 12L2 10.5L5 9.5L7 10L7.5 4L9 2L11 1L13 2L14 4L15.5 5L14.5 7L16 8.5L14.5 11L15 14L13.5 16L12 17.5H6L4 16.5L1.5 17L0.3 15.5L1 14z" fill="#078407" stroke="#000" stroke-width="1"/><rect x="0.5" y="1" width="7" height="5" fill="#a8c8f0" stroke="#4a8a8a" stroke-width=".9"/><path d="M3 6.5h3v1h-3z" fill="#c0a0d0"/><path d="M6.5 17.5L8.2 7.5H12.3L14 17.5z" fill="#fff"/><path d="M10.25 8.5V16.5" stroke="#078407" stroke-width="1"/><ellipse cx="8.9" cy="5.2" rx=".9" ry="1.7" fill="#fff"/><ellipse cx="11.6" cy="5.2" rx=".9" ry="1.7" fill="#fff"/></svg>
<div class="t" style="left:566px;top:583px;font-size:11px;color:#fff;line-height:16px;">Редактирование сметы (НРР-2022, цены на 01.10.2022)</div>
<svg style="left:2092px;top:585px" width="12" height="12" viewBox="0 0 12 12"><path d="M1 6.5h10" stroke="#fff" stroke-width="1"/></svg>
<svg style="left:2129px;top:585px" width="12" height="12" viewBox="0 0 12 12"><rect x="1.5" y="1.5" width="9" height="9" fill="none" stroke="#fff" stroke-width="1"/></svg>
<svg style="left:2166px;top:585px" width="13" height="13" viewBox="0 0 13 13"><path d="M1 1l11 11M12 1l-11 11" stroke="#fff" stroke-width="1.1"/></svg>
<svg style="left:542px;top:610px;" width="24" height="24" viewBox="0 0 24 24"><path d="M4.5 0.5h12l5 5v16.5h-17z" fill="#fff" stroke="#7f9fd0"/><path d="M16.5 0.5v5h5" fill="#d8e4f6" stroke="#7f9fd0"/><path d="M7 4h7M7 7h12M7 9.5h12M7 12h12M7 14.5h12M7 17h12M7 19.5h12" stroke="#c0c6d0" stroke-width="1"/><path d="M0.5 10h12l2 2v11h-14z" fill="#1828c0" stroke="#000070" stroke-width=".6"/><rect x="2.5" y="11" width="9" height="5.5" fill="#fff"/><rect x="2.5" y="11" width="9" height="1.5" fill="#e02020"/><rect x="4" y="18.5" width="6" height="3.5" fill="#d0d0d0"/></svg>
<div style="left:571px;top:611px;width:1px;height:26px;background:#a0a0a0"></div>
<div style="left:572px;top:611px;width:1px;height:26px;background:#ffffff"></div>
<svg style="left:575px;top:610px;" width="24" height="24" viewBox="0 0 24 24"><path d="M4.5 0.5h12l5 5v16.5h-17z" fill="#fff" stroke="#7f9fd0"/><path d="M16.5 0.5v5h5" fill="#d8e4f6" stroke="#7f9fd0"/><path d="M7 4h7M7 7h12M7 9.5h12M7 12h12M7 14.5h12M7 17h12M7 19.5h12" stroke="#c0c6d0" stroke-width="1"/><rect x="1.2" y="2.2" width="12.6" height="12.6" fill="#fff" stroke="#0808b0" stroke-width="2.4"/><text x="7.5" y="12.3" font-size="10.5" font-weight="bold" fill="#000060" text-anchor="middle" font-family="Liberation Sans">Л</text></svg>
<svg style="left:604px;top:610px;" width="24" height="24" viewBox="0 0 24 24"><path d="M4.5 0.5h12l5 5v16.5h-17z" fill="#fff" stroke="#7f9fd0"/><path d="M16.5 0.5v5h5" fill="#d8e4f6" stroke="#7f9fd0"/><path d="M7 4h7M7 7h12M7 9.5h12M7 12h12M7 14.5h12M7 17h12M7 19.5h12" stroke="#c0c6d0" stroke-width="1"/><rect x="1.2" y="2.2" width="12.6" height="12.6" fill="#fff" stroke="#0808b0" stroke-width="2.4"/><text x="7.5" y="12.3" font-size="10.5" font-weight="bold" fill="#000060" text-anchor="middle" font-family="Liberation Sans">Р</text></svg>
<svg style="left:632px;top:610px;" width="24" height="24" viewBox="0 0 24 24"><path d="M4.5 0.5h12l5 5v16.5h-17z" fill="#fff" stroke="#7f9fd0"/><path d="M16.5 0.5v5h5" fill="#d8e4f6" stroke="#7f9fd0"/><path d="M7 4h7M7 7h12M7 9.5h12M7 12h12M7 14.5h12M7 17h12M7 19.5h12" stroke="#c0c6d0" stroke-width="1"/><rect x="1.2" y="2.2" width="12.6" height="12.6" fill="#fff" stroke="#0808b0" stroke-width="2.4"/><text x="7.5" y="12.3" font-size="10.5" font-weight="bold" fill="#000060" text-anchor="middle" font-family="Liberation Sans">В</text></svg>
<div style="left:663px;top:611px;width:1px;height:26px;background:#a0a0a0"></div>
<div style="left:664px;top:611px;width:1px;height:26px;background:#ffffff"></div>
<svg style="left:668px;top:610px;" width="24" height="24" viewBox="0 0 24 24"><path d="M4.5 0.5h12l5 5v16.5h-17z" fill="#fff" stroke="#7f9fd0"/><path d="M16.5 0.5v5h5" fill="#d8e4f6" stroke="#7f9fd0"/><path d="M7 4h7M7 7h12M7 9.5h12M7 12h12M7 14.5h12M7 17h12M7 19.5h12" stroke="#c0c6d0" stroke-width="1"/><rect x="1.2" y="2.2" width="12.6" height="12.6" fill="#fff" stroke="#0808b0" stroke-width="2.4"/><text x="7.5" y="12.3" font-size="10.5" font-weight="bold" fill="#000060" text-anchor="middle" font-family="Liberation Sans">К</text></svg>
<svg style="left:696px;top:610px;" width="24" height="24" viewBox="0 0 24 24"><path d="M4.5 0.5h12l5 5v16.5h-17z" fill="#fff" stroke="#7f9fd0"/><path d="M16.5 0.5v5h5" fill="#d8e4f6" stroke="#7f9fd0"/><path d="M7 4h7M7 7h12M7 9.5h12M7 12h12M7 14.5h12M7 17h12M7 19.5h12" stroke="#c0c6d0" stroke-width="1"/><rect x="1.2" y="2.2" width="12.6" height="12.6" fill="#fff" stroke="#0808b0" stroke-width="2.4"/><text x="7.5" y="12.3" font-size="10.5" font-weight="bold" fill="#000060" text-anchor="middle" font-family="Liberation Sans">Т</text></svg>
<div style="left:727px;top:611px;width:1px;height:26px;background:#a0a0a0"></div>
<div style="left:728px;top:611px;width:1px;height:26px;background:#ffffff"></div>
<svg style="left:734px;top:610px;" width="24" height="24" viewBox="0 0 24 24"><path d="M4.5 0.5h12l5 5v16.5h-17z" fill="#fff" stroke="#7f9fd0"/><path d="M16.5 0.5v5h5" fill="#d8e4f6" stroke="#7f9fd0"/><path d="M7 4h7M7 7h12M7 9.5h12M7 12h12M7 14.5h12M7 17h12M7 19.5h12" stroke="#c0c6d0" stroke-width="1"/><path d="M1 22.5v-6l2.5-6h3l1 5h2l1-5h3l2.5 6v6h-5.5v-4h-3v4z" fill="#0a0a0a"/><rect x="2" y="8" width="3.5" height="3" fill="#0a0a0a"/><rect x="10.5" y="8" width="3.5" height="3" fill="#0a0a0a"/><path d="M2.5 17v3M11 17v3" stroke="#fff" stroke-width="1"/></svg>
<svg style="left:763px;top:610px;" width="24" height="24" viewBox="0 0 24 24"><path d="M4.5 0.5h12l5 5v16.5h-17z" fill="#fff" stroke="#7f9fd0"/><path d="M16.5 0.5v5h5" fill="#d8e4f6" stroke="#7f9fd0"/><path d="M7 4h7M7 7h12M7 9.5h12M7 12h12M7 14.5h12M7 17h12M7 19.5h12" stroke="#c0c6d0" stroke-width="1"/><path d="M0.5 15l8-6 9 6.5-8 6z" fill="#2f8a86" stroke="#0c3030" stroke-width=".9"/><path d="M0.5 15v2.5l9 6v-2.5z" fill="#fff" stroke="#0c3030" stroke-width=".7"/><path d="M9.5 21v2.5l8-6v-2z" fill="#1f5a58" stroke="#0c3030" stroke-width=".7"/></svg>
<svg style="left:790px;top:610px;" width="24" height="24" viewBox="0 0 24 24"><path d="M4.5 0.5h12l5 5v16.5h-17z" fill="#fff" stroke="#7f9fd0"/><path d="M16.5 0.5v5h5" fill="#d8e4f6" stroke="#7f9fd0"/><path d="M7 4h7M7 7h12M7 9.5h12M7 12h12M7 14.5h12M7 17h12M7 19.5h12" stroke="#c0c6d0" stroke-width="1"/><text x="1" y="21" font-size="13" font-weight="bold" fill="#e04020" font-family="Liberation Sans">M</text></svg>
<div style="left:818px;top:611px;width:1px;height:26px;background:#a0a0a0"></div>
<div style="left:819px;top:611px;width:1px;height:26px;background:#ffffff"></div>
<svg style="left:826px;top:610px;" width="24" height="24" viewBox="0 0 24 24"><path d="M4.5 0.5h12l5 5v16.5h-17z" fill="#fff" stroke="#7f9fd0"/><path d="M16.5 0.5v5h5" fill="#d8e4f6" stroke="#7f9fd0"/><path d="M7 4h7M7 7h12M7 9.5h12M7 12h12M7 14.5h12M7 17h12M7 19.5h12" stroke="#c0c6d0" stroke-width="1"/><path d="M7 6l6-2v17l-6 2z" fill="#c8b848" stroke="#303000" stroke-width=".8"/><path d="M0.5 13h4v-3l4.5 4.5-4.5 4.5v-3h-4z" fill="#f04020" stroke="#900" stroke-width=".6"/></svg>
<div class="t" style="left:859px;top:613px;font-size:16px;color:#000;line-height:20px;-webkit-text-stroke:0.2px #fff;letter-spacing:0.139px;">Стоимость человеко-часа рабочего 4-го разряда: 8.2 руб. / 9.8 руб.</div>
<div style="left:538px;top:636px;width:1649px;height:1px;background:#a0a0a0"></div>
<div style="left:538px;top:637px;width:1649px;height:1px;background:#fff"></div>
<div style="left:539px;top:645px;width:975px;height:540px;border:1px solid #a0a0a0;border-bottom:none;box-sizing:border-box;box-shadow:inset 1px 1px 0 #fff"></div>
<div style="left:543px;top:637px;width:210px;height:16px;background:#f0f0f0"></div>
<div class="t" style="left:545px;top:637px;font-size:14px;color:#000;line-height:18px;font-weight:bold;letter-spacing:0.54px">Ввод и редактирование НРР</div>
<svg style="left:1497px;top:631px;" width="24" height="24" viewBox="0 0 24 24"><path d="M1 22.5v-6l2.5-6h3l1 5h2l1-5h3l2.5 6v6h-5.5v-4h-3v4z" fill="#0a0a0a"/><rect x="2" y="8" width="3.5" height="3" fill="#0a0a0a"/><rect x="10.5" y="8" width="3.5" height="3" fill="#0a0a0a"/><path d="M2.5 17v3M11 17v3" stroke="#fff" stroke-width="1"/></svg>
<svg style="left:544px;top:664px;" width="24" height="24" viewBox="0 0 24 24"><path d="M4.5 0.5h12l5 5v16.5h-17z" fill="#fff" stroke="#7f9fd0"/><path d="M16.5 0.5v5h5" fill="#d8e4f6" stroke="#7f9fd0"/><path d="M7 4h7M7 7h12M7 9.5h12M7 12h12M7 14.5h12M7 17h12M7 19.5h12" stroke="#c0c6d0" stroke-width="1"/><path d="M4 9h4v4h4v4h-4v4h-4v-4h-4v-4h4z" fill="#58d830" stroke="#185800" stroke-width="1"/></svg>
<svg style="left:576px;top:664px;" width="24" height="24" viewBox="0 0 24 24"><path d="M4.5 0.5h12l5 5v16.5h-17z" fill="#fff" stroke="#7f9fd0"/><path d="M16.5 0.5v5h5" fill="#d8e4f6" stroke="#7f9fd0"/><path d="M7 4h7M7 7h12M7 9.5h12M7 12h12M7 14.5h12M7 17h12M7 19.5h12" stroke="#c0c6d0" stroke-width="1"/><path d="M1 12l3-2 3 3 3-3 3 2-3.5 4 3.5 4-3 2-3-3-3 3-3-2 3.5-4z" fill="#f0541c" stroke="#701800" stroke-width=".8"/></svg>
<div style="left:605px;top:663px;width:1px;height:30px;background:#a0a0a0"></div>
<div style="left:606px;top:663px;width:1px;height:30px;background:#ffffff"></div>
<svg style="left:613px;top:664px;" width="24" height="24" viewBox="0 0 24 24"><path d="M4.5 0.5h12l5 5v16.5h-17z" fill="#fff" stroke="#7f9fd0"/><path d="M16.5 0.5v5h5" fill="#d8e4f6" stroke="#7f9fd0"/><path d="M7 4h7M7 7h12M7 9.5h12M7 12h12M7 14.5h12M7 17h12M7 19.5h12" stroke="#c0c6d0" stroke-width="1"/><path d="M2.5 3.5h10l4 4v14.5h-14z" fill="#fff" stroke="#7f9fd0"/><path d="M5 9h9M5 12h9M5 15h9M5 18h9" stroke="#c0c6d0"/></svg>
<svg style="left:644px;top:664px;" width="24" height="24" viewBox="0 0 24 24"><path d="M4.5 0.5h12l5 5v16.5h-17z" fill="#fff" stroke="#7f9fd0"/><path d="M16.5 0.5v5h5" fill="#d8e4f6" stroke="#7f9fd0"/><path d="M7 4h7M7 7h12M7 9.5h12M7 12h12M7 14.5h12M7 17h12M7 19.5h12" stroke="#c0c6d0" stroke-width="1"/><path d="M2 10l10 9M12 10l-10 9" stroke="#8090c0" stroke-width="1.5"/></svg>
<svg style="left:676px;top:664px;" width="24" height="24" viewBox="0 0 24 24"><path d="M4.5 0.5h12l5 5v16.5h-17z" fill="#fff" stroke="#7f9fd0"/><path d="M16.5 0.5v5h5" fill="#d8e4f6" stroke="#7f9fd0"/><path d="M7 4h7M7 7h12M7 9.5h12M7 12h12M7 14.5h12M7 17h12M7 19.5h12" stroke="#c0c6d0" stroke-width="1"/><path d="M1.5 6.5h13v15.5h-13z" fill="#e8e8e8" stroke="#b8b8b8"/><path d="M5 4.5h6v3h-6z" fill="#f4f4f4" stroke="#b8b8b8"/></svg>
<svg style="left:702px;top:674px" width="9" height="5" viewBox="0 0 9 5"><path d="M0 0h9l-4.5 4.5z" fill="#a0a0a0"/></svg>
<svg style="left:719px;top:664px;" width="24" height="24" viewBox="0 0 24 24"><path d="M4.5 0.5h12l5 5v16.5h-17z" fill="#fff" stroke="#7f9fd0"/><path d="M16.5 0.5v5h5" fill="#d8e4f6" stroke="#7f9fd0"/><path d="M7 4h7M7 7h12M7 9.5h12M7 12h12M7 14.5h12M7 17h12M7 19.5h12" stroke="#c0c6d0" stroke-width="1"/><path d="M0.5 12h13v7h-8l-3 3v-3h-2z" fill="#fff8c0" stroke="#b0b080"/></svg>
<svg style="left:749px;top:664px;" width="24" height="24" viewBox="0 0 24 24"><path d="M4.5 0.5h12l5 5v16.5h-17z" fill="#fff" stroke="#7f9fd0"/><path d="M16.5 0.5v5h5" fill="#d8e4f6" stroke="#7f9fd0"/><path d="M7 4h7M7 7h12M7 9.5h12M7 12h12M7 14.5h12M7 17h12M7 19.5h12" stroke="#c0c6d0" stroke-width="1"/><circle cx="8" cy="15" r="7" fill="#e88a58"/><path d="M8 15v-7a7 7 0 0 1 7 7z" fill="#ecd098"/><path d="M8 15h7a7 7 0 0 1-4 6.4z" fill="#84b4a0"/><path d="M8 15l3 6.4a7 7 0 0 1-6 0z" fill="#5894d4"/></svg>
<svg style="left:781px;top:664px;" width="24" height="24" viewBox="0 0 24 24"><path d="M4.5 0.5h12l5 5v16.5h-17z" fill="#fff" stroke="#7f9fd0"/><path d="M16.5 0.5v5h5" fill="#d8e4f6" stroke="#7f9fd0"/><path d="M7 4h7M7 7h12M7 9.5h12M7 12h12M7 14.5h12M7 17h12M7 19.5h12" stroke="#c0c6d0" stroke-width="1"/><path d="M8.00 9.00L9.37 9.13L9.99 11.20L10.89 11.68L12.95 11.05L13.82 12.11L12.80 14.01L13.10 14.99L15.00 16.00L14.87 17.37L12.80 17.99L12.32 18.89L12.95 20.95L11.89 21.82L9.99 20.80L9.01 21.10L8.00 23.00L6.63 22.87L6.01 20.80L5.11 20.32L3.05 20.95L2.18 19.89L3.20 17.99L2.90 17.01L1.00 16.00L1.13 14.63L3.20 14.01L3.68 13.11L3.05 11.05L4.11 10.18L6.01 11.20L6.99 10.90z" fill="#f0e818" stroke="#303000" stroke-width="1"/><circle cx="8" cy="16" r="2.2" fill="#b0b060"/><path d="M5.5 9.5h5v6.5a2.5 1.2 0 0 1-5 0z" fill="#e0e0e0" stroke="#404040" stroke-width=".8"/><ellipse cx="8" cy="9.5" rx="2.5" ry="1.1" fill="#fff" stroke="#404040" stroke-width=".8"/></svg>
<div style="left:810px;top:663px;width:1px;height:30px;background:#a0a0a0"></div>
<div style="left:811px;top:663px;width:1px;height:30px;background:#ffffff"></div>
<svg style="left:817px;top:664px" width="24" height="24" viewBox="0 0 24 24"><rect x="9.5" y="6.5" width="11" height="10" fill="#f0f0f0" stroke="#404040" stroke-width="1.4"/><rect x="10" y="10" width="10" height="3" fill="#a098e8"/><path d="M3 17v-5h-2.5l4-5 4 5h-2.5v5z" fill="#80e040" stroke="#2040e0" stroke-width=".8"/></svg>
<svg style="left:848px;top:664px" width="24" height="24" viewBox="0 0 24 24"><rect x="9.5" y="6.5" width="11" height="10" fill="#f0f0f0" stroke="#404040" stroke-width="1.4"/><rect x="10" y="10" width="10" height="3" fill="#a098e8"/><path d="M3 6v5h-2.5l4 5 4-5h-2.5v-5z" fill="#80e040" stroke="#2040e0" stroke-width=".8"/></svg>
<svg style="left:877px;top:664px" width="24" height="24" viewBox="0 0 24 24"><path d="M1 9h4v-3l5 6-5 6v-3h-4z" fill="#80e040" stroke="#2040e0" stroke-width=".8"/><rect x="10.5" y="2.5" width="9" height="19" rx="3" fill="#fff" stroke="#404040"/><text x="11.5" y="13" font-size="7" font-family="Liberation Sans">№</text></svg>
<svg style="left:910px;top:664px" width="24" height="24" viewBox="0 0 24 24"><rect x="1.5" y="6.5" width="10" height="10" fill="#f0f0f0" stroke="#404040" stroke-width="1.4"/><rect x="2" y="10" width="9" height="3" fill="#a098e8"/><path d="M13 18l1-4 5-6 2 2-5 6z" fill="#f0d020" stroke="#404040" stroke-width=".6"/></svg>
<div style="left:939px;top:663px;width:1px;height:30px;background:#a0a0a0"></div>
<div style="left:940px;top:663px;width:1px;height:30px;background:#ffffff"></div>
<svg style="left:945px;top:666px" width="24" height="21" viewBox="0 0 24 21"><rect x="1" y="0.5" width="13.5" height="19.5" fill="#f4f4f4" stroke="#404040" stroke-width="1.3"/><rect x="1.5" y="6.5" width="12.5" height="6.5" fill="#a098e8"/><path d="M1 6.5h13.5M1 13h13.5" stroke="#404040" stroke-width="1.2"/><text x="15" y="9" font-size="10" font-weight="bold" fill="#6a50f0" font-family="Liberation Sans">0</text><path d="M15 11.5h6" stroke="#e02020" stroke-width="1.3"/></svg>
<svg style="left:975px;top:674px" width="8" height="5" viewBox="0 0 8 5"><path d="M0 0h8l-4 4z" fill="#000"/></svg>
<div style="left:988px;top:663px;width:1px;height:30px;background:#a0a0a0"></div>
<div style="left:989px;top:663px;width:1px;height:30px;background:#ffffff"></div>
<svg style="left:993px;top:664px" width="28" height="26" viewBox="0 0 28 26"><text x="1" y="13" font-size="16" font-weight="bold" fill="#f04468" font-family="Liberation Serif">Н</text><text x="8" y="24" font-size="16" font-weight="bold" fill="#f04468" font-family="Liberation Serif">M</text></svg>
<div style="left:539px;top:693px;width:973px;height:1px;background:#a0a0a0"></div>
<div style="left:539px;top:693px;width:971px;height:488px;background:#fff;border:1px solid #a0a0a0;box-sizing:border-box"></div>
<div style="left:540px;top:694px;width:953px;height:105px;background:#f0f0f0"></div>
<div style="left:540px;top:799px;width:953px;height:1px;background:#a0a0a0"></div>
<div style="left:609px;top:697px;width:1px;height:101px;background:#a0a0a0"></div>
<div style="left:814px;top:697px;width:1px;height:101px;background:#a0a0a0"></div>
<div style="left:1194px;top:697px;width:1px;height:101px;background:#a0a0a0"></div>
<div style="left:1264px;top:697px;width:1px;height:101px;background:#a0a0a0"></div>
<div style="left:1371px;top:697px;width:1px;height:101px;background:#a0a0a0"></div>
<div style="left:1461px;top:697px;width:1px;height:101px;background:#a0a0a0"></div>
<div class="t" style="left:543px;top:698px;font-size:16px;color:#000;line-height:20px;-webkit-text-stroke:0.2px #fff;letter-spacing:0.07px;">№ п/п</div>
<div class="t" style="left:612px;top:698px;font-size:16px;color:#000;line-height:20px;-webkit-text-stroke:0.2px #fff;letter-spacing:0.25px;">Обоснование</div>
<div class="t" style="left:817px;top:698px;font-size:16px;color:#000;line-height:20px;-webkit-text-stroke:0.2px #fff;letter-spacing:0.25px;">Наименование</div>
<div class="t" style="left:1197px;top:698px;font-size:16px;color:#000;line-height:20px;-webkit-text-stroke:0.2px #fff;letter-spacing:0.25px;">Единиц<br>а<br>измерен<br>ия</div>
<div class="t" style="left:1267px;top:698px;font-size:16px;color:#000;line-height:20px;-webkit-text-stroke:0.2px #fff;letter-spacing:0.183px;">Кол-во</div>
<div class="t" style="left:1374px;top:698px;font-size:16px;color:#000;line-height:20px;-webkit-text-stroke:0.2px #fff;letter-spacing:0.25px;">Формула</div>
<div class="t" style="left:1464px;top:698px;font-size:16px;color:#000;width:29px;overflow:hidden;line-height:20px;-webkit-text-stroke:0.2px #fff;letter-spacing:0.25px;">ОХР<br>ОПР</div>
<div style="left:540px;top:800px;width:953px;height:363px;overflow:hidden">
<div style="left:0px;top:0px;width:69px;height:25px;background:#fff"></div>
<div class="t" style="left:3px;top:4px;font-size:16px;color:#000;width:64px;overflow:hidden;line-height:20px;-webkit-text-stroke:0.2px #fff;letter-spacing:-0.15px;">7</div>
<div style="left:70px;top:0px;width:204px;height:25px;background:#fff"></div>
<div class="t" style="left:73px;top:4px;font-size:16px;color:#000;width:199px;overflow:hidden;line-height:20px;-webkit-text-stroke:0.2px #fff;letter-spacing:-0.1px;">E30-55-2</div>
<div style="left:275px;top:0px;width:379px;height:25px;background:#fff"></div>
<div class="t" style="left:278px;top:4px;font-size:16px;color:#000;width:374px;overflow:hidden;line-height:20px;-webkit-text-stroke:0.2px #fff;letter-spacing:0.23px;">УКЛАДКА ЗВЕНЬЕВ УДЛИНЯЕМЫХ ОДНООЧКОВЫХ</div>
<div style="left:655px;top:0px;width:69px;height:25px;background:#fff"></div>
<div class="t" style="left:658px;top:4px;font-size:16px;color:#000;width:64px;overflow:hidden;line-height:20px;-webkit-text-stroke:0.2px #fff;letter-spacing:0.185px;">М3 ЖЕЛЕЗОБ</div>
<div style="left:725px;top:0px;width:106px;height:25px;background:#fff"></div>
<div class="t" style="left:725px;top:4px;font-size:16px;color:#000;width:103px;overflow:hidden;line-height:20px;-webkit-text-stroke:0.2px #fff;letter-spacing:-0.15px;text-align:right;">1,34</div>
<div style="left:832px;top:0px;width:89px;height:25px;background:#fff"></div>
<div style="left:922px;top:0px;width:40px;height:25px;background:#fff"></div>
<div class="t" style="left:922px;top:4px;font-size:16px;color:#000;width:37px;overflow:hidden;line-height:20px;-webkit-text-stroke:0.2px #fff;letter-spacing:-0.15px;text-align:right;">6</div>
<div style="left:0px;top:24px;width:962px;height:1px;background:#a0a0a0"></div>
<div style="left:0px;top:25px;width:69px;height:25px;background:#fff"></div>
<div class="t" style="left:3px;top:29px;font-size:16px;color:#000;width:64px;overflow:hidden;line-height:20px;-webkit-text-stroke:0.2px #fff;letter-spacing:-0.15px;">8</div>
<div style="left:70px;top:25px;width:204px;height:25px;background:#fff"></div>
<div class="t" style="left:73px;top:29px;font-size:16px;color:#000;width:199px;overflow:hidden;line-height:20px;-webkit-text-stroke:0.2px #fff;letter-spacing:-0.15px;">7/5-120-20/10</div>
<div style="left:275px;top:25px;width:379px;height:25px;background:#fff"></div>
<div class="t" style="left:278px;top:29px;font-size:16px;color:#000;width:374px;overflow:hidden;line-height:20px;-webkit-text-stroke:0.2px #fff;letter-spacing:0.173px;">ЦЕМЕНТНЫЙ РАСТВОР М200</div>
<div style="left:655px;top:25px;width:69px;height:25px;background:#fff"></div>
<div class="t" style="left:658px;top:29px;font-size:16px;color:#000;width:64px;overflow:hidden;line-height:20px;-webkit-text-stroke:0.2px #fff;letter-spacing:0.05px;">М3</div>
<div style="left:725px;top:25px;width:106px;height:25px;background:#fff"></div>
<div class="t" style="left:725px;top:29px;font-size:16px;color:#000;width:103px;overflow:hidden;line-height:20px;-webkit-text-stroke:0.2px #fff;letter-spacing:-0.15px;text-align:right;">0,067</div>
<div style="left:832px;top:25px;width:89px;height:25px;background:#fff"></div>
<div style="left:922px;top:25px;width:40px;height:25px;background:#fff"></div>
<div style="left:0px;top:49px;width:962px;height:1px;background:#a0a0a0"></div>
<div style="left:0px;top:50px;width:69px;height:25px;background:#fff"></div>
<div class="t" style="left:3px;top:54px;font-size:16px;color:#000;width:64px;overflow:hidden;line-height:20px;-webkit-text-stroke:0.2px #fff;letter-spacing:-0.15px;">9</div>
<div style="left:70px;top:50px;width:204px;height:25px;background:#fff"></div>
<div class="t" style="left:73px;top:54px;font-size:16px;color:#000;width:199px;overflow:hidden;line-height:20px;-webkit-text-stroke:0.2px #fff;letter-spacing:-0.15px;">7/2-40-40/50</div>
<div style="left:275px;top:50px;width:379px;height:25px;background:#fff"></div>
<div class="t" style="left:278px;top:54px;font-size:16px;color:#000;width:374px;overflow:hidden;line-height:20px;-webkit-text-stroke:0.2px #fff;letter-spacing:0.215px;">Ж/Б ТРУБЫ БЕЗНАПОРНЫЕ ДЛЯ ВОДОПРОПУСКНЫХ</div>
<div style="left:655px;top:50px;width:69px;height:25px;background:#fff"></div>
<div class="t" style="left:658px;top:54px;font-size:16px;color:#000;width:64px;overflow:hidden;line-height:20px;-webkit-text-stroke:0.2px #fff;letter-spacing:0.25px;">ШТ</div>
<div style="left:725px;top:50px;width:106px;height:25px;background:#fff"></div>
<div class="t" style="left:725px;top:54px;font-size:16px;color:#000;width:103px;overflow:hidden;line-height:20px;-webkit-text-stroke:0.2px #fff;letter-spacing:-0.15px;text-align:right;">2</div>
<div style="left:832px;top:50px;width:89px;height:25px;background:#fff"></div>
<div style="left:922px;top:50px;width:40px;height:25px;background:#fff"></div>
<div style="left:0px;top:74px;width:962px;height:1px;background:#a0a0a0"></div>
<div style="left:0px;top:75px;width:69px;height:25px;background:#fff"></div>
<div class="t" style="left:3px;top:79px;font-size:16px;color:#000;width:64px;overflow:hidden;line-height:20px;-webkit-text-stroke:0.2px #fff;letter-spacing:-0.15px;">10</div>
<div style="left:70px;top:75px;width:204px;height:25px;background:#fff"></div>
<div class="t" style="left:73px;top:79px;font-size:16px;color:#000;width:199px;overflow:hidden;line-height:20px;-webkit-text-stroke:0.2px #fff;letter-spacing:-0.1px;">E30-55-3</div>
<div style="left:275px;top:75px;width:379px;height:25px;background:#fff"></div>
<div class="t" style="left:278px;top:79px;font-size:16px;color:#000;width:374px;overflow:hidden;line-height:20px;-webkit-text-stroke:0.2px #fff;letter-spacing:0.23px;">УКЛАДКА ЗВЕНЬЕВ УДЛИНЯЕМЫХ ОДНООЧКОВЫХ</div>
<div style="left:655px;top:75px;width:69px;height:25px;background:#fff"></div>
<div class="t" style="left:658px;top:79px;font-size:16px;color:#000;width:64px;overflow:hidden;line-height:20px;-webkit-text-stroke:0.2px #fff;letter-spacing:0.185px;">М3 ЖЕЛЕЗОБ</div>
<div style="left:725px;top:75px;width:106px;height:25px;background:#fff"></div>
<div class="t" style="left:725px;top:79px;font-size:16px;color:#000;width:103px;overflow:hidden;line-height:20px;-webkit-text-stroke:0.2px #fff;letter-spacing:-0.15px;text-align:right;">2,2</div>
<div style="left:832px;top:75px;width:89px;height:25px;background:#fff"></div>
<div style="left:922px;top:75px;width:40px;height:25px;background:#fff"></div>
<div class="t" style="left:922px;top:79px;font-size:16px;color:#000;width:37px;overflow:hidden;line-height:20px;-webkit-text-stroke:0.2px #fff;letter-spacing:-0.15px;text-align:right;">6</div>
<div style="left:0px;top:99px;width:962px;height:1px;background:#a0a0a0"></div>
<div style="left:0px;top:100px;width:69px;height:25px;background:#fff"></div>
<div class="t" style="left:3px;top:104px;font-size:16px;color:#000;width:64px;overflow:hidden;line-height:20px;-webkit-text-stroke:0.2px #fff;letter-spacing:-0.15px;">11</div>
<div style="left:70px;top:100px;width:204px;height:25px;background:#fff"></div>
<div class="t" style="left:73px;top:104px;font-size:16px;color:#000;width:199px;overflow:hidden;line-height:20px;-webkit-text-stroke:0.2px #fff;letter-spacing:-0.15px;">7/5-120-20/10</div>
<div style="left:275px;top:100px;width:379px;height:25px;background:#fff"></div>
<div class="t" style="left:278px;top:104px;font-size:16px;color:#000;width:374px;overflow:hidden;line-height:20px;-webkit-text-stroke:0.2px #fff;letter-spacing:0.173px;">ЦЕМЕНТНЫЙ РАСТВОР М200</div>
<div style="left:655px;top:100px;width:69px;height:25px;background:#fff"></div>
<div class="t" style="left:658px;top:104px;font-size:16px;color:#000;width:64px;overflow:hidden;line-height:20px;-webkit-text-stroke:0.2px #fff;letter-spacing:0.05px;">М3</div>
<div style="left:725px;top:100px;width:106px;height:25px;background:#fff"></div>
<div class="t" style="left:725px;top:104px;font-size:16px;color:#000;width:103px;overflow:hidden;line-height:20px;-webkit-text-stroke:0.2px #fff;letter-spacing:-0.15px;text-align:right;">0,286</div>
<div style="left:832px;top:100px;width:89px;height:25px;background:#fff"></div>
<div style="left:922px;top:100px;width:40px;height:25px;background:#fff"></div>
<div style="left:0px;top:124px;width:962px;height:1px;background:#a0a0a0"></div>
<div style="left:0px;top:125px;width:69px;height:25px;background:#fff"></div>
<div class="t" style="left:3px;top:129px;font-size:16px;color:#000;width:64px;overflow:hidden;line-height:20px;-webkit-text-stroke:0.2px #fff;letter-spacing:-0.15px;">12</div>
<div style="left:70px;top:125px;width:204px;height:25px;background:#fff"></div>
<div class="t" style="left:73px;top:129px;font-size:16px;color:#000;width:199px;overflow:hidden;line-height:20px;-webkit-text-stroke:0.2px #fff;letter-spacing:-0.15px;">7/2-40-40/70</div>
<div style="left:275px;top:125px;width:379px;height:25px;background:#fff"></div>
<div class="t" style="left:278px;top:129px;font-size:16px;color:#000;width:374px;overflow:hidden;line-height:20px;-webkit-text-stroke:0.2px #fff;letter-spacing:0.215px;">Ж/Б ТРУБЫ БЕЗНАПОРНЫЕ ДЛЯ ВОДОПРОПУСКНЫХ</div>
<div style="left:655px;top:125px;width:69px;height:25px;background:#fff"></div>
<div class="t" style="left:658px;top:129px;font-size:16px;color:#000;width:64px;overflow:hidden;line-height:20px;-webkit-text-stroke:0.2px #fff;letter-spacing:0.25px;">ШТ</div>
<div style="left:725px;top:125px;width:106px;height:25px;background:#fff"></div>
<div class="t" style="left:725px;top:129px;font-size:16px;color:#000;width:103px;overflow:hidden;line-height:20px;-webkit-text-stroke:0.2px #fff;letter-spacing:-0.15px;text-align:right;">2</div>
<div style="left:832px;top:125px;width:89px;height:25px;background:#fff"></div>
<div style="left:922px;top:125px;width:40px;height:25px;background:#fff"></div>
<div style="left:0px;top:149px;width:962px;height:1px;background:#a0a0a0"></div>
<div style="left:0px;top:150px;width:69px;height:25px;background:#fff"></div>
<div class="t" style="left:3px;top:154px;font-size:16px;color:#000;width:64px;overflow:hidden;line-height:20px;-webkit-text-stroke:0.2px #fff;letter-spacing:-0.15px;">13</div>
<div style="left:70px;top:150px;width:204px;height:25px;background:#fff"></div>
<div class="t" style="left:73px;top:154px;font-size:16px;color:#000;width:199px;overflow:hidden;line-height:20px;-webkit-text-stroke:0.2px #fff;letter-spacing:-0.106px;">E13-107-4</div>
<div style="left:275px;top:150px;width:379px;height:25px;background:#fff"></div>
<div class="t" style="left:278px;top:154px;font-size:16px;color:#000;width:374px;overflow:hidden;line-height:20px;-webkit-text-stroke:0.2px #fff;letter-spacing:0.209px;">АРМИРОВАНИЕ СТЫКА СУЩ. ТРУБЫ И ВРЕМЕННЫХ</div>
<div style="left:655px;top:150px;width:69px;height:25px;background:#fff"></div>
<div class="t" style="left:658px;top:154px;font-size:16px;color:#000;width:64px;overflow:hidden;line-height:20px;-webkit-text-stroke:0.2px #fff;letter-spacing:0.04px;">100 М2 ГОР</div>
<div style="left:725px;top:150px;width:106px;height:25px;background:#fff"></div>
<div class="t" style="left:725px;top:154px;font-size:16px;color:#000;width:103px;overflow:hidden;line-height:20px;-webkit-text-stroke:0.2px #fff;letter-spacing:-0.15px;text-align:right;">0,12</div>
<div style="left:832px;top:150px;width:89px;height:25px;background:#fff"></div>
<div style="left:922px;top:150px;width:40px;height:25px;background:#fff"></div>
<div class="t" style="left:922px;top:154px;font-size:16px;color:#000;width:37px;overflow:hidden;line-height:20px;-webkit-text-stroke:0.2px #fff;letter-spacing:-0.15px;text-align:right;">6</div>
<div style="left:0px;top:174px;width:962px;height:1px;background:#a0a0a0"></div>
<div style="left:0px;top:175px;width:69px;height:25px;background:#fff"></div>
<div class="t" style="left:3px;top:179px;font-size:16px;color:#000;width:64px;overflow:hidden;line-height:20px;-webkit-text-stroke:0.2px #fff;letter-spacing:-0.15px;">14</div>
<div style="left:70px;top:175px;width:204px;height:25px;background:#fff"></div>
<div class="t" style="left:73px;top:179px;font-size:16px;color:#000;width:199px;overflow:hidden;line-height:20px;-webkit-text-stroke:0.2px #fff;letter-spacing:-0.15px;">7/25-80/10</div>
<div style="left:275px;top:175px;width:379px;height:25px;background:#fff"></div>
<div class="t" style="left:278px;top:179px;font-size:16px;color:#000;width:374px;overflow:hidden;line-height:20px;-webkit-text-stroke:0.2px #fff;letter-spacing:0.236px;">ПОЛОТНО ИГЛОПРОБИВНОЕ ГЕОТЕКСТИЛЬНОЕ</div>
<div style="left:655px;top:175px;width:69px;height:25px;background:#fff"></div>
<div class="t" style="left:658px;top:179px;font-size:16px;color:#000;width:64px;overflow:hidden;line-height:20px;-webkit-text-stroke:0.2px #fff;letter-spacing:0.05px;">М2</div>
<div style="left:725px;top:175px;width:106px;height:25px;background:#fff"></div>
<div class="t" style="left:725px;top:179px;font-size:16px;color:#000;width:103px;overflow:hidden;line-height:20px;-webkit-text-stroke:0.2px #fff;letter-spacing:-0.15px;text-align:right;">12</div>
<div style="left:832px;top:175px;width:89px;height:25px;background:#fff"></div>
<div style="left:922px;top:175px;width:40px;height:25px;background:#fff"></div>
<div style="left:0px;top:199px;width:962px;height:1px;background:#a0a0a0"></div>
<div style="left:0px;top:200px;width:69px;height:25px;background:#fff"></div>
<div class="t" style="left:3px;top:204px;font-size:16px;color:#000;width:64px;overflow:hidden;line-height:20px;-webkit-text-stroke:0.2px #fff;letter-spacing:-0.15px;">15</div>
<div style="left:70px;top:200px;width:204px;height:25px;background:#fff"></div>
<div class="t" style="left:73px;top:204px;font-size:16px;color:#000;width:199px;overflow:hidden;line-height:20px;-webkit-text-stroke:0.2px #fff;letter-spacing:-0.093px;">E30-3-2</div>
<div style="left:275px;top:200px;width:379px;height:25px;background:#fff"></div>
<div class="t" style="left:278px;top:204px;font-size:16px;color:#000;width:374px;overflow:hidden;line-height:20px;-webkit-text-stroke:0.2px #fff;letter-spacing:0.22px;">ЗАСЫПКА ПАЗУХ ГРАВИЙНО-ПЕСЧАНОЙ СМЕСЬЮ</div>
<div style="left:655px;top:200px;width:69px;height:25px;background:#fff"></div>
<div class="t" style="left:658px;top:204px;font-size:16px;color:#000;width:64px;overflow:hidden;line-height:20px;-webkit-text-stroke:0.2px #fff;letter-spacing:0.017px;">100 М3 ГР</div>
<div style="left:725px;top:200px;width:106px;height:25px;background:#fff"></div>
<div class="t" style="left:725px;top:204px;font-size:16px;color:#000;width:103px;overflow:hidden;line-height:20px;-webkit-text-stroke:0.2px #fff;letter-spacing:-0.15px;text-align:right;">0,01</div>
<div style="left:832px;top:200px;width:89px;height:25px;background:#fff"></div>
<div style="left:922px;top:200px;width:40px;height:25px;background:#fff"></div>
<div class="t" style="left:922px;top:204px;font-size:16px;color:#000;width:37px;overflow:hidden;line-height:20px;-webkit-text-stroke:0.2px #fff;letter-spacing:-0.15px;text-align:right;">6</div>
<div style="left:0px;top:224px;width:962px;height:1px;background:#a0a0a0"></div>
<div style="left:0px;top:225px;width:69px;height:25px;background:#fff"></div>
<div class="t" style="left:3px;top:229px;font-size:16px;color:#000;width:64px;overflow:hidden;line-height:20px;-webkit-text-stroke:0.2px #fff;letter-spacing:-0.15px;">16</div>
<div style="left:70px;top:225px;width:204px;height:25px;background:#fff"></div>
<div class="t" style="left:73px;top:229px;font-size:16px;color:#000;width:199px;overflow:hidden;line-height:20px;-webkit-text-stroke:0.2px #fff;letter-spacing:-0.15px;">7/3-70-21/34</div>
<div style="left:275px;top:225px;width:379px;height:25px;background:#fff"></div>
<div class="t" style="left:278px;top:229px;font-size:16px;color:#000;width:374px;overflow:hidden;line-height:20px;-webkit-text-stroke:0.2px #fff;letter-spacing:0.2px;">ГРАВИЙНО-ПЕСЧАНАЯ СМЕСЬ С5</div>
<div style="left:655px;top:225px;width:69px;height:25px;background:#fff"></div>
<div class="t" style="left:658px;top:229px;font-size:16px;color:#000;width:64px;overflow:hidden;line-height:20px;-webkit-text-stroke:0.2px #fff;letter-spacing:0.05px;">М3</div>
<div style="left:725px;top:225px;width:106px;height:25px;background:#fff"></div>
<div class="t" style="left:725px;top:229px;font-size:16px;color:#000;width:103px;overflow:hidden;line-height:20px;-webkit-text-stroke:0.2px #fff;letter-spacing:-0.15px;text-align:right;">1,1</div>
<div style="left:832px;top:225px;width:89px;height:25px;background:#fff"></div>
<div style="left:922px;top:225px;width:40px;height:25px;background:#fff"></div>
<div style="left:0px;top:249px;width:962px;height:1px;background:#a0a0a0"></div>
<div style="left:0px;top:250px;width:69px;height:25px;background:#0078d7"></div>
<div class="t" style="left:3px;top:254px;font-size:16px;color:#fff;width:64px;overflow:hidden;line-height:20px;-webkit-text-stroke:0.2px #0078d7;letter-spacing:-0.15px;">17</div>
<div style="left:70px;top:250px;width:204px;height:25px;background:#fff"></div>
<div style="left:275px;top:250px;width:379px;height:25px;background:#0078d7"></div>
<div class="t" style="left:278px;top:254px;font-size:16px;color:#fff;width:374px;overflow:hidden;line-height:20px;-webkit-text-stroke:0.2px #0078d7;letter-spacing:0.231px;">УСТРОЙСТВО ОДНОСЛОЙНЫХ ПОКРЫТИЙ ТОЛЩИНОЙ</div>
<div style="left:655px;top:250px;width:69px;height:25px;background:#0078d7"></div>
<div class="t" style="left:658px;top:254px;font-size:16px;color:#fff;width:64px;overflow:hidden;line-height:20px;-webkit-text-stroke:0.2px #0078d7;letter-spacing:-0.071px;">1000 М2</div>
<div style="left:725px;top:250px;width:106px;height:25px;background:#0078d7"></div>
<div class="t" style="left:725px;top:254px;font-size:16px;color:#fff;width:103px;overflow:hidden;line-height:20px;-webkit-text-stroke:0.2px #0078d7;letter-spacing:-0.15px;text-align:right;">0,187</div>
<div style="left:832px;top:250px;width:89px;height:25px;background:#0078d7"></div>
<div style="left:922px;top:250px;width:40px;height:25px;background:#0078d7"></div>
<div class="t" style="left:922px;top:254px;font-size:16px;color:#fff;width:37px;overflow:hidden;line-height:20px;-webkit-text-stroke:0.2px #0078d7;letter-spacing:-0.15px;text-align:right;">6</div>
<div style="left:0px;top:274px;width:962px;height:1px;background:#a0a0a0"></div>
<div style="left:0px;top:275px;width:69px;height:25px;background:#fff"></div>
<div class="t" style="left:3px;top:279px;font-size:16px;color:#000;width:64px;overflow:hidden;line-height:20px;-webkit-text-stroke:0.2px #fff;letter-spacing:-0.15px;">18</div>
<div style="left:70px;top:275px;width:204px;height:25px;background:#fff"></div>
<div class="t" style="left:73px;top:279px;font-size:16px;color:#000;width:199px;overflow:hidden;line-height:20px;-webkit-text-stroke:0.2px #fff;letter-spacing:-0.15px;">1/10-280-20/40</div>
<div style="left:275px;top:275px;width:379px;height:25px;background:#fff"></div>
<div class="t" style="left:278px;top:279px;font-size:16px;color:#000;width:374px;overflow:hidden;line-height:20px;-webkit-text-stroke:0.2px #fff;letter-spacing:0.25px;">ВОДА</div>
<div style="left:655px;top:275px;width:69px;height:25px;background:#fff"></div>
<div class="t" style="left:658px;top:279px;font-size:16px;color:#000;width:64px;overflow:hidden;line-height:20px;-webkit-text-stroke:0.2px #fff;letter-spacing:0.05px;">М3</div>
<div style="left:725px;top:275px;width:106px;height:25px;background:#fff"></div>
<div class="t" style="left:725px;top:279px;font-size:16px;color:#000;width:103px;overflow:hidden;line-height:20px;-webkit-text-stroke:0.2px #fff;letter-spacing:-0.15px;text-align:right;">4,675</div>
<div style="left:832px;top:275px;width:89px;height:25px;background:#fff"></div>
<div style="left:922px;top:275px;width:40px;height:25px;background:#fff"></div>
<div style="left:0px;top:299px;width:962px;height:1px;background:#a0a0a0"></div>
<div style="left:0px;top:300px;width:69px;height:25px;background:#fff"></div>
<div class="t" style="left:3px;top:304px;font-size:16px;color:#000;width:64px;overflow:hidden;line-height:20px;-webkit-text-stroke:0.2px #fff;letter-spacing:-0.15px;">19</div>
<div style="left:70px;top:300px;width:204px;height:25px;background:#fff"></div>
<div class="t" style="left:73px;top:304px;font-size:16px;color:#000;width:199px;overflow:hidden;line-height:20px;-webkit-text-stroke:0.2px #fff;letter-spacing:-0.106px;">E27-251-3</div>
<div style="left:275px;top:300px;width:379px;height:25px;background:#fff"></div>
<div class="t" style="left:278px;top:304px;font-size:16px;color:#000;width:374px;overflow:hidden;line-height:20px;-webkit-text-stroke:0.2px #fff;letter-spacing:0.2px;">ДОБАВЛЯТЬ ИЛИ ИСКЛЮЧАТЬ НА КАЖДЫЙ 1 СМ</div>
<div style="left:655px;top:300px;width:69px;height:25px;background:#fff"></div>
<div class="t" style="left:658px;top:304px;font-size:16px;color:#000;width:64px;overflow:hidden;line-height:20px;-webkit-text-stroke:0.2px #fff;letter-spacing:-0.071px;">1000 М2</div>
<div style="left:725px;top:300px;width:106px;height:25px;background:#fff"></div>
<div class="t" style="left:725px;top:304px;font-size:16px;color:#000;width:103px;overflow:hidden;line-height:20px;-webkit-text-stroke:0.2px #fff;letter-spacing:-0.15px;text-align:right;">-0,561</div>
<div style="left:832px;top:300px;width:89px;height:25px;background:#fff"></div>
<div style="left:922px;top:300px;width:40px;height:25px;background:#fff"></div>
<div class="t" style="left:922px;top:304px;font-size:16px;color:#000;width:37px;overflow:hidden;line-height:20px;-webkit-text-stroke:0.2px #fff;letter-spacing:-0.15px;text-align:right;">6</div>
<div style="left:0px;top:324px;width:962px;height:1px;background:#a0a0a0"></div>
<div style="left:0px;top:325px;width:69px;height:25px;background:#fff"></div>
<div class="t" style="left:3px;top:329px;font-size:16px;color:#000;width:64px;overflow:hidden;line-height:20px;-webkit-text-stroke:0.2px #fff;letter-spacing:-0.15px;">20</div>
<div style="left:70px;top:325px;width:204px;height:25px;background:#fff"></div>
<div class="t" style="left:73px;top:329px;font-size:16px;color:#000;width:199px;overflow:hidden;line-height:20px;-webkit-text-stroke:0.2px #fff;letter-spacing:-0.15px;">1/10-280-20/40</div>
<div style="left:275px;top:325px;width:379px;height:25px;background:#fff"></div>
<div class="t" style="left:278px;top:329px;font-size:16px;color:#000;width:374px;overflow:hidden;line-height:20px;-webkit-text-stroke:0.2px #fff;letter-spacing:0.25px;">ВОДА</div>
<div style="left:655px;top:325px;width:69px;height:25px;background:#fff"></div>
<div class="t" style="left:658px;top:329px;font-size:16px;color:#000;width:64px;overflow:hidden;line-height:20px;-webkit-text-stroke:0.2px #fff;letter-spacing:0.05px;">М3</div>
<div style="left:725px;top:325px;width:106px;height:25px;background:#fff"></div>
<div class="t" style="left:725px;top:329px;font-size:16px;color:#000;width:103px;overflow:hidden;line-height:20px;-webkit-text-stroke:0.2px #fff;letter-spacing:-0.15px;text-align:right;">-0,9537</div>
<div style="left:832px;top:325px;width:89px;height:25px;background:#fff"></div>
<div style="left:922px;top:325px;width:40px;height:25px;background:#fff"></div>
<div style="left:0px;top:349px;width:962px;height:1px;background:#a0a0a0"></div>
<div style="left:0px;top:350px;width:69px;height:25px;background:#fff"></div>
<div class="t" style="left:3px;top:354px;font-size:16px;color:#000;width:64px;overflow:hidden;line-height:20px;-webkit-text-stroke:0.2px #fff;letter-spacing:-0.15px;">21</div>
<div style="left:70px;top:350px;width:204px;height:25px;background:#fff"></div>
<div class="t" style="left:73px;top:354px;font-size:16px;color:#000;width:199px;overflow:hidden;line-height:20px;-webkit-text-stroke:0.2px #fff;letter-spacing:-0.106px;">E70-234-2</div>
<div style="left:275px;top:350px;width:379px;height:25px;background:#fff"></div>
<div class="t" style="left:278px;top:354px;font-size:16px;color:#000;width:374px;overflow:hidden;line-height:20px;-webkit-text-stroke:0.2px #fff;letter-spacing:0.237px;">ПОГРУЗКА АСФАЛЬТОГРАНУЛЯТА ПОГРУЗЧИКАМИ</div>
<div style="left:655px;top:350px;width:69px;height:25px;background:#fff"></div>
<div class="t" style="left:658px;top:354px;font-size:16px;color:#000;width:64px;overflow:hidden;line-height:20px;-webkit-text-stroke:0.2px #fff;letter-spacing:-0.058px;">100 М3</div>
<div style="left:725px;top:350px;width:106px;height:25px;background:#fff"></div>
<div class="t" style="left:725px;top:354px;font-size:16px;color:#000;width:103px;overflow:hidden;line-height:20px;-webkit-text-stroke:0.2px #fff;letter-spacing:-0.15px;text-align:right;">0,299</div>
<div style="left:832px;top:350px;width:89px;height:25px;background:#fff"></div>
<div style="left:922px;top:350px;width:40px;height:25px;background:#fff"></div>
<div class="t" style="left:922px;top:354px;font-size:16px;color:#000;width:37px;overflow:hidden;line-height:20px;-webkit-text-stroke:0.2px #fff;letter-spacing:-0.15px;text-align:right;">6</div>
<div style="left:0px;top:374px;width:962px;height:1px;background:#a0a0a0"></div>
<div style="left:69px;top:0px;width:1px;height:375px;background:#a0a0a0"></div>
<div style="left:274px;top:0px;width:1px;height:375px;background:#a0a0a0"></div>
<div style="left:654px;top:0px;width:1px;height:375px;background:#a0a0a0"></div>
<div style="left:724px;top:0px;width:1px;height:375px;background:#a0a0a0"></div>
<div style="left:831px;top:0px;width:1px;height:375px;background:#a0a0a0"></div>
<div style="left:921px;top:0px;width:1px;height:375px;background:#a0a0a0"></div>
</div>
<div style="left:610px;top:1050px;width:204px;height:24px;background:#fff;border:1px dotted #333;box-sizing:border-box"></div>
<div style="left:612px;top:1052px;width:74px;height:20px;background:#0078d7"></div>
<div class="t" style="left:613px;top:1053px;font-size:16px;color:#fff;line-height:20px;-webkit-text-stroke:0.2px #0078d7;letter-spacing:-0.106px;">E27-251-1</div>
<div style="left:686px;top:1052px;width:1px;height:20px;background:#f08020"></div>
<div style="left:1493px;top:694px;width:16px;height:469px;background:repeating-conic-gradient(#fdfdfd 0 25%,#ebebeb 0 50%) 0 0/2px 2px"></div>
<div style="left:1493px;top:694px;width:16px;height:17px;background:#f0f0f0;border:1px solid #d8d8d8;box-sizing:border-box"></div>
<svg style="left:1497px;top:700px" width="9" height="5" viewBox="0 0 9 5"><path d="M0 5h9l-4.5-5z" fill="#000"/></svg>
<div style="left:1493px;top:1146px;width:16px;height:17px;background:#f0f0f0;border:1px solid #d8d8d8;box-sizing:border-box"></div>
<svg style="left:1497px;top:1152px" width="9" height="5" viewBox="0 0 9 5"><path d="M0 0h9l-4.5 5z" fill="#000"/></svg>
<div style="left:1493px;top:793px;width:16px;height:189px;background:#f0f0f0;border:1px solid #d8d8d8;box-sizing:border-box"></div>
<div style="left:540px;top:1163px;width:969px;height:17px;background:#f0f0f0"></div>
<div style="left:540px;top:1163px;width:17px;height:17px;background:#f0f0f0;border-right:1px solid #d0d0d0"></div>
<svg style="left:545px;top:1167px" width="5" height="9" viewBox="0 0 5 9"><path d="M5 0v9l-5-4.5z" fill="#000"/></svg>
<div style="left:1476px;top:1163px;width:17px;height:17px;background:#f0f0f0;border-left:1px solid #d0d0d0"></div>
<svg style="left:1482px;top:1167px" width="5" height="9" viewBox="0 0 5 9"><path d="M0 0v9l5-4.5z" fill="#000"/></svg>
<div style="left:1493px;top:1163px;width:16px;height:17px;background:repeating-conic-gradient(#fdfdfd 0 25%,#ebebeb 0 50%) 0 0/2px 2px"></div>
<div style="left:1513px;top:638px;width:16px;height:550px;background:#f0f0f0;border-left:1px solid #a0a0a0;border-right:1px solid #a0a0a0;box-sizing:border-box;box-shadow:inset 1px 0 0 #fff"></div>
<svg style="left:1516px;top:641px" width="11" height="12" viewBox="0 0 11 12"><path d="M0 4h5v-4l6 6-6 6v-4h-5z" fill="#f00000"/></svg>
<svg style="left:1517px;top:888px" width="7" height="60" viewBox="0 0 7 60"><path d="M6 0l-5 3 5 3zM1 7l5 3-5 3z" fill="#000"/><path d="M3.5 15v30" stroke="#000" stroke-dasharray="1 1" stroke-width="3"/><path d="M1 47l5 3-5 3zM6 54l-5 3 5 3z" fill="#000"/></svg>
<div style="left:1530px;top:645px;width:660px;height:540px;border:1px solid #a0a0a0;border-right:none;border-bottom:none;box-sizing:border-box;box-shadow:inset 1px 1px 0 #fff"></div>
<div style="left:1535px;top:637px;width:120px;height:16px;background:#f0f0f0"></div>
<div class="t" style="left:1538px;top:637px;font-size:14px;color:#000;line-height:18px;font-weight:bold;letter-spacing:0.45px">Параметры НРР</div>
<div style="left:1532px;top:659px;width:655px;height:24px;background:#fff"></div>
<div style="left:1532px;top:682px;width:655px;height:2px;background:#111"></div>
<div style="left:1628px;top:661px;width:77px;height:23px;background:#f0f0f0;border:2px solid #111;border-bottom:none;box-sizing:border-box"></div>
<div class="t" style="left:1543px;top:664px;font-size:14px;color:#000;line-height:18px;font-weight:bold;letter-spacing:0.25px">Стоимости</div>
<div class="t" style="left:1633px;top:664px;font-size:14px;color:#000;line-height:18px;font-weight:bold;">Ресурсы</div>
<div class="t" style="left:1708px;top:664px;font-size:14px;color:#000;line-height:18px;font-weight:bold;">Состав работ</div>
<svg style="left:1537px;top:691px;" width="24" height="24" viewBox="0 0 24 24"><path d="M4.5 0.5h12l5 5v16.5h-17z" fill="#fff" stroke="#7f9fd0"/><path d="M16.5 0.5v5h5" fill="#d8e4f6" stroke="#7f9fd0"/><path d="M7 4h7M7 7h12M7 9.5h12M7 12h12M7 14.5h12M7 17h12M7 19.5h12" stroke="#c0c6d0" stroke-width="1"/><path d="M4 9h4v4h4v4h-4v4h-4v-4h-4v-4h4z" fill="#58d830" stroke="#185800" stroke-width="1"/></svg>
<svg style="left:1569px;top:691px;" width="24" height="24" viewBox="0 0 24 24"><path d="M4.5 0.5h12l5 5v16.5h-17z" fill="#fff" stroke="#7f9fd0"/><path d="M16.5 0.5v5h5" fill="#d8e4f6" stroke="#7f9fd0"/><path d="M7 4h7M7 7h12M7 9.5h12M7 12h12M7 14.5h12M7 17h12M7 19.5h12" stroke="#c0c6d0" stroke-width="1"/><path d="M1 12l3-2 3 3 3-3 3 2-3.5 4 3.5 4-3 2-3-3-3 3-3-2 3.5-4z" fill="#f0541c" stroke="#701800" stroke-width=".8"/></svg>
<div style="left:1532px;top:720px;width:655px;height:461px;background:#fff;border:1px solid #a0a0a0;border-right:none;box-sizing:border-box"></div>
<div style="left:1533px;top:721px;width:654px;height:66px;background:#f0f0f0"></div>
<div style="left:1533px;top:786px;width:654px;height:1px;background:#a0a0a0"></div>
<div style="left:1715px;top:723px;width:1px;height:63px;background:#a0a0a0"></div>
<div style="left:1795px;top:723px;width:1px;height:63px;background:#a0a0a0"></div>
<div style="left:1915px;top:723px;width:1px;height:63px;background:#a0a0a0"></div>
<div style="left:2000px;top:723px;width:1px;height:63px;background:#a0a0a0"></div>
<div style="left:2059px;top:723px;width:1px;height:63px;background:#a0a0a0"></div>
<div class="t" style="left:1536px;top:724px;font-size:16px;color:#000;line-height:20px;-webkit-text-stroke:0.2px #fff;letter-spacing:0.25px;">Ресурс</div>
<div class="t" style="left:1719px;top:724px;font-size:16px;color:#000;line-height:20px;-webkit-text-stroke:0.2px #fff;letter-spacing:0.25px;">Количест<br>во</div>
<div class="t" style="left:1799px;top:724px;font-size:16px;color:#000;line-height:20px;-webkit-text-stroke:0.2px #fff;letter-spacing:0.216px;">Количество с<br>коэфф.</div>
<div class="t" style="left:1919px;top:724px;font-size:16px;color:#000;line-height:20px;-webkit-text-stroke:0.2px #fff;letter-spacing:0.25px;">Единица<br>измерени<br>я</div>
<div class="t" style="left:2004px;top:724px;font-size:16px;color:#000;line-height:20px;-webkit-text-stroke:0.2px #fff;letter-spacing:0.25px;">Цена</div>
<div class="t" style="left:2063px;top:724px;font-size:16px;color:#000;line-height:20px;-webkit-text-stroke:0.2px #fff;letter-spacing:0.25px;">Наименование</div>
<div style="left:1533px;top:787px;width:182px;height:25px;background:#fff"></div>
<div class="t" style="left:1536px;top:790px;font-size:16px;color:#000;width:177px;overflow:hidden;line-height:20px;-webkit-text-stroke:0.2px #fff;letter-spacing:-0.093px;">M070148</div>
<div style="left:1716px;top:787px;width:79px;height:25px;background:#f0f0f0"></div>
<div class="t" style="left:1719px;top:790px;font-size:16px;color:#000;width:74px;overflow:hidden;line-height:20px;-webkit-text-stroke:0.2px #fff;letter-spacing:-0.15px;">3,19</div>
<div style="left:1796px;top:787px;width:119px;height:25px;background:#f0f0f0"></div>
<div class="t" style="left:1799px;top:790px;font-size:16px;color:#000;width:114px;overflow:hidden;line-height:20px;-webkit-text-stroke:0.2px #fff;letter-spacing:-0.15px;">3,19</div>
<div style="left:1916px;top:787px;width:84px;height:25px;background:#f0f0f0"></div>
<div class="t" style="left:1919px;top:790px;font-size:16px;color:#000;width:79px;overflow:hidden;line-height:20px;-webkit-text-stroke:0.2px #fff;letter-spacing:0.142px;">МАШ. Ч</div>
<div style="left:2001px;top:787px;width:58px;height:25px;background:#f0f0f0"></div>
<div class="t" style="left:2004px;top:790px;font-size:16px;color:#000;width:53px;overflow:hidden;line-height:20px;-webkit-text-stroke:0.2px #fff;letter-spacing:-0.15px;">36,53</div>
<div style="left:2060px;top:787px;width:127px;height:25px;background:#f0f0f0"></div>
<div class="t" style="left:2063px;top:790px;font-size:16px;color:#000;width:122px;overflow:hidden;line-height:20px;-webkit-text-stroke:0.2px #fff;letter-spacing:0.232px;">БУЛЬДОЗЕРЫ ПРИ</div>
<div style="left:1533px;top:811px;width:654px;height:1px;background:#a0a0a0"></div>
<div style="left:1533px;top:812px;width:182px;height:25px;background:#fff"></div>
<div class="t" style="left:1536px;top:815px;font-size:16px;color:#000;width:177px;overflow:hidden;line-height:20px;-webkit-text-stroke:0.2px #fff;letter-spacing:-0.093px;">M121010</div>
<div style="left:1716px;top:812px;width:79px;height:25px;background:#fff"></div>
<div class="t" style="left:1719px;top:815px;font-size:16px;color:#0000ff;width:74px;overflow:hidden;line-height:20px;-webkit-text-stroke:0.2px #fff;letter-spacing:-0.15px;">33,44</div>
<div style="left:1796px;top:812px;width:119px;height:25px;background:#fff"></div>
<div class="t" style="left:1799px;top:815px;font-size:16px;color:#000;width:114px;overflow:hidden;line-height:20px;-webkit-text-stroke:0.2px #fff;letter-spacing:-0.15px;">33,44</div>
<div style="left:1916px;top:812px;width:84px;height:25px;background:#fff"></div>
<div class="t" style="left:1919px;top:815px;font-size:16px;color:#000;width:79px;overflow:hidden;line-height:20px;-webkit-text-stroke:0.2px #fff;letter-spacing:0.142px;">МАШ. Ч</div>
<div style="left:2001px;top:812px;width:58px;height:25px;background:#fff"></div>
<div class="t" style="left:2004px;top:815px;font-size:16px;color:#000;width:53px;overflow:hidden;line-height:20px;-webkit-text-stroke:0.2px #fff;letter-spacing:-0.15px;">3,09</div>
<div style="left:2060px;top:812px;width:127px;height:25px;background:#fff"></div>
<div class="t" style="left:2063px;top:815px;font-size:16px;color:#000;width:122px;overflow:hidden;line-height:20px;-webkit-text-stroke:0.2px #fff;letter-spacing:0.229px;">ВИБРОПЛИТА И</div>
<div style="left:1533px;top:836px;width:654px;height:1px;background:#a0a0a0"></div>
<div style="left:1533px;top:837px;width:182px;height:25px;background:#fff"></div>
<div class="t" style="left:1536px;top:840px;font-size:16px;color:#000;width:177px;overflow:hidden;line-height:20px;-webkit-text-stroke:0.2px #fff;letter-spacing:-0.093px;">M121601</div>
<div style="left:1716px;top:837px;width:79px;height:25px;background:#fff"></div>
<div class="t" style="left:1719px;top:840px;font-size:16px;color:#0000ff;width:74px;overflow:hidden;line-height:20px;-webkit-text-stroke:0.2px #fff;letter-spacing:-0.15px;">1,09</div>
<div style="left:1796px;top:837px;width:119px;height:25px;background:#fff"></div>
<div class="t" style="left:1799px;top:840px;font-size:16px;color:#000;width:114px;overflow:hidden;line-height:20px;-webkit-text-stroke:0.2px #fff;letter-spacing:-0.15px;">1,09</div>
<div style="left:1916px;top:837px;width:84px;height:25px;background:#fff"></div>
<div class="t" style="left:1919px;top:840px;font-size:16px;color:#000;width:79px;overflow:hidden;line-height:20px;-webkit-text-stroke:0.2px #fff;letter-spacing:0.142px;">МАШ. Ч</div>
<div style="left:2001px;top:837px;width:58px;height:25px;background:#fff"></div>
<div class="t" style="left:2004px;top:840px;font-size:16px;color:#000;width:53px;overflow:hidden;line-height:20px;-webkit-text-stroke:0.2px #fff;letter-spacing:-0.15px;">46,68</div>
<div style="left:2060px;top:837px;width:127px;height:25px;background:#fff"></div>
<div class="t" style="left:2063px;top:840px;font-size:16px;color:#000;width:122px;overflow:hidden;line-height:20px;-webkit-text-stroke:0.2px #fff;letter-spacing:0.227px;">МАШИНЫ ПОЛИ</div>
<div style="left:1533px;top:861px;width:654px;height:1px;background:#a0a0a0"></div>
<div style="left:1533px;top:862px;width:182px;height:25px;background:#fff"></div>
<div class="t" style="left:1536px;top:865px;font-size:16px;color:#000;width:177px;overflow:hidden;line-height:20px;-webkit-text-stroke:0.2px #fff;letter-spacing:-0.05px;">С1-1</div>
<div style="left:1716px;top:862px;width:79px;height:25px;background:#fff"></div>
<div class="t" style="left:1719px;top:865px;font-size:16px;color:#0000ff;width:74px;overflow:hidden;line-height:20px;-webkit-text-stroke:0.2px #fff;letter-spacing:-0.15px;">65,36</div>
<div style="left:1796px;top:862px;width:119px;height:25px;background:#fff"></div>
<div class="t" style="left:1799px;top:865px;font-size:16px;color:#000;width:114px;overflow:hidden;line-height:20px;-webkit-text-stroke:0.2px #fff;letter-spacing:-0.15px;">65,36</div>
<div style="left:1916px;top:862px;width:84px;height:25px;background:#fff"></div>
<div class="t" style="left:1919px;top:865px;font-size:16px;color:#000;width:79px;overflow:hidden;line-height:20px;-webkit-text-stroke:0.2px #fff;letter-spacing:0.142px;">ЧЕЛ. Ч</div>
<div style="left:2001px;top:862px;width:58px;height:25px;background:#fff"></div>
<div class="t" style="left:2004px;top:865px;font-size:16px;color:#000;width:53px;overflow:hidden;line-height:20px;-webkit-text-stroke:0.2px #fff;letter-spacing:-0.15px;">0</div>
<div style="left:2060px;top:862px;width:127px;height:25px;background:#fff"></div>
<div class="t" style="left:2063px;top:865px;font-size:16px;color:#000;width:122px;overflow:hidden;line-height:20px;-webkit-text-stroke:0.2px #fff;letter-spacing:0.231px;">ЗАТРАТЫ ТРУДА</div>
<div style="left:1533px;top:886px;width:654px;height:1px;background:#a0a0a0"></div>
<div style="left:1533px;top:887px;width:182px;height:25px;background:#fff"></div>
<div class="t" style="left:1536px;top:890px;font-size:16px;color:#000;width:177px;overflow:hidden;line-height:20px;-webkit-text-stroke:0.2px #fff;letter-spacing:-0.05px;">С1-3</div>
<div style="left:1716px;top:887px;width:79px;height:25px;background:#fff"></div>
<div class="t" style="left:1719px;top:890px;font-size:16px;color:#000;width:74px;overflow:hidden;line-height:20px;-webkit-text-stroke:0.2px #fff;letter-spacing:-0.15px;">4,28</div>
<div style="left:1796px;top:887px;width:119px;height:25px;background:#fff"></div>
<div class="t" style="left:1799px;top:890px;font-size:16px;color:#000;width:114px;overflow:hidden;line-height:20px;-webkit-text-stroke:0.2px #fff;letter-spacing:-0.15px;">4,28</div>
<div style="left:1916px;top:887px;width:84px;height:25px;background:#fff"></div>
<div class="t" style="left:1919px;top:890px;font-size:16px;color:#000;width:79px;overflow:hidden;line-height:20px;-webkit-text-stroke:0.2px #fff;letter-spacing:0.142px;">ЧЕЛ. Ч</div>
<div style="left:2001px;top:887px;width:58px;height:25px;background:#fff"></div>
<div class="t" style="left:2004px;top:890px;font-size:16px;color:#000;width:53px;overflow:hidden;line-height:20px;-webkit-text-stroke:0.2px #fff;letter-spacing:-0.15px;">0</div>
<div style="left:2060px;top:887px;width:127px;height:25px;background:#fff"></div>
<div class="t" style="left:2063px;top:890px;font-size:16px;color:#000;width:122px;overflow:hidden;line-height:20px;-webkit-text-stroke:0.2px #fff;letter-spacing:0.231px;">ЗАТРАТЫ ТРУДА</div>
<div style="left:1533px;top:911px;width:654px;height:1px;background:#a0a0a0"></div>
<div style="left:1533px;top:912px;width:182px;height:25px;background:#fff"></div>
<div class="t" style="left:1536px;top:915px;font-size:16px;color:#000;width:177px;overflow:hidden;line-height:20px;-webkit-text-stroke:0.2px #fff;letter-spacing:-0.05px;">С1-4</div>
<div style="left:1716px;top:912px;width:79px;height:25px;background:#fff"></div>
<div class="t" style="left:1719px;top:915px;font-size:16px;color:#000;width:74px;overflow:hidden;line-height:20px;-webkit-text-stroke:0.2px #fff;letter-spacing:-0.15px;">37,78</div>
<div style="left:1796px;top:912px;width:119px;height:25px;background:#fff"></div>
<div class="t" style="left:1799px;top:915px;font-size:16px;color:#000;width:114px;overflow:hidden;line-height:20px;-webkit-text-stroke:0.2px #fff;letter-spacing:-0.15px;">45,13</div>
<div style="left:1916px;top:912px;width:84px;height:25px;background:#fff"></div>
<div class="t" style="left:1919px;top:915px;font-size:16px;color:#000;width:79px;overflow:hidden;line-height:20px;-webkit-text-stroke:0.2px #fff;letter-spacing:0.15px;">РУБ.</div>
<div style="left:2001px;top:912px;width:58px;height:25px;background:#fff"></div>
<div class="t" style="left:2004px;top:915px;font-size:16px;color:#000;width:53px;overflow:hidden;line-height:20px;-webkit-text-stroke:0.2px #fff;letter-spacing:-0.15px;">0</div>
<div style="left:2060px;top:912px;width:127px;height:25px;background:#fff"></div>
<div class="t" style="left:2063px;top:915px;font-size:16px;color:#000;width:122px;overflow:hidden;line-height:20px;-webkit-text-stroke:0.2px #fff;letter-spacing:0.231px;">ЗАРАБОТНАЯ ПЛ</div>
<div style="left:1533px;top:936px;width:654px;height:1px;background:#a0a0a0"></div>
<div style="left:1715px;top:787px;width:1px;height:150px;background:#a0a0a0"></div>
<div style="left:1795px;top:787px;width:1px;height:150px;background:#a0a0a0"></div>
<div style="left:1915px;top:787px;width:1px;height:150px;background:#a0a0a0"></div>
<div style="left:2000px;top:787px;width:1px;height:150px;background:#a0a0a0"></div>
<div style="left:2059px;top:787px;width:1px;height:150px;background:#a0a0a0"></div>
<div style="left:1533px;top:787px;width:654px;height:25px;border:2px solid #111;border-right:none;box-sizing:border-box"></div>
<div style="left:1533px;top:1163px;width:654px;height:17px;background:repeating-conic-gradient(#fdfdfd 0 25%,#ebebeb 0 50%) 0 0/2px 2px"></div>
<div style="left:1533px;top:1163px;width:17px;height:17px;background:#f0f0f0;border:1px solid #d8d8d8;box-sizing:border-box"></div>
<svg style="left:1538px;top:1167px" width="5" height="9" viewBox="0 0 5 9"><path d="M5 0v9l-5-4.5z" fill="#000"/></svg>
<div style="left:1550px;top:1163px;width:460px;height:17px;background:#f0f0f0;border:1px solid #d0d0d0;box-sizing:border-box"></div>
<div style="left:2170px;top:1163px;width:17px;height:17px;background:#f0f0f0;border:1px solid #d8d8d8;box-sizing:border-box"></div>
<svg style="left:2176px;top:1167px" width="5" height="9" viewBox="0 0 5 9"><path d="M0 0v9l5-4.5z" fill="#000"/></svg>
<div style="left:538px;top:1181px;width:1649px;height:1px;background:#a0a0a0"></div>
<div style="left:0px;top:0px;width:1px;height:1184px;background:#0078d7"></div>
<div style="left:2188px;top:0px;width:1px;height:1184px;background:#0078d7"></div>
<div style="left:0px;top:1181px;width:537px;height:1px;background:#0078d7"></div>
<div style="left:0px;top:1182px;width:537px;height:1px;background:#fff"></div>
<div style="left:0px;top:1183px;width:537px;height:1px;background:#a040a0"></div>
<div style="left:537px;top:1182px;width:1650px;height:1px;background:#a0a0a0"></div>
<div style="left:537px;top:1183px;width:1650px;height:1px;background:#a0a0a0"></div></body></html>
